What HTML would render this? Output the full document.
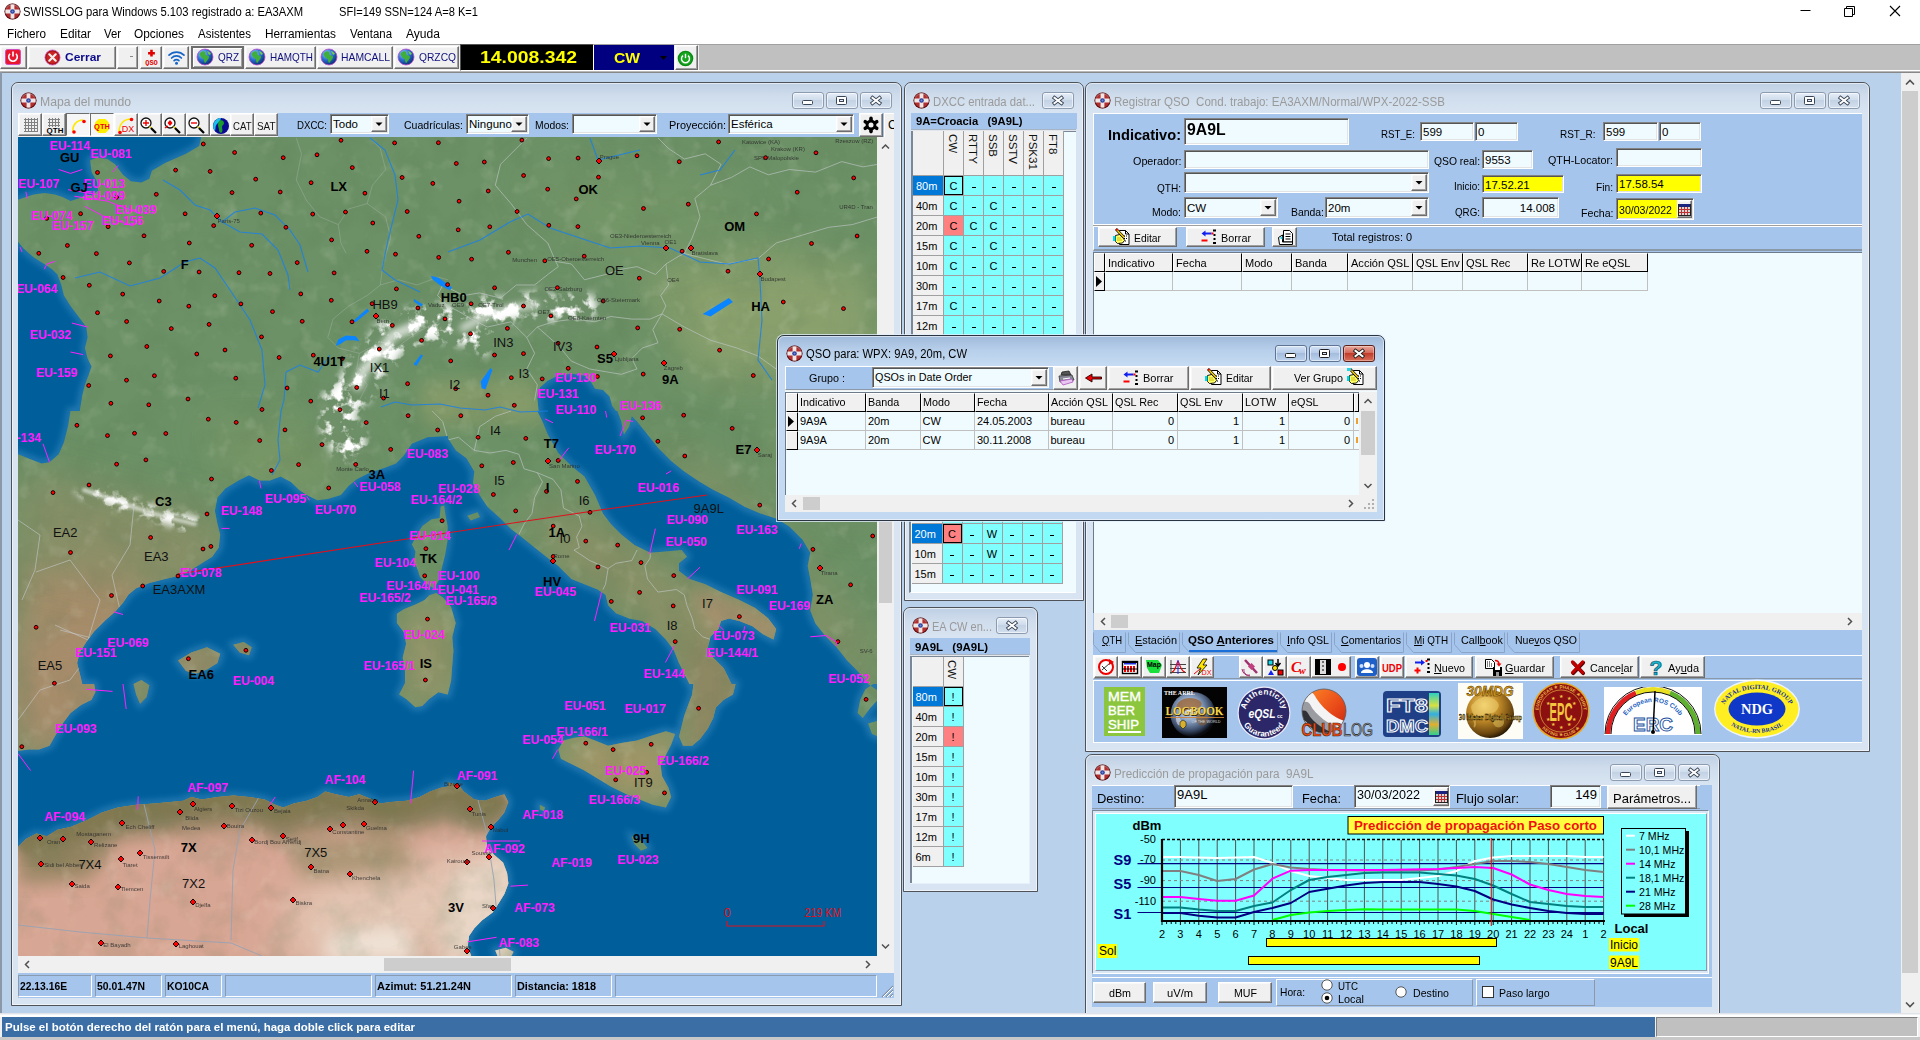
<!DOCTYPE html>
<html lang="es"><head><meta charset="utf-8"><title>SWISSLOG</title>
<style>
html,body{margin:0;padding:0;background:#b9d1ea;overflow:hidden}
#r{position:relative;width:1920px;height:1040px;overflow:hidden;font-family:"Liberation Sans",sans-serif;font-size:11px;background:#b9d1ea}
#r div,#r span.t,#r svg{position:absolute;box-sizing:border-box}
#r span.t{white-space:pre;display:block}
.sunk{border:1px solid;border-color:#828282 #fff #fff #828282;box-shadow:inset 1px 1px 0 #555,inset -1px -1px 0 #e3e3e3;background:#f0fbff}
.rais{border:1px solid;border-color:#fff #6d6d6d #6d6d6d #fff;box-shadow:inset -1px -1px 0 #a0a0a0,inset 1px 1px 0 #f8f8f8;background:#f0f0f0}
.pan{background:#a5c5ec}
.fr{border:1px solid #4f5258;border-radius:7px 7px 0 0;background:linear-gradient(#bfd0e5 0px,#d0ddec 14px,#d8e4f2 30px)}
.fra{border:1px solid #2b3440;border-radius:7px 7px 0 0;background:linear-gradient(#9fb9da 0px,#b7cfea 14px,#c6dbf3 30px,#c3d9f2 100%);box-shadow:0 0 0 1px rgba(225,240,255,.75)}
.cb{border:1px solid #8c9bb0;border-radius:3px;background:linear-gradient(#e6eef8,#cfdceb 45%,#c3d2e4 50%,#d3dfee);box-shadow:inset 0 0 0 1px rgba(255,255,255,.6)}
.cba{border:1px solid #5f7492;border-radius:3px;background:linear-gradient(#d4e3f6,#b7cce8 45%,#a4bddf 50%,#bdd2ec);box-shadow:inset 0 0 0 1px rgba(255,255,255,.5)}
.cbx{border:1px solid #5d2018;border-radius:3px;background:linear-gradient(#e9a99b,#d5695a 45%,#c13d2b 50%,#d9705a);box-shadow:inset 0 0 0 1px rgba(255,255,255,.35)}
</style></head>
<body><div id="r">
<div style="left:0px;top:0px;width:1920px;height:23px;background:#fff"></div>
<svg style="left:3.5px;top:3.0px" width="17.0" height="17.0" viewBox="-8.5 -8.5 17 17"><circle r="8" fill="#6e1215"/><circle r="7.1" fill="#b02f30"/><path d="M-1.9 -7.3h3.8v5.4h5.4v3.8h-5.4v5.4h-3.8v-5.4h-5.4v-3.8h5.4z" fill="#efe6e6"/><circle r="2.3" fill="#2a3f9c"/><circle r="1" fill="#6f86d8"/><path d="M-6.3 -3.2a7 7 0 0 1 12.6 0" fill="none" stroke="rgba(255,255,255,.3)" stroke-width="1.4"/><circle r="7.6" fill="none" stroke="rgba(60,0,0,.35)" stroke-width="1"/></svg>
<span class="t" style="left:23px;top:5px;font-size:12px;line-height:15px;height:15px;color:#000;transform:scaleX(0.9371);transform-origin:0 0;">SWISSLOG para Windows 5.103 registrado a: EA3AXM</span>
<span class="t" style="left:339px;top:5px;font-size:12px;line-height:15px;height:15px;color:#000;transform:scaleX(0.9260);transform-origin:0 0;">SFI=149 SSN=124 A=8 K=1</span>
<svg style="left:1780px;top:0" width="140" height="23" viewBox="0 0 140 23"><path d="M20.5 10.5h10" stroke="#000" stroke-width="1" fill="none"/><path d="M64.5 8.5h8v8h-8zM66.5 8.5v-2h8v8h-2" stroke="#000" stroke-width="1" fill="none"/><path d="M110 6l10 10M120 6l-10 10" stroke="#000" stroke-width="1.1" fill="none"/></svg>
<div style="left:0px;top:23px;width:1920px;height:21px;background:#fff"></div>
<span class="t" style="left:7px;top:27px;font-size:12px;line-height:15px;height:15px;color:#000;transform:scaleX(0.9747);transform-origin:0 0;">Fichero</span>
<span class="t" style="left:60px;top:27px;font-size:12px;line-height:15px;height:15px;color:#000;transform:scaleX(0.9890);transform-origin:0 0;">Editar</span>
<span class="t" style="left:104px;top:27px;font-size:12px;line-height:15px;height:15px;color:#000;transform:scaleX(0.9439);transform-origin:0 0;">Ver</span>
<span class="t" style="left:134px;top:27px;font-size:12px;line-height:15px;height:15px;color:#000;transform:scaleX(0.9863);transform-origin:0 0;">Opciones</span>
<span class="t" style="left:198px;top:27px;font-size:12px;line-height:15px;height:15px;color:#000;transform:scaleX(0.9574);transform-origin:0 0;">Asistentes</span>
<span class="t" style="left:265px;top:27px;font-size:12px;line-height:15px;height:15px;color:#000;transform:scaleX(0.9859);transform-origin:0 0;">Herramientas</span>
<span class="t" style="left:350px;top:27px;font-size:12px;line-height:15px;height:15px;color:#000;transform:scaleX(0.9536);transform-origin:0 0;">Ventana</span>
<span class="t" style="left:406px;top:27px;font-size:12px;line-height:15px;height:15px;color:#000;transform:scaleX(1.0057);transform-origin:0 0;">Ayuda</span>
<div style="left:0px;top:44px;width:1920px;height:28px;background:#c0c0c0;border-top:1px solid #a0a0a0;border-bottom:1px solid #fff"></div>
<div style="left:0px;top:70px;width:1920px;height:1px;background:#fff"></div>
<div style="left:0px;top:71px;width:1920px;height:2px;background:linear-gradient(#d0d0d0,#6f6f6f)"></div>
<div style="left:0px;top:45px;width:699px;height:25px;background:#f0f0f0"></div>
<div class="rais" style="left:0px;top:46px;width:27px;height:23px;"></div>
<div class="rais" style="left:28px;top:46px;width:88px;height:23px;"></div>
<div class="rais" style="left:117px;top:46px;width:21px;height:23px;"></div>
<div class="rais" style="left:140px;top:46px;width:22px;height:23px;"></div>
<div class="rais" style="left:163px;top:46px;width:26px;height:23px;"></div>
<div style="left:191px;top:46px;width:53px;height:23px;border:2px solid #6d6d6d;border-color:#6d6d6d #6d6d6d #6d6d6d #6d6d6d;box-shadow:inset 1px 1px 0 #fff,inset -1px -1px 0 #a0a0a0;background:#f0f0f0"></div>
<div class="rais" style="left:245px;top:46px;width:71px;height:23px;"></div>
<div class="rais" style="left:317px;top:46px;width:76px;height:23px;"></div>
<div class="rais" style="left:394px;top:46px;width:65px;height:23px;"></div>
<svg style="left:5px;top:49px" width="16" height="16" viewBox="0 0 16 16"><rect x=".5" y=".5" width="15" height="15" rx="2" fill="#e8172f" stroke="#d050c0"/><path d="M5 4.8a4.3 4.3 0 1 0 6 0" fill="none" stroke="#fff" stroke-width="1.6"/><path d="M8 2.5v5" stroke="#fff" stroke-width="1.6"/></svg>
<svg style="left:44px;top:49px" width="17" height="17" viewBox="0 0 17 17"><circle cx="8.5" cy="8.5" r="7.6" fill="#a3161a" stroke="#d060d0" stroke-width=".7"/><circle cx="8.5" cy="8.5" r="6" fill="#c22"/><path d="M5.3 5.3l6.4 6.4M11.7 5.3l-6.4 6.4" stroke="#eee" stroke-width="2.2" stroke-linecap="round"/></svg>
<span class="t" style="left:65px;top:51px;font-size:11.5px;line-height:13px;height:13px;color:#0a0a8c;font-weight:bold;transform:scaleX(1.0428);transform-origin:0 0;">Cerrar</span>
<div style="left:130px;top:56px;width:3px;height:1px;background:#888"></div>
<svg style="left:144px;top:49px" width="16" height="17" viewBox="0 0 16 17"><path d="M6 1h3v2.5h2.5v3H9V9H6V6.5H3.5v-3H6z" fill="#e00000" transform="translate(0,-.5) scale(.85) translate(1.3,.5)"/><text x="7.5" y="15.5" font-size="7" font-weight="bold" text-anchor="middle" fill="#e00000" font-family="Liberation Mono,monospace">QSO</text></svg>
<svg style="left:167px;top:48px" width="19" height="18" viewBox="0 0 19 18"><g fill="none" stroke="#1565c8" stroke-width="1.7" stroke-linecap="round"><path d="M2 7.2a10.5 10.5 0 0 1 15 0"/><path d="M4.6 10a6.8 6.8 0 0 1 9.8 0"/><path d="M7.1 12.7a3.3 3.3 0 0 1 4.8 0"/></g><circle cx="9.5" cy="15.3" r="1.5" fill="#1565c8"/></svg>
<svg style="left:196px;top:48px" width="18" height="18" viewBox="0 0 18 18"><defs><radialGradient id="gl205" cx="35%" cy="30%" r="75%"><stop offset="0" stop-color="#9fd4ff"/><stop offset=".5" stop-color="#2a6fd0"/><stop offset="1" stop-color="#0a2a70"/></radialGradient></defs><circle cx="9" cy="9" r="8" fill="url(#gl205)" stroke="#c04fd0" stroke-width=".8"/><path d="M4 5c2-2 4-2 5-1s0 2 1 3 3 0 3 2-2 3-3 5-2 0-2-2-2-1-3-3 -2-2-1-4z" fill="#3fae3a"/><path d="M11 3c1 0 3 1 4 3l-2 1z" fill="#6fcf4f"/></svg>
<span class="t" style="left:218px;top:51px;font-size:11px;line-height:13px;height:13px;color:#10107c;transform:scaleX(0.9044);transform-origin:0 0;">QRZ</span>
<svg style="left:248px;top:48px" width="18" height="18" viewBox="0 0 18 18"><defs><radialGradient id="gl257" cx="35%" cy="30%" r="75%"><stop offset="0" stop-color="#9fd4ff"/><stop offset=".5" stop-color="#2a6fd0"/><stop offset="1" stop-color="#0a2a70"/></radialGradient></defs><circle cx="9" cy="9" r="8" fill="url(#gl257)" stroke="#c04fd0" stroke-width=".8"/><path d="M4 5c2-2 4-2 5-1s0 2 1 3 3 0 3 2-2 3-3 5-2 0-2-2-2-1-3-3 -2-2-1-4z" fill="#3fae3a"/><path d="M11 3c1 0 3 1 4 3l-2 1z" fill="#6fcf4f"/></svg>
<span class="t" style="left:270px;top:51px;font-size:11px;line-height:13px;height:13px;color:#10107c;transform:scaleX(0.9022);transform-origin:0 0;">HAMQTH</span>
<svg style="left:320px;top:48px" width="18" height="18" viewBox="0 0 18 18"><defs><radialGradient id="gl329" cx="35%" cy="30%" r="75%"><stop offset="0" stop-color="#9fd4ff"/><stop offset=".5" stop-color="#2a6fd0"/><stop offset="1" stop-color="#0a2a70"/></radialGradient></defs><circle cx="9" cy="9" r="8" fill="url(#gl329)" stroke="#c04fd0" stroke-width=".8"/><path d="M4 5c2-2 4-2 5-1s0 2 1 3 3 0 3 2-2 3-3 5-2 0-2-2-2-1-3-3 -2-2-1-4z" fill="#3fae3a"/><path d="M11 3c1 0 3 1 4 3l-2 1z" fill="#6fcf4f"/></svg>
<span class="t" style="left:341px;top:51px;font-size:11px;line-height:13px;height:13px;color:#10107c;transform:scaleX(0.9430);transform-origin:0 0;">HAMCALL</span>
<svg style="left:397px;top:48px" width="18" height="18" viewBox="0 0 18 18"><defs><radialGradient id="gl406" cx="35%" cy="30%" r="75%"><stop offset="0" stop-color="#9fd4ff"/><stop offset=".5" stop-color="#2a6fd0"/><stop offset="1" stop-color="#0a2a70"/></radialGradient></defs><circle cx="9" cy="9" r="8" fill="url(#gl406)" stroke="#c04fd0" stroke-width=".8"/><path d="M4 5c2-2 4-2 5-1s0 2 1 3 3 0 3 2-2 3-3 5-2 0-2-2-2-1-3-3 -2-2-1-4z" fill="#3fae3a"/><path d="M11 3c1 0 3 1 4 3l-2 1z" fill="#6fcf4f"/></svg>
<span class="t" style="left:419px;top:51px;font-size:11px;line-height:13px;height:13px;color:#10107c;transform:scaleX(0.9316);transform-origin:0 0;">QRZCQ</span>
<div style="left:460px;top:44px;width:134px;height:27px;background:#000;border:1px solid #555;border-color:#555 #fff #fff #555"></div>
<div style="left:461px;top:45px;width:131px;height:25px;background:#000"></div>
<span class="t" style="left:480px;top:49px;font-size:16px;line-height:18px;height:18px;color:#ffff00;font-weight:bold;transform:scaleX(1.2114);transform-origin:0 0;">14.008.342</span>
<div style="left:594px;top:45px;width:80px;height:25px;background:#000080"></div>
<span class="t" style="left:613.5px;top:51px;font-size:14px;line-height:15px;height:15px;color:#ffff00;font-weight:bold;transform:scaleX(1.1147);transform-origin:0 0;">CW</span>
<svg style="left:660px;top:56px" width="8" height="5" viewBox="0 0 8 5"><path d="M0 0h7L3.5 4z" fill="#000"/></svg>
<div class="rais" style="left:675px;top:45px;width:23px;height:25px;"></div>
<svg style="left:677px;top:50px" width="17" height="17" viewBox="0 0 17 17"><circle cx="8.5" cy="8.5" r="7.8" fill="#0a8a12"/><circle cx="8.5" cy="8.5" r="6.4" fill="#16a51e"/><path d="M6 5.6a4 4 0 1 0 5 0" fill="none" stroke="#fff" stroke-width="1.4"/><path d="M8.5 3.8v4.4" stroke="#fff" stroke-width="1.4"/></svg>
<div style="left:0px;top:72px;width:2px;height:944px;background:#8a98a8"></div>
<div style="left:1901px;top:73px;width:19px;height:941px;background:#f0f0f0"></div>
<div style="left:1902px;top:91px;width:16px;height:882px;background:#cdcdcd"></div>
<svg style="left:1901px;top:72px" width="18" height="943" viewBox="0 0 18 943"><path d="M5 12.5l4-4 4 4" fill="none" stroke="#505050" stroke-width="1.6"/><path d="M5 930.500l4 4 4-4" fill="none" stroke="#505050" stroke-width="1.6"/></svg>
<div class="fr" style="left:11px;top:82px;width:891px;height:924px;"></div>
<div style="left:12px;top:83px;width:889px;height:922px;border:1px solid rgba(255,255,255,.55);border-radius:6px 6px 0 0"></div>
<svg style="left:19.5px;top:91.5px" width="17.0" height="17.0" viewBox="-8.5 -8.5 17 17"><circle r="8" fill="#6e1215"/><circle r="7.1" fill="#b02f30"/><path d="M-1.9 -7.3h3.8v5.4h5.4v3.8h-5.4v5.4h-3.8v-5.4h-5.4v-3.8h5.4z" fill="#efe6e6"/><circle r="2.3" fill="#2a3f9c"/><circle r="1" fill="#6f86d8"/><path d="M-6.3 -3.2a7 7 0 0 1 12.6 0" fill="none" stroke="rgba(255,255,255,.3)" stroke-width="1.4"/><circle r="7.6" fill="none" stroke="rgba(60,0,0,.35)" stroke-width="1"/></svg>
<span class="t" style="left:40px;top:94.5px;font-size:12.3px;line-height:15px;height:15px;color:#9a9a9a;transform:scaleX(0.9933);transform-origin:0 0;">Mapa del mundo</span>
<div class="cb" style="left:860px;top:92px;width:32px;height:17px;"></div><svg style="left:860px;top:92px" width="32" height="17" viewBox="0 0 32 17"><path d="M12.5 5.8l7 5.4M19.5 5.8l-7 5.4" stroke="#3a4656" stroke-width="3.8" stroke-linecap="square"/><path d="M12.5 5.8l7 5.4M19.5 5.8l-7 5.4" stroke="#fff" stroke-width="2" stroke-linecap="square"/></svg>
<div class="cb" style="left:826px;top:92px;width:32px;height:17px;"></div><svg style="left:826px;top:92px" width="32" height="17" viewBox="0 0 32 17"><rect x="10.5" y="4.5" width="10" height="8" rx="1" fill="#fff" stroke="#3a4656" stroke-width="1"/><rect x="13.5" y="7.5" width="4" height="2" fill="#dfe8f3" stroke="#3a4656" stroke-width="1"/></svg>
<div class="cb" style="left:792px;top:92px;width:32px;height:17px;"></div><svg style="left:792px;top:92px" width="32" height="17" viewBox="0 0 32 17"><rect x="10.5" y="8.5" width="10" height="4" rx="1" fill="#fff" stroke="#3a4656" stroke-width="1"/></svg>
<div style="left:18px;top:113px;width:876px;height:885px;background:#a5c5ec"></div>
<div style="left:18px;top:113px;width:260px;height:24px;background:#f0f0f0"></div>
<div class="rais" style="left:18px;top:113px;width:24px;height:23px;"></div>
<div class="rais" style="left:42px;top:113px;width:24px;height:23px;"></div>
<div style="left:66px;top:113px;width:24px;height:23px;border:1px solid;border-color:#6d6d6d #fff #fff #6d6d6d;background:#f6f6f6"></div>
<div style="left:90px;top:113px;width:24px;height:23px;border:1px solid;border-color:#6d6d6d #fff #fff #6d6d6d;background:#f6f6f6"></div>
<div class="rais" style="left:114px;top:113px;width:24px;height:23px;"></div>
<div class="rais" style="left:138px;top:113px;width:24px;height:23px;"></div>
<div class="rais" style="left:162px;top:113px;width:24px;height:23px;"></div>
<div class="rais" style="left:186px;top:113px;width:24px;height:23px;"></div>
<div class="rais" style="left:210px;top:113px;width:24px;height:23px;"></div>
<div class="rais" style="left:230px;top:113px;width:24px;height:23px;"></div>
<div class="rais" style="left:254px;top:113px;width:24px;height:23px;"></div>
<span class="t" style="left:232.6px;top:118.5px;font-size:10.5px;line-height:14px;height:14px;color:#111;transform:scaleX(0.9149);transform-origin:0 0;">CAT</span>
<span class="t" style="left:256.6px;top:118.5px;font-size:10.5px;line-height:14px;height:14px;color:#111;transform:scaleX(0.9419);transform-origin:0 0;">SAT</span>
<svg style="left:24px;top:118px" width="14" height="14" viewBox="0 0 14 14"><path d="M1.500 0v14M4.500 0v14M7.500 0v14M10.500 0v14M13.500 0v14M0 1.500h14M0 4.500h14M0 7.500h14M0 10.500h14M0 13.500h14" stroke="#808080" stroke-width="1"/></svg>
<svg style="left:46px;top:117px" width="18" height="18" viewBox="0 0 18 18"><path d="M3.500 1v9M6.500 1v9M9.500 1v9M12.500 1v9M2 2.500h12M2 5.500h12M2 8.500h12" stroke="#808080" stroke-width="1"/><text x="9" y="16" font-size="8" font-weight="bold" text-anchor="middle" fill="#000" font-family="Liberation Sans,sans-serif">QTH</text></svg>
<svg style="left:69px;top:117px" width="18" height="18" viewBox="0 0 18 18"><path d="M4 15C3 8 8 3 14 3" fill="none" stroke="#ffe800" stroke-width="1.6"/><circle cx="5" cy="15" r="1.8" fill="#f00"/><circle cx="15" cy="4.500" r="1.800" fill="#f00"/></svg>
<svg style="left:93px;top:117px" width="18" height="18" viewBox="0 0 18 18"><path d="M5.500 2h7l3.500 3.500v7l-3.500 3.500h-7l-3.500-3.500v-7z" fill="#ffee00"/><text x="9" y="12" font-size="7.500" font-weight="bold" text-anchor="middle" fill="#e00" font-family="Liberation Sans,sans-serif">QTH</text></svg>
<svg style="left:116px;top:117px" width="20" height="18" viewBox="0 0 20 18"><path d="M3 15C3 7 8 2 15 2" fill="none" stroke="#ffe800" stroke-width="1.6"/><circle cx="4" cy="15.500" r="1.800" fill="#f00"/><circle cx="15.500" cy="2.500" r="1.800" fill="#f00"/><text x="12" y="15" font-size="9" text-anchor="middle" fill="#e00" font-family="Liberation Sans,sans-serif">DX</text></svg>
<svg style="left:139px;top:116px" width="20" height="20" viewBox="0 0 20 20"><circle cx="7" cy="7" r="5" fill="#fff" stroke="#111" stroke-width="1.3"/><path d="M4 7h6M7 4v6" stroke="#e00" stroke-width="1.4"/><path d="M10.500 10.500l2 2" stroke="#e8d800" stroke-width="1.600"/><path d="M12 12l5 5" stroke="#000" stroke-width="2.200"/></svg>
<svg style="left:163px;top:116px" width="20" height="20" viewBox="0 0 20 20"><circle cx="7" cy="7" r="5" fill="#fff" stroke="#111" stroke-width="1.3"/><path d="M7 4l2.500 3-2.500 3-2.500-3z" fill="#e00"/><path d="M2 12l3-2" stroke="#e00" stroke-width="1.400"/><path d="M10.500 10.500l2 2" stroke="#e8d800" stroke-width="1.600"/><path d="M12 12l5 5" stroke="#000" stroke-width="2.200"/></svg>
<svg style="left:187px;top:116px" width="20" height="20" viewBox="0 0 20 20"><circle cx="7" cy="7" r="5" fill="#fff" stroke="#111" stroke-width="1.3"/><path d="M4 7h6" stroke="#e00" stroke-width="1.400"/><path d="M10.500 10.500l2 2" stroke="#e8d800" stroke-width="1.600"/><path d="M12 12l5 5" stroke="#000" stroke-width="2.200"/></svg>
<svg style="left:212px;top:117px" width="18" height="18" viewBox="0 0 18 18"><circle cx="9" cy="9" r="8" fill="#0a0a90"/><path d="M9 1a8 8 0 0 0-6 13c1-3 0-5 2-7s3-2 4-6z" fill="#19c0e8"/><path d="M8 3c2 0 4 1 4 3s-2 2-2 4 1 3 0 5-3 0-3-2 -1-3-1-5 1-4 2-5z" fill="#1a9a2a"/></svg>
<span class="t" style="left:297px;top:119px;font-size:11px;line-height:13px;height:13px;color:#000;transform:scaleX(0.8765);transform-origin:0 0;">DXCC:</span>
<div class="sunk" style="left:330px;top:114px;width:59px;height:20px;background:#f0fbff"></div><div class="rais" style="left:371px;top:116px;width:16px;height:16px;"></div><svg style="left:371px;top:116px" width="16" height="16" viewBox="0 0 16 16"><path d="M4.500 6.5h7l-3.500 3.500z" fill="#000"/></svg><span class="t" style="left:333px;top:117.0px;font-size:11.5px;line-height:14px;height:14px;color:#000;">Todo</span>
<span class="t" style="left:404px;top:119px;font-size:11px;line-height:13px;height:13px;color:#000;transform:scaleX(0.9555);transform-origin:0 0;">Cuadrículas:</span>
<div class="sunk" style="left:466px;top:114px;width:63px;height:20px;background:#f0fbff"></div><div class="rais" style="left:511px;top:116px;width:16px;height:16px;"></div><svg style="left:511px;top:116px" width="16" height="16" viewBox="0 0 16 16"><path d="M4.500 6.5h7l-3.500 3.500z" fill="#000"/></svg><span class="t" style="left:469px;top:117.0px;font-size:11.5px;line-height:14px;height:14px;color:#000;">Ninguno</span>
<span class="t" style="left:535px;top:119px;font-size:11px;line-height:13px;height:13px;color:#000;transform:scaleX(0.9426);transform-origin:0 0;">Modos:</span>
<div class="sunk" style="left:572px;top:114px;width:85px;height:20px;background:#f0fbff"></div><div class="rais" style="left:639px;top:116px;width:16px;height:16px;"></div><svg style="left:639px;top:116px" width="16" height="16" viewBox="0 0 16 16"><path d="M4.500 6.5h7l-3.500 3.500z" fill="#000"/></svg>
<span class="t" style="left:669px;top:119px;font-size:11px;line-height:13px;height:13px;color:#000;transform:scaleX(0.9919);transform-origin:0 0;">Proyección:</span>
<div class="sunk" style="left:728px;top:114px;width:126px;height:20px;background:#f0fbff"></div><div class="rais" style="left:836px;top:116px;width:16px;height:16px;"></div><svg style="left:836px;top:116px" width="16" height="16" viewBox="0 0 16 16"><path d="M4.500 6.5h7l-3.500 3.500z" fill="#000"/></svg><span class="t" style="left:731px;top:117.0px;font-size:11.5px;line-height:14px;height:14px;color:#000;">Esférica</span>
<div class="rais" style="left:859px;top:113px;width:24px;height:24px;"></div>
<svg style="left:861px;top:115px" width="20" height="20" viewBox="-10 -10 20 20"><g stroke="#000" stroke-width="3.600" stroke-linecap="round"><path d="M0 0V-6.600" transform="rotate(0)"/><path d="M0 0V-6.600" transform="rotate(60)"/><path d="M0 0V-6.600" transform="rotate(120)"/><path d="M0 0V-6.600" transform="rotate(180)"/><path d="M0 0V-6.600" transform="rotate(240)"/><path d="M0 0V-6.600" transform="rotate(300)"/></g><circle r="5.400" fill="#000"/><circle r="2.500" fill="#f0f0f0"/></svg>
<div style="left:884px;top:113px;width:10px;height:24px;border-left:1px solid #fff;border-top:1px solid #fff;background:#f0f0f0"></div>
<span class="t" style="left:888px;top:118px;font-size:12px;line-height:14px;height:14px;color:#000;width:6px;overflow:hidden;">C</span>
<svg style="left:18px;top:137px" width="859" height="819" viewBox="18 137 859 819">
<defs>
<filter id="b3" x="-40%" y="-40%" width="180%" height="180%"><feGaussianBlur stdDeviation="3"/></filter>
<filter id="b8" x="-30%" y="-30%" width="160%" height="160%"><feGaussianBlur stdDeviation="9"/></filter>
<filter id="b20" x="-50%" y="-50%" width="200%" height="200%"><feGaussianBlur stdDeviation="22"/></filter>
<filter id="b2" x="-20%" y="-20%" width="140%" height="140%"><feGaussianBlur stdDeviation="1.6"/></filter>
<filter id="rough" x="-25%" y="-25%" width="150%" height="150%"><feTurbulence type="fractalNoise" baseFrequency=".075" numOctaves="4" seed="11" result="n"/><feColorMatrix in="n" type="matrix" values="0 0 0 0 1  0 0 0 0 1  0 0 0 0 1  0 0 0 6 -2.95" result="m"/><feGaussianBlur in="SourceGraphic" stdDeviation="4" result="sb"/><feComposite in="sb" in2="m" operator="in"/></filter>
<filter id="tex" x="0" y="0" width="100%" height="100%"><feTurbulence type="fractalNoise" baseFrequency=".03" numOctaves="4" seed="3" result="n"/><feColorMatrix in="n" type="matrix" values="0 0 0 0 .1  0 0 0 0 .18  0 0 0 0 .08  0 0 0 3.2 -1.45"/></filter><filter id="tex2" x="0" y="0" width="100%" height="100%"><feTurbulence type="fractalNoise" baseFrequency=".05" numOctaves="3" seed="8" result="n"/><feColorMatrix in="n" type="matrix" values="0 0 0 0 .95  0 0 0 0 .95  0 0 0 0 .8  0 0 0 2.4 -1.35"/></filter>
<clipPath id="land"><path d="M201.8,135 199.1,145.9 186,153.8 165,162.9 151.9,170.8 149.3,178.7 141.4,182.6 130.9,181.3 123,174.8 115.1,164.3 107.3,159 96.8,157.7 90.2,160.3 91.5,172.1 96.8,181.3 98.1,190.5 91.5,195.8 86.3,194.4 78.4,198.4 70.5,201 62.6,197.1 54.8,194.4 44.3,193.1 33.8,194.4 25.9,197.1 18,199.7 18,241.7 23.3,248.3 33.8,257.5 44.3,264 52.1,269.3 57.4,274.5 61.3,285 63.9,295.5 70.5,306 78.4,316.5 86.3,327 87.6,337.5 84.9,348 87.6,358.5 91.5,366.4 88.9,374.3 84.9,384.8 82.3,395.3 79.7,411 70.5,411 67.9,426.8 63.9,442.5 58.7,454.3 49.5,462.2 41.6,463.5 31.1,459.6 18,454.3 18,750.9 28.5,749.6 39,749.6 49.5,745.7 54.8,736.5 62.6,723.4 70.5,712.9 81,705 91.5,699.8 95.4,691.9 94.1,684 82.3,684 79.7,673.5 77.1,663 79.7,652.5 86.3,642 94.1,631.5 104.6,621 115.1,611.8 123,602.7 128.3,594.8 136.1,588.2 149.3,583 165,579 178.1,575.9 191.3,569.8 201.8,563.3 212.3,556.7 218.8,547.5 220.2,534.4 217.5,523.9 214.9,510.8 217.5,497.6 225.4,488.4 238.5,480.6 249,475.3 259.5,480.6 270,480.6 280.5,476.6 291,481.9 298.9,489.8 306.8,495 317.3,500.3 327.8,498.9 340.9,495 348.8,485.8 356.7,479.3 369.8,472.7 385.6,467.4 396.1,463.5 403.9,455.6 411.8,443.8 427.6,437.3 448,435.9 448,438.6 455.9,450.4 466.4,458.3 474.3,471.4 472.9,483.2 479.5,495 487.4,506.8 500.5,518.6 511,529.1 521.5,537 534.6,547.5 547.8,558 558.3,565.9 571.4,579 584.5,584.3 597.6,589.5 605.5,594.8 608.1,605.3 616,613.2 629.1,618.4 642.3,621 655.4,628.9 665.9,639.4 673.8,649.9 679,663 684.3,673.5 689.5,684 693.5,684 692.2,694.5 688.2,705 684.3,715.5 681.7,726 679,736.5 683,745.7 692.2,745.7 700,739.1 707.9,728.6 713.2,718.1 715.8,707.6 723.7,699.8 732.9,694.5 735.5,684 731.5,684 723.7,668.3 713.2,657.8 707.9,647.3 710.5,636.8 718.4,628.9 721,621 728.9,618.4 739.4,621 752.5,626.3 763,634.2 773.5,639.4 776.2,628.9 768.3,618.4 755.2,607.9 739.4,600 721,592.1 705.3,584.3 689.5,579 679,571.1 679,563.3 686.9,556.7 681.7,550.1 665.9,551.5 650.2,552.8 634.4,544.9 621.3,534.4 610.8,523.9 602.9,513.4 595,495 584.5,476.6 571.4,466.1 558.3,453 547.8,434.6 542.5,421.5 537.3,411 538.6,411 537.3,397.9 539.9,387.4 547.8,380.8 558.3,375.6 571.4,373.8 584.5,375.6 591.1,382.2 595,388.7 602.9,390 609.5,396.6 612.1,405.8 616,411 617.3,411 621.3,421.5 623.9,434.6 629.1,426.8 631.8,416.3 637,421.5 647.5,434.6 658,447.8 671.2,460.9 684.3,471.4 700,481.9 713.2,489.8 728.9,497.6 744.7,506.8 760.4,513.4 776.2,518.6 789.3,526.5 802.4,539.6 810.3,552.8 807.7,565.9 810.3,579 812.9,594.8 810.3,610.5 815.6,623.7 826.1,636.8 836.6,647.3 847.1,660.4 857.6,670.9 868.1,684 877,690 877,135Z M18,846.8 25.9,838.9 36.4,833.6 46.9,836.3 57.4,829.7 70.5,827.1 86.3,820.5 102,812.6 117.8,807.4 136.1,804.8 154.5,803.5 170.3,802.1 183.4,800.8 191.3,796.9 201.8,799.5 217.5,796.9 233.3,795.6 249,796.9 264.8,799.5 275.3,804.8 283.2,807.4 293.7,803.5 306.8,800.8 317.3,796.9 325.2,791.6 335.7,794.3 348.8,796.9 359.3,794.3 372.4,799.5 380.3,803.5 390.8,802.1 406.6,800.8 419.7,796.9 430.2,791.6 440.7,787.7 448,786.4 448,782.5 458.5,785.1 463.8,791.6 474.3,799.5 484.8,800.8 495.3,796.9 504.4,794.3 508.4,802.1 504.4,812.6 497.9,820.5 491.3,827.1 486.1,836.3 487.4,846.8 493.9,854.6 503.1,862.5 507.1,873 508.4,883.5 504.4,894 497.9,904.5 492.6,912.4 482.1,920.3 474.3,928.2 469,936 467.7,946.5 471.6,957 18,957Z M178.1,660.4 191.3,652.5 207,647.3 220.2,653.8 217.5,663 207,669.6 196.5,673.5 186,670.9Z M233.3,644.7 243.8,642 251.7,647.3 249,655.2 239.8,652.5Z M133.5,684 141.4,680.1 149.3,685.3 146.6,697.1 140.1,703.7 136.1,694.5Z M558.3,749.6 563.5,740.4 574,737.8 584.5,736.5 595,740.4 608.1,745.7 621.3,743.1 637,740.4 652.8,735.2 665.9,731.3 675.1,733.9 671.2,744.4 665.9,754.9 660.7,765.4 662,775.9 668.5,787.7 671.2,796.9 665.9,807.4 652.8,804.8 639.7,799.5 626.5,794.3 610.8,786.4 597.6,778.5 584.5,770.6 571.4,764.1 560.9,758.8Z M631.8,836.3 642.3,841.5 647.5,848.1 641,850.7 634.4,844.1Z M539.9,804.8 545.1,807.4 543.8,811.3 539.9,809.5Z M495.3,950.5 505.8,947.8 513.6,951.8 511,957 497.9,957Z M865.4,689.3 873.3,684 878,684 878,699.8 870.7,707.6 862.8,718.1 857.6,712.9 860.2,699.8Z M868.1,723.4 878,720.8 878,736.5 872,733.9Z M440.7,506.5 444.2,505.4 445.4,514.6 447.7,526.1 447.7,540 445.4,553.8 441.9,567.7 439.6,579.2 433.8,588.4 426.9,583.8 420,576.9 417.7,570 414.2,560.7 415.4,551.5 411.9,544.6 416.5,535.4 422.3,526.1 431.5,519.2 439.6,518.1Z M429.2,595.3 436.1,593 443,597.6 451.1,606.9 455.7,623 452.3,636.9 453.4,650.7 452.3,664.5 451.1,680.7 447.7,694.5 438.4,692.2 429.2,699.1 422.3,706.1 415.4,707.2 406.1,699.1 399.2,694.5 405,683 405,671.5 402.7,657.6 406.1,643.8 403.8,632.2 396.9,623 396.9,613.8 403.8,609.2 415.4,604.6 424.6,600Z M467.3,515.8 477.6,512.3 480,516.9 470.7,520.4Z"/></clipPath>
</defs>
<rect x="18" y="137" width="859" height="819" fill="#005f9b"/>
<path d="M201.8,135 199.1,145.9 186,153.8 165,162.9 151.9,170.8 149.3,178.7 141.4,182.6 130.9,181.3 123,174.8 115.1,164.3 107.3,159 96.8,157.7 90.2,160.3 91.5,172.1 96.8,181.3 98.1,190.5 91.5,195.8 86.3,194.4 78.4,198.4 70.5,201 62.6,197.1 54.8,194.4 44.3,193.1 33.8,194.4 25.9,197.1 18,199.7 18,241.7 23.3,248.3 33.8,257.5 44.3,264 52.1,269.3 57.4,274.5 61.3,285 63.9,295.5 70.5,306 78.4,316.5 86.3,327 87.6,337.5 84.9,348 87.6,358.5 91.5,366.4 88.9,374.3 84.9,384.8 82.3,395.3 79.7,411 70.5,411 67.9,426.8 63.9,442.5 58.7,454.3 49.5,462.2 41.6,463.5 31.1,459.6 18,454.3 18,750.9 28.5,749.6 39,749.6 49.5,745.7 54.8,736.5 62.6,723.4 70.5,712.9 81,705 91.5,699.8 95.4,691.9 94.1,684 82.3,684 79.7,673.5 77.1,663 79.7,652.5 86.3,642 94.1,631.5 104.6,621 115.1,611.8 123,602.7 128.3,594.8 136.1,588.2 149.3,583 165,579 178.1,575.9 191.3,569.8 201.8,563.3 212.3,556.7 218.8,547.5 220.2,534.4 217.5,523.9 214.9,510.8 217.5,497.6 225.4,488.4 238.5,480.6 249,475.3 259.5,480.6 270,480.6 280.5,476.6 291,481.9 298.9,489.8 306.8,495 317.3,500.3 327.8,498.9 340.9,495 348.8,485.8 356.7,479.3 369.8,472.7 385.6,467.4 396.1,463.5 403.9,455.6 411.8,443.8 427.6,437.3 448,435.9 448,438.6 455.9,450.4 466.4,458.3 474.3,471.4 472.9,483.2 479.5,495 487.4,506.8 500.5,518.6 511,529.1 521.5,537 534.6,547.5 547.8,558 558.3,565.9 571.4,579 584.5,584.3 597.6,589.5 605.5,594.8 608.1,605.3 616,613.2 629.1,618.4 642.3,621 655.4,628.9 665.9,639.4 673.8,649.9 679,663 684.3,673.5 689.5,684 693.5,684 692.2,694.5 688.2,705 684.3,715.5 681.7,726 679,736.5 683,745.7 692.2,745.7 700,739.1 707.9,728.6 713.2,718.1 715.8,707.6 723.7,699.8 732.9,694.5 735.5,684 731.5,684 723.7,668.3 713.2,657.8 707.9,647.3 710.5,636.8 718.4,628.9 721,621 728.9,618.4 739.4,621 752.5,626.3 763,634.2 773.5,639.4 776.2,628.9 768.3,618.4 755.2,607.9 739.4,600 721,592.1 705.3,584.3 689.5,579 679,571.1 679,563.3 686.9,556.7 681.7,550.1 665.9,551.5 650.2,552.8 634.4,544.9 621.3,534.4 610.8,523.9 602.9,513.4 595,495 584.5,476.6 571.4,466.1 558.3,453 547.8,434.6 542.5,421.5 537.3,411 538.6,411 537.3,397.9 539.9,387.4 547.8,380.8 558.3,375.6 571.4,373.8 584.5,375.6 591.1,382.2 595,388.7 602.9,390 609.5,396.6 612.1,405.8 616,411 617.3,411 621.3,421.5 623.9,434.6 629.1,426.8 631.8,416.3 637,421.5 647.5,434.6 658,447.8 671.2,460.9 684.3,471.4 700,481.9 713.2,489.8 728.9,497.6 744.7,506.8 760.4,513.4 776.2,518.6 789.3,526.5 802.4,539.6 810.3,552.8 807.7,565.9 810.3,579 812.9,594.8 810.3,610.5 815.6,623.7 826.1,636.8 836.6,647.3 847.1,660.4 857.6,670.9 868.1,684 877,690 877,135Z M18,846.8 25.9,838.9 36.4,833.6 46.9,836.3 57.4,829.7 70.5,827.1 86.3,820.5 102,812.6 117.8,807.4 136.1,804.8 154.5,803.5 170.3,802.1 183.4,800.8 191.3,796.9 201.8,799.5 217.5,796.9 233.3,795.6 249,796.9 264.8,799.5 275.3,804.8 283.2,807.4 293.7,803.5 306.8,800.8 317.3,796.9 325.2,791.6 335.7,794.3 348.8,796.9 359.3,794.3 372.4,799.5 380.3,803.5 390.8,802.1 406.6,800.8 419.7,796.9 430.2,791.6 440.7,787.7 448,786.4 448,782.5 458.5,785.1 463.8,791.6 474.3,799.5 484.8,800.8 495.3,796.9 504.4,794.3 508.4,802.1 504.4,812.6 497.9,820.5 491.3,827.1 486.1,836.3 487.4,846.8 493.9,854.6 503.1,862.5 507.1,873 508.4,883.5 504.4,894 497.9,904.5 492.6,912.4 482.1,920.3 474.3,928.2 469,936 467.7,946.5 471.6,957 18,957Z M178.1,660.4 191.3,652.5 207,647.3 220.2,653.8 217.5,663 207,669.6 196.5,673.5 186,670.9Z M233.3,644.7 243.8,642 251.7,647.3 249,655.2 239.8,652.5Z M133.5,684 141.4,680.1 149.3,685.3 146.6,697.1 140.1,703.7 136.1,694.5Z M558.3,749.6 563.5,740.4 574,737.8 584.5,736.5 595,740.4 608.1,745.7 621.3,743.1 637,740.4 652.8,735.2 665.9,731.3 675.1,733.9 671.2,744.4 665.9,754.9 660.7,765.4 662,775.9 668.5,787.7 671.2,796.9 665.9,807.4 652.8,804.8 639.7,799.5 626.5,794.3 610.8,786.4 597.6,778.5 584.5,770.6 571.4,764.1 560.9,758.8Z M631.8,836.3 642.3,841.5 647.5,848.1 641,850.7 634.4,844.1Z M539.9,804.8 545.1,807.4 543.8,811.3 539.9,809.5Z M495.3,950.5 505.8,947.8 513.6,951.8 511,957 497.9,957Z M865.4,689.3 873.3,684 878,684 878,699.8 870.7,707.6 862.8,718.1 857.6,712.9 860.2,699.8Z M868.1,723.4 878,720.8 878,736.5 872,733.9Z M440.7,506.5 444.2,505.4 445.4,514.6 447.7,526.1 447.7,540 445.4,553.8 441.9,567.7 439.6,579.2 433.8,588.4 426.9,583.8 420,576.9 417.7,570 414.2,560.7 415.4,551.5 411.9,544.6 416.5,535.4 422.3,526.1 431.5,519.2 439.6,518.1Z M429.2,595.3 436.1,593 443,597.6 451.1,606.9 455.7,623 452.3,636.9 453.4,650.7 452.3,664.5 451.1,680.7 447.7,694.5 438.4,692.2 429.2,699.1 422.3,706.1 415.4,707.2 406.1,699.1 399.2,694.5 405,683 405,671.5 402.7,657.6 406.1,643.8 403.8,632.2 396.9,623 396.9,613.8 403.8,609.2 415.4,604.6 424.6,600Z M467.3,515.8 477.6,512.3 480,516.9 470.7,520.4Z" fill="none" stroke="#3585bd" stroke-width="7" filter="url(#b3)" opacity=".7"/>
<path d="M201.8,135 199.1,145.9 186,153.8 165,162.9 151.9,170.8 149.3,178.7 141.4,182.6 130.9,181.3 123,174.8 115.1,164.3 107.3,159 96.8,157.7 90.2,160.3 91.5,172.1 96.8,181.3 98.1,190.5 91.5,195.8 86.3,194.4 78.4,198.4 70.5,201 62.6,197.1 54.8,194.4 44.3,193.1 33.8,194.4 25.9,197.1 18,199.7 18,241.7 23.3,248.3 33.8,257.5 44.3,264 52.1,269.3 57.4,274.5 61.3,285 63.9,295.5 70.5,306 78.4,316.5 86.3,327 87.6,337.5 84.9,348 87.6,358.5 91.5,366.4 88.9,374.3 84.9,384.8 82.3,395.3 79.7,411 70.5,411 67.9,426.8 63.9,442.5 58.7,454.3 49.5,462.2 41.6,463.5 31.1,459.6 18,454.3 18,750.9 28.5,749.6 39,749.6 49.5,745.7 54.8,736.5 62.6,723.4 70.5,712.9 81,705 91.5,699.8 95.4,691.9 94.1,684 82.3,684 79.7,673.5 77.1,663 79.7,652.5 86.3,642 94.1,631.5 104.6,621 115.1,611.8 123,602.7 128.3,594.8 136.1,588.2 149.3,583 165,579 178.1,575.9 191.3,569.8 201.8,563.3 212.3,556.7 218.8,547.5 220.2,534.4 217.5,523.9 214.9,510.8 217.5,497.6 225.4,488.4 238.5,480.6 249,475.3 259.5,480.6 270,480.6 280.5,476.6 291,481.9 298.9,489.8 306.8,495 317.3,500.3 327.8,498.9 340.9,495 348.8,485.8 356.7,479.3 369.8,472.7 385.6,467.4 396.1,463.5 403.9,455.6 411.8,443.8 427.6,437.3 448,435.9 448,438.6 455.9,450.4 466.4,458.3 474.3,471.4 472.9,483.2 479.5,495 487.4,506.8 500.5,518.6 511,529.1 521.5,537 534.6,547.5 547.8,558 558.3,565.9 571.4,579 584.5,584.3 597.6,589.5 605.5,594.8 608.1,605.3 616,613.2 629.1,618.4 642.3,621 655.4,628.9 665.9,639.4 673.8,649.9 679,663 684.3,673.5 689.5,684 693.5,684 692.2,694.5 688.2,705 684.3,715.5 681.7,726 679,736.5 683,745.7 692.2,745.7 700,739.1 707.9,728.6 713.2,718.1 715.8,707.6 723.7,699.8 732.9,694.5 735.5,684 731.5,684 723.7,668.3 713.2,657.8 707.9,647.3 710.5,636.8 718.4,628.9 721,621 728.9,618.4 739.4,621 752.5,626.3 763,634.2 773.5,639.4 776.2,628.9 768.3,618.4 755.2,607.9 739.4,600 721,592.1 705.3,584.3 689.5,579 679,571.1 679,563.3 686.9,556.7 681.7,550.1 665.9,551.5 650.2,552.8 634.4,544.9 621.3,534.4 610.8,523.9 602.9,513.4 595,495 584.5,476.6 571.4,466.1 558.3,453 547.8,434.6 542.5,421.5 537.3,411 538.6,411 537.3,397.9 539.9,387.4 547.8,380.8 558.3,375.6 571.4,373.8 584.5,375.6 591.1,382.2 595,388.7 602.9,390 609.5,396.6 612.1,405.8 616,411 617.3,411 621.3,421.5 623.9,434.6 629.1,426.8 631.8,416.3 637,421.5 647.5,434.6 658,447.8 671.2,460.9 684.3,471.4 700,481.9 713.2,489.8 728.9,497.6 744.7,506.8 760.4,513.4 776.2,518.6 789.3,526.5 802.4,539.6 810.3,552.8 807.7,565.9 810.3,579 812.9,594.8 810.3,610.5 815.6,623.7 826.1,636.8 836.6,647.3 847.1,660.4 857.6,670.9 868.1,684 877,690 877,135Z M18,846.8 25.9,838.9 36.4,833.6 46.9,836.3 57.4,829.7 70.5,827.1 86.3,820.5 102,812.6 117.8,807.4 136.1,804.8 154.5,803.5 170.3,802.1 183.4,800.8 191.3,796.9 201.8,799.5 217.5,796.9 233.3,795.6 249,796.9 264.8,799.5 275.3,804.8 283.2,807.4 293.7,803.5 306.8,800.8 317.3,796.9 325.2,791.6 335.7,794.3 348.8,796.9 359.3,794.3 372.4,799.5 380.3,803.5 390.8,802.1 406.6,800.8 419.7,796.9 430.2,791.6 440.7,787.7 448,786.4 448,782.5 458.5,785.1 463.8,791.6 474.3,799.5 484.8,800.8 495.3,796.9 504.4,794.3 508.4,802.1 504.4,812.6 497.9,820.5 491.3,827.1 486.1,836.3 487.4,846.8 493.9,854.6 503.1,862.5 507.1,873 508.4,883.5 504.4,894 497.9,904.5 492.6,912.4 482.1,920.3 474.3,928.2 469,936 467.7,946.5 471.6,957 18,957Z M178.1,660.4 191.3,652.5 207,647.3 220.2,653.8 217.5,663 207,669.6 196.5,673.5 186,670.9Z M233.3,644.7 243.8,642 251.7,647.3 249,655.2 239.8,652.5Z M133.5,684 141.4,680.1 149.3,685.3 146.6,697.1 140.1,703.7 136.1,694.5Z M558.3,749.6 563.5,740.4 574,737.8 584.5,736.5 595,740.4 608.1,745.7 621.3,743.1 637,740.4 652.8,735.2 665.9,731.3 675.1,733.9 671.2,744.4 665.9,754.9 660.7,765.4 662,775.9 668.5,787.7 671.2,796.9 665.9,807.4 652.8,804.8 639.7,799.5 626.5,794.3 610.8,786.4 597.6,778.5 584.5,770.6 571.4,764.1 560.9,758.8Z M631.8,836.3 642.3,841.5 647.5,848.1 641,850.7 634.4,844.1Z M539.9,804.8 545.1,807.4 543.8,811.3 539.9,809.5Z M495.3,950.5 505.8,947.8 513.6,951.8 511,957 497.9,957Z M865.4,689.3 873.3,684 878,684 878,699.8 870.7,707.6 862.8,718.1 857.6,712.9 860.2,699.8Z M868.1,723.4 878,720.8 878,736.5 872,733.9Z M440.7,506.5 444.2,505.4 445.4,514.6 447.7,526.1 447.7,540 445.4,553.8 441.9,567.7 439.6,579.2 433.8,588.4 426.9,583.8 420,576.9 417.7,570 414.2,560.7 415.4,551.5 411.9,544.6 416.5,535.4 422.3,526.1 431.5,519.2 439.6,518.1Z M429.2,595.3 436.1,593 443,597.6 451.1,606.9 455.7,623 452.3,636.9 453.4,650.7 452.3,664.5 451.1,680.7 447.7,694.5 438.4,692.2 429.2,699.1 422.3,706.1 415.4,707.2 406.1,699.1 399.2,694.5 405,683 405,671.5 402.7,657.6 406.1,643.8 403.8,632.2 396.9,623 396.9,613.8 403.8,609.2 415.4,604.6 424.6,600Z M467.3,515.8 477.6,512.3 480,516.9 470.7,520.4Z" fill="#6c9166"/>
<g clip-path="url(#land)">
<path d="M18,560 120,545 175,600 120,700 18,760Z" fill="#a68d6a" filter="url(#b20)" opacity="1"/>
<path d="M18,640 110,630 90,750 18,760Z" fill="#a88c6c" filter="url(#b20)" opacity="0.8"/>
<path d="M170,640 260,640 260,725 130,725Z" fill="#918b67" filter="url(#b8)" opacity="1"/>
<path d="M18,470 150,500 230,520 215,600 100,580 18,560Z" fill="#8c8f68" filter="url(#b20)" opacity="0.85"/>
<path d="M200,420 330,430 360,480 250,500Z" fill="#7e9a68" filter="url(#b20)" opacity="0.7"/>
<path d="M640,270 760,250 877,270 877,380 700,380Z" fill="#8da26e" filter="url(#b20)" opacity="0.9"/>
<path d="M520,180 700,170 760,230 600,260Z" fill="#7d9c6a" filter="url(#b20)" opacity="0.5"/>
<path d="M420,382 535,380 545,422 425,425Z" fill="#8a9c6a" filter="url(#b8)" opacity="0.85"/>
<path d="M520,500 600,520 700,590 790,640 740,700 690,760 640,620 560,570Z" fill="#8b9066" filter="url(#b20)" opacity="1"/>
<path d="M690,640 740,660 740,760 690,760Z" fill="#8d8762" filter="url(#b8)" opacity="0.9"/>
<path d="M690,585 780,615 790,645 710,630Z" fill="#aa9270" filter="url(#b8)" opacity="0.95"/>
<path d="M560,730 680,730 680,810 560,790Z" fill="#a59668" filter="url(#b20)" opacity="1"/>
<path d="M395,600 460,600 460,710 400,710Z" fill="#9d966a" filter="url(#b20)" opacity="0.9"/>
<path d="M650,440 720,470 800,560 877,640 877,700 800,640 700,520Z" fill="#8a9268" filter="url(#b20)" opacity="0.7"/>
<path d="M760,420 877,420 877,520 800,500Z" fill="#7f9967" filter="url(#b20)" opacity="0.6"/>
<path d="M18,846.8 25.9,838.9 36.4,833.6 46.9,836.3 57.4,829.7 70.5,827.1 86.3,820.5 102,812.6 117.8,807.4 136.1,804.8 154.5,803.5 170.3,802.1 183.4,800.8 191.3,796.9 201.8,799.5 217.5,796.9 233.3,795.6 249,796.9 264.8,799.5 275.3,804.8 283.2,807.4 293.7,803.5 306.8,800.8 317.3,796.9 325.2,791.6 335.7,794.3 348.8,796.9 359.3,794.3 372.4,799.5 380.3,803.5 390.8,802.1 406.6,800.8 419.7,796.9 430.2,791.6 440.7,787.7 448,786.4 448,782.5 458.5,785.1 463.8,791.6 474.3,799.5 484.8,800.8 495.3,796.9 504.4,794.3 508.4,802.1 504.4,812.6 497.9,820.5 491.3,827.1 486.1,836.3 487.4,846.8 493.9,854.6 503.1,862.5 507.1,873 508.4,883.5 504.4,894 497.9,904.5 492.6,912.4 482.1,920.3 474.3,928.2 469,936 467.7,946.5 471.6,957 18,957Z" fill="#d8a694"/>
<path d="M300,880 420,860 530,850 530,960 280,960Z" fill="#e3c6b4" filter="url(#b20)"/>
<path d="M330,935 400,925 420,960 320,960Z" fill="#f0e6da" filter="url(#b8)" opacity=".9"/>
<path d="M455,870 515,850 510,960 440,960Z" fill="#ead8c8" filter="url(#b8)" opacity=".9"/>
<path d="M18,846.8 25.9,838.9 36.4,833.6 46.9,836.3 57.4,829.7 70.5,827.1 86.3,820.5 102,812.6 117.8,807.4 136.1,804.8 154.5,803.5 170.3,802.1 183.4,800.8 191.3,796.9 201.8,799.5 217.5,796.9 233.3,795.6 249,796.9 264.8,799.5 275.3,804.8 283.2,807.4 293.7,803.5 306.8,800.8 317.3,796.9 325.2,791.6 335.7,794.3 348.8,796.9 359.3,794.3 372.4,799.5 380.3,803.5 390.8,802.1 406.6,800.8 419.7,796.9 430.2,791.6 440.7,787.7 448,786.4 448,782.5 458.5,785.1 463.8,791.6 474.3,799.5 484.8,800.8 495.3,796.9 504.4,794.3" fill="none" stroke="#857b58" stroke-width="62" stroke-linejoin="round" filter="url(#b8)" opacity=".95"/>
<path d="M18,846.8 25.9,838.9 36.4,833.6 46.9,836.3 57.4,829.7 70.5,827.1 86.3,820.5 102,812.6 117.8,807.4 136.1,804.8 154.5,803.5 170.3,802.1 183.4,800.8 191.3,796.9 201.8,799.5 217.5,796.9 233.3,795.6 249,796.9 264.8,799.5 275.3,804.8 283.2,807.4 293.7,803.5 306.8,800.8 317.3,796.9 325.2,791.6 335.7,794.3 348.8,796.9 359.3,794.3 372.4,799.5 380.3,803.5 390.8,802.1 406.6,800.8 419.7,796.9 430.2,791.6 440.7,787.7 448,786.4 448,782.5 458.5,785.1 463.8,791.6 474.3,799.5 484.8,800.8 495.3,796.9 504.4,794.3" fill="none" stroke="#81784f" stroke-width="26" stroke-linejoin="round" filter="url(#b3)" opacity=".8"/>
<path d="M18,850 60,842 110,850 90,880 18,885Z" fill="#8a805a" filter="url(#b8)" opacity=".8"/>
<path d="M290,840 400,835 420,870 300,880Z" fill="#9a8c68" filter="url(#b8)" opacity=".7"/>
<rect x="18" y="137" width="859" height="819" filter="url(#tex)" opacity=".13"/>
<rect x="18" y="137" width="859" height="819" filter="url(#tex2)" opacity=".16"/>
<path d="M348,443 338.5,424 338.5,404.6 357.7,385.4 363.5,370 380.8,352.7 392.3,335.4 415.4,325.8 438.5,322 463.5,327.7 488.5,314.2 511.5,308.5 534.6,304.6 555.8,308.5 585,306" fill="none" stroke="#6f8f6c" stroke-width="50" stroke-linecap="round" stroke-linejoin="round" filter="url(#b8)" opacity=".55"/>
<g filter="url(#rough)"><path d="M348,443 338.5,424 338.5,404.6 357.7,385.4 363.5,370 380.8,352.7 392.3,335.4 415.4,325.8 438.5,322 463.5,327.7 488.5,314.2" fill="none" stroke="#fff" stroke-width="36" stroke-linecap="round" stroke-linejoin="round"/><path d="M463.5,327.7 488.5,314.2 511.5,308.5 534.6,304.6 555.8,308.5 585,306" fill="none" stroke="#fff" stroke-width="24" stroke-linecap="round" stroke-linejoin="round"/><path d="M463.5,327.7 473,333.5 482.7,347" fill="none" stroke="#fff" stroke-width="16" stroke-linecap="round"/></g>
<path d="M357.7,385.4 363.5,370 380.8,352.7 392.3,335.4 415.4,325.8" fill="none" stroke="#fff" stroke-width="10" stroke-linecap="round" stroke-linejoin="round" filter="url(#b3)" opacity=".7"/>
<path d="M463.5,327.7 488.5,314.2 511.5,308.5 534.6,304.6" fill="none" stroke="#fff" stroke-width="8" stroke-linecap="round" stroke-linejoin="round" filter="url(#b3)" opacity=".65"/>
<g filter="url(#rough)"><path d="M84,490 105,497 130,506 155,514 178,520 195,524" fill="none" stroke="#fff" stroke-width="14" stroke-linecap="round"/></g>
<path d="M84,490 105,497 130,506 155,514 178,520 195,524" fill="none" stroke="#fff" stroke-width="4" stroke-linecap="round" filter="url(#b2)" opacity=".6"/>
<path d="M478,800 486,830 494,880 500,956" fill="none" stroke="#98a2b2" stroke-width="1" opacity=".9"/>
<path d="M143,800 155,850 150,900 147,938" fill="none" stroke="#98a2b2" stroke-width="1" opacity=".9"/>
<path d="M262,792 240,830 233,870 231,940" fill="none" stroke="#98a2b2" stroke-width="1" opacity=".9"/>
<path d="M18,925 80,932 147,938 231,943 262,956" fill="none" stroke="#98a2b2" stroke-width="1" opacity=".9"/>
<path d="M380.3,285 367.2,295.5 348.8,306 333,319.1 327.8,337.5 338.3,348 359.3,353.3 375,345.4 396.1,348 417.1,332.3 438.1,321.8 448,306" fill="none" stroke="#c4cacc" stroke-width="1" opacity=".28"/>
<path d="M359.3,353.3 356.7,369 367.2,384.8 359.3,400.5 348.8,411" fill="none" stroke="#c4cacc" stroke-width="1" opacity=".28"/>
<path d="M380.3,285 398.7,279.8 417.1,285 438.1,277.1 448,279.8" fill="none" stroke="#c4cacc" stroke-width="1" opacity=".28"/>
<path d="M380.3,285 382.9,264 390.8,237.8 385.6,216.8 367.2,203.6 348.8,208.9 338.3,224.6 340.9,243 346.2,253.5" fill="none" stroke="#c4cacc" stroke-width="1" opacity=".28"/>
<path d="M338.3,224.6 319.9,216.8 306.8,201 296.3,180 301.5,153.8 296.3,138" fill="none" stroke="#c4cacc" stroke-width="1" opacity=".28"/>
<path d="M367.2,203.6 372.4,185.3 385.6,169.5 380.3,148.5 369.8,138" fill="none" stroke="#c4cacc" stroke-width="1" opacity=".28"/>
<path d="M18,520 40,535 35,570 22,600" fill="none" stroke="#c4cacc" stroke-width="1" opacity=".6"/>
<path d="M36,572 70,560 100,600 88,640 55,625" fill="none" stroke="#c4cacc" stroke-width="1" opacity=".6"/>
<path d="M134,505 130,545 112,575 120,610 100,640 60,630" fill="none" stroke="#c4cacc" stroke-width="1" opacity=".6"/>
<path d="M100,640 70,680 40,690 18,720" fill="none" stroke="#c4cacc" stroke-width="1" opacity=".6"/>
<path d="M448,439.9 458.5,437.3 474.3,450.4 490,453 505.8,450.4 518.9,454.3 524.1,468.8 537.3,472.7" fill="none" stroke="#c4cacc" stroke-width="1" opacity=".6"/>
<path d="M537.3,472.7 542.5,481.9 534.6,497.6 532,513.4 524.1,523.9 518.9,534.4" fill="none" stroke="#c4cacc" stroke-width="1" opacity=".6"/>
<path d="M537.3,472.7 553,479.3 560.9,489.8 563.5,508.1 579.3,516 581.9,526.5 576.6,537 579.3,547.5 574,550.1" fill="none" stroke="#c4cacc" stroke-width="1" opacity=".6"/>
<path d="M574,550.1 589.8,560.6 608.1,568.5 605.5,584.3 602.9,589.5" fill="none" stroke="#c4cacc" stroke-width="1" opacity=".6"/>
<path d="M608.1,568.5 616,563.3 631.8,560.6 637,550.1" fill="none" stroke="#c4cacc" stroke-width="1" opacity=".6"/>
<path d="M644.9,565.9 647.5,579 658,592.1 676.4,589.5 684.3,594.8 686.9,605.3 692.2,618.4 694.8,628.9 702.7,636.8 710.5,639.4" fill="none" stroke="#c4cacc" stroke-width="1" opacity=".6"/>
<path d="M644.9,565.9 650.2,558 650.2,547.5" fill="none" stroke="#c4cacc" stroke-width="1" opacity=".6"/>
<path d="M432.2,411 442.7,421.5 448,439.9" fill="none" stroke="#c4cacc" stroke-width="1" opacity=".6"/>
<path d="M474.3,450.4 479.5,426.8 495.3,416.3 511,411" fill="none" stroke="#c4cacc" stroke-width="1" opacity=".6"/>
<path d="M555.6,261.4 571.4,264 584.5,279.8 605.5,274.5 621.3,269.3 637,266.6 655.4,274.5 665.9,264 679,256.1 684.3,253.5" fill="none" stroke="#c4cacc" stroke-width="1" opacity=".6"/>
<path d="M665.9,264 668.5,285 660.7,295.5 665.9,306 662,313.9" fill="none" stroke="#c4cacc" stroke-width="1" opacity=".6"/>
<path d="M662,313.9 650.2,319.1 631.8,319.1 610.8,316.5 595,321.8 574,319.1 553,321.8 537.3,327 526.8,337.5" fill="none" stroke="#c4cacc" stroke-width="1" opacity=".6"/>
<path d="M526.8,337.5 511,321.8 487.4,327 471.6,319.1 458.5,311.3 448,306 437.5,295.5 442.7,285" fill="none" stroke="#c4cacc" stroke-width="1" opacity=".6"/>
<path d="M442.7,285 463.8,295.5 479.5,292.9 500.5,298.1 516.3,285 534.6,285 547.8,274.5 558.3,266.6 555.6,261.4" fill="none" stroke="#c4cacc" stroke-width="1" opacity=".6"/>
<path d="M662,313.9 652.8,329.7 658,342.8 642.3,348 631.8,358.5 637,369 621.3,374.3 605.5,371.7" fill="none" stroke="#c4cacc" stroke-width="1" opacity=".6"/>
<path d="M662,313.9 684.3,327 710.5,340.2 736.8,348 757.8,355.9 776.2,369" fill="none" stroke="#c4cacc" stroke-width="1" opacity=".6"/>
<path d="M684.3,253.5 705.3,258.8 726.3,264 742,261.4 757.8,258.8 776.2,243 802.4,235.1 828.7,227.3 852.3,224.6 878,216.8" fill="none" stroke="#c4cacc" stroke-width="1" opacity=".6"/>
<path d="M684.3,253.5 692.2,237.8 700,216.8 694.8,198.4 710.5,185.3 721,164.3" fill="none" stroke="#c4cacc" stroke-width="1" opacity=".6"/>
<path d="M710.5,185.3 731.5,177.4 749.9,166.9 768.3,174.8 789.3,169.5 815.6,172.1 841.8,161.6 862.8,166.9 878,164.3" fill="none" stroke="#c4cacc" stroke-width="1" opacity=".6"/>
<path d="M555.6,261.4 547.8,243 526.8,224.6 511,203.6 495.3,185.3 500.5,164.3 516.3,148.5 526.8,138" fill="none" stroke="#c4cacc" stroke-width="1" opacity=".6"/>
<path d="M721,164.3 705.3,153.8 684.3,159 668.5,148.5 658,138" fill="none" stroke="#c4cacc" stroke-width="1" opacity=".6"/>
<path d="M526.8,337.5 534.6,353.3 526.8,369 537.3,384.8 534.6,400.5" fill="none" stroke="#c4cacc" stroke-width="1" opacity=".6"/>
<path d="M537.3,327 558.3,345.4 571.4,361.2 589.8,369 605.5,371.7" fill="none" stroke="#c4cacc" stroke-width="1" opacity=".6"/>
</g>
<path d="M335.6,346 338.5,339.2 346.2,335.4 355.8,336.3 359.6,341.2 353.8,340.2 346.2,340.2 340.4,344Z" fill="#0a84ff"/>
<path d="M352,322 367.3,308.5 369.2,311.3 355.8,322Z" fill="#0a84ff"/>
<path d="M430.8,275.8 438.5,277.7 452,287.3 450,290.2 440.4,285.4 432.7,279.6Z" fill="#0a84ff"/>
<path d="M413.5,298.8 423,304.6 421,306.5 414.4,301.7Z" fill="#0a84ff"/>
<path d="M480.8,381.5 490.4,368 492.3,370 485.6,389.2 481.7,388.3Z" fill="#0a84ff"/>
<path d="M413.5,364.2 421,354.6 423,355.6 416.3,366Z" fill="#0a84ff"/>
<path d="M702.7,313.9 728.9,298.1 732.9,302.1 710.5,316.5Z" fill="#0a84ff"/>
<path d="M163,180 180,190 195,205 210,210 222,222 235,212 255,208 275,215 290,230 300,245 305,262 308,272" fill="none" stroke="#1a80e8" stroke-width="1.1" opacity=".85"/>
<path d="M222,222 240,232 262,234 278,250 288,275 290,290" fill="none" stroke="#1a80e8" stroke-width="1.1" opacity=".85"/>
<path d="M75,278 100,272 130,286 160,278 185,262 200,258 215,268 230,290 250,320 262,350 265,385 258,408" fill="none" stroke="#1a80e8" stroke-width="1.1" opacity=".85"/>
<path d="M281,411 278,440 280,460 272,475" fill="none" stroke="#1a80e8" stroke-width="1.1" opacity=".85"/>
<path d="M286,372 300,365 318,372 330,355" fill="none" stroke="#1a80e8" stroke-width="1.1" opacity=".85"/>
<path d="M286,372 284,400 281,411" fill="none" stroke="#1a80e8" stroke-width="1.1" opacity=".85"/>
<path d="M370,138 385,150 395,175 398,200 388,240 382,270 395,280" fill="none" stroke="#1a80e8" stroke-width="1.1" opacity=".85"/>
<path d="M395,280 420,292" fill="none" stroke="#1a80e8" stroke-width="1.1" opacity=".85"/>
<path d="M448,252 480,240 510,222 528,214 550,228 580,238 610,248 640,246 670,248 700,262 730,264 758,258 760,280 762,320 758,360 772,380" fill="none" stroke="#1a80e8" stroke-width="1.1" opacity=".85"/>
<path d="M590,138 598,160 640,150" fill="none" stroke="#1a80e8" stroke-width="1.1" opacity=".85"/>
<path d="M735,150 720,170 700,175" fill="none" stroke="#1a80e8" stroke-width="1.1" opacity=".85"/>
<path d="M381,407 395,402 412,405 440,404 460,408 485,410 500,407 520,412 548,411" fill="none" stroke="#1a80e8" stroke-width="1.1" opacity=".85"/>
<path d="M178,574 L420,537 L600,510 L707,495" fill="none" stroke="#e0101c" stroke-width="1.1"/>
<g fill="#f00" stroke="#100" stroke-width="1">
<circle cx="297.2" cy="262.6" r="1.9"/>
<circle cx="576.2" cy="198.9" r="1.9"/>
<circle cx="478.1" cy="437.3" r="1.9"/>
<circle cx="70.5" cy="552.5" r="1.9"/>
<circle cx="53" cy="492.6" r="1.9"/>
<circle cx="80.6" cy="213.7" r="1.9"/>
<circle cx="126.6" cy="321.5" r="1.9"/>
<circle cx="513.3" cy="462.5" r="1.9"/>
<circle cx="853.7" cy="177.9" r="1.9"/>
<circle cx="753.3" cy="375.5" r="1.9"/>
<circle cx="144" cy="235.8" r="1.9"/>
<circle cx="488.2" cy="191" r="1.9"/>
<circle cx="407.6" cy="383.7" r="1.9"/>
<circle cx="698.6" cy="708.3" r="1.9"/>
<circle cx="643.2" cy="374.1" r="1.9"/>
<circle cx="857.1" cy="236" r="1.9"/>
<circle cx="150.6" cy="537.5" r="1.9"/>
<circle cx="54.4" cy="683.3" r="1.9"/>
<circle cx="673.2" cy="605.9" r="1.9"/>
<circle cx="515.7" cy="510.9" r="1.9"/>
<circle cx="425.4" cy="680" r="1.9"/>
<circle cx="171.3" cy="328.6" r="1.9"/>
<circle cx="523.5" cy="353.6" r="1.9"/>
<circle cx="355.7" cy="464.4" r="1.9"/>
<circle cx="199.1" cy="272" r="1.9"/>
<circle cx="311.1" cy="182.7" r="1.9"/>
<circle cx="107.5" cy="435.6" r="1.9"/>
<circle cx="544.8" cy="260.8" r="1.9"/>
<circle cx="236.2" cy="422.4" r="1.9"/>
<circle cx="331.6" cy="239.9" r="1.9"/>
<circle cx="313.3" cy="355.2" r="1.9"/>
<circle cx="728" cy="271.2" r="1.9"/>
<circle cx="471.6" cy="259.2" r="1.9"/>
<circle cx="484.3" cy="162" r="1.9"/>
<circle cx="302.2" cy="321.3" r="1.9"/>
<circle cx="836.9" cy="503.6" r="1.9"/>
<circle cx="835.6" cy="436.4" r="1.9"/>
<circle cx="209.1" cy="324.4" r="1.9"/>
<circle cx="188.8" cy="306.2" r="1.9"/>
<circle cx="639.3" cy="278.2" r="1.9"/>
<circle cx="129.4" cy="262.9" r="1.9"/>
<circle cx="235.8" cy="378.2" r="1.9"/>
<circle cx="396.4" cy="288.9" r="1.9"/>
<circle cx="639.6" cy="592.4" r="1.9"/>
<circle cx="111.5" cy="595.5" r="1.9"/>
<circle cx="824.7" cy="351" r="1.9"/>
<circle cx="584.2" cy="256.2" r="1.9"/>
<circle cx="460.8" cy="415.7" r="1.9"/>
<circle cx="188" cy="399" r="1.9"/>
<circle cx="637" cy="155.8" r="1.9"/>
<circle cx="553.2" cy="556.5" r="1.9"/>
<circle cx="110.4" cy="355.9" r="1.9"/>
<circle cx="251.7" cy="245.3" r="1.9"/>
<circle cx="719.6" cy="350.2" r="1.9"/>
<circle cx="408.1" cy="415.7" r="1.9"/>
<circle cx="470.5" cy="333.8" r="1.9"/>
<circle cx="287.1" cy="388" r="1.9"/>
<circle cx="447.6" cy="284.6" r="1.9"/>
<circle cx="317" cy="154.8" r="1.9"/>
<circle cx="234.6" cy="152.5" r="1.9"/>
<circle cx="366.2" cy="422.6" r="1.9"/>
<circle cx="67.4" cy="245.5" r="1.9"/>
<circle cx="239" cy="272.7" r="1.9"/>
<circle cx="261.5" cy="336.9" r="1.9"/>
<circle cx="850.6" cy="584.8" r="1.9"/>
<circle cx="285" cy="429.9" r="1.9"/>
<circle cx="425.9" cy="548.7" r="1.9"/>
<circle cx="134.5" cy="433.3" r="1.9"/>
<circle cx="438.4" cy="142.7" r="1.9"/>
<circle cx="675.2" cy="641.6" r="1.9"/>
<circle cx="146.8" cy="346.5" r="1.9"/>
<circle cx="597.4" cy="376.5" r="1.9"/>
<circle cx="418.8" cy="236.3" r="1.9"/>
<circle cx="783.3" cy="302" r="1.9"/>
<circle cx="328.7" cy="488" r="1.9"/>
<circle cx="255.7" cy="179.2" r="1.9"/>
<circle cx="811.5" cy="243.5" r="1.9"/>
<circle cx="163.7" cy="271.4" r="1.9"/>
<circle cx="445" cy="318.9" r="1.9"/>
<circle cx="185.1" cy="213.8" r="1.9"/>
<circle cx="312.7" cy="214.1" r="1.9"/>
<circle cx="225" cy="350" r="1.9"/>
<circle cx="765.6" cy="157.7" r="1.9"/>
<circle cx="521.9" cy="140.1" r="1.9"/>
<circle cx="116.6" cy="197.2" r="1.9"/>
<circle cx="352" cy="321.8" r="1.9"/>
<circle cx="283.2" cy="157.7" r="1.9"/>
<circle cx="379.3" cy="349.1" r="1.9"/>
<circle cx="603.2" cy="301" r="1.9"/>
<circle cx="211.5" cy="479" r="1.9"/>
<circle cx="145.9" cy="459.9" r="1.9"/>
<circle cx="339.9" cy="409.7" r="1.9"/>
<circle cx="843.5" cy="308.6" r="1.9"/>
<circle cx="837.9" cy="641.6" r="1.9"/>
<circle cx="688.3" cy="204.2" r="1.9"/>
<circle cx="232" cy="192.6" r="1.9"/>
<circle cx="514.3" cy="405.3" r="1.9"/>
<circle cx="122.7" cy="294.1" r="1.9"/>
<circle cx="759.8" cy="505.1" r="1.9"/>
<circle cx="331.3" cy="300.3" r="1.9"/>
<circle cx="189.3" cy="243" r="1.9"/>
<circle cx="432.8" cy="183.4" r="1.9"/>
<circle cx="646.7" cy="772.2" r="1.9"/>
<circle cx="76.9" cy="425.3" r="1.9"/>
<circle cx="558.2" cy="460.5" r="1.9"/>
<circle cx="546.5" cy="491.4" r="1.9"/>
<circle cx="578.1" cy="158.1" r="1.9"/>
<circle cx="523.5" cy="306" r="1.9"/>
<circle cx="553.2" cy="526.1" r="1.9"/>
<circle cx="213.7" cy="225.6" r="1.9"/>
<circle cx="493.4" cy="494.5" r="1.9"/>
<circle cx="756.5" cy="213.9" r="1.9"/>
<circle cx="617.7" cy="545.1" r="1.9"/>
<circle cx="615.7" cy="779.8" r="1.9"/>
<circle cx="196.8" cy="354" r="1.9"/>
<circle cx="585.8" cy="743.2" r="1.9"/>
<circle cx="300.8" cy="293.9" r="1.9"/>
<circle cx="188.4" cy="658.7" r="1.9"/>
<circle cx="352.3" cy="167.6" r="1.9"/>
<circle cx="558.1" cy="343.3" r="1.9"/>
<circle cx="684.8" cy="456" r="1.9"/>
<circle cx="732.2" cy="428.4" r="1.9"/>
<circle cx="494.5" cy="355" r="1.9"/>
<circle cx="450.7" cy="360.9" r="1.9"/>
<circle cx="590" cy="512.3" r="1.9"/>
<circle cx="175.6" cy="170.1" r="1.9"/>
<circle cx="372.8" cy="223" r="1.9"/>
<circle cx="643.5" cy="208.5" r="1.9"/>
<circle cx="417.9" cy="308" r="1.9"/>
<circle cx="679.7" cy="329.3" r="1.9"/>
<circle cx="427.5" cy="619.1" r="1.9"/>
<circle cx="797.2" cy="192.2" r="1.9"/>
<circle cx="210.1" cy="171.4" r="1.9"/>
<circle cx="110.9" cy="403.3" r="1.9"/>
<circle cx="240.9" cy="303.9" r="1.9"/>
<circle cx="508.4" cy="252.3" r="1.9"/>
<circle cx="334.1" cy="272.9" r="1.9"/>
<circle cx="46.7" cy="218.4" r="1.9"/>
<circle cx="36.1" cy="627.3" r="1.9"/>
<circle cx="367" cy="251.3" r="1.9"/>
<circle cx="683.7" cy="415.2" r="1.9"/>
<circle cx="38.8" cy="253.3" r="1.9"/>
<circle cx="271.4" cy="470.5" r="1.9"/>
<circle cx="156.3" cy="194.3" r="1.9"/>
<circle cx="651.2" cy="744.3" r="1.9"/>
<circle cx="517.1" cy="211.5" r="1.9"/>
<circle cx="598" cy="567" r="1.9"/>
<circle cx="458.2" cy="229.8" r="1.9"/>
<circle cx="154.4" cy="375.7" r="1.9"/>
<circle cx="739.4" cy="616.6" r="1.9"/>
<circle cx="364.9" cy="193.2" r="1.9"/>
<circle cx="557.4" cy="287.7" r="1.9"/>
<circle cx="159.2" cy="301" r="1.9"/>
<circle cx="260.8" cy="213.1" r="1.9"/>
<circle cx="372.1" cy="303.7" r="1.9"/>
<circle cx="97.5" cy="172.5" r="1.9"/>
<circle cx="682.1" cy="251.2" r="1.9"/>
<circle cx="597" cy="347" r="1.9"/>
<circle cx="523.6" cy="175.5" r="1.9"/>
<circle cx="165.8" cy="433.5" r="1.9"/>
<circle cx="89.3" cy="285.3" r="1.9"/>
<circle cx="494.6" cy="287.8" r="1.9"/>
<circle cx="262" cy="409.5" r="1.9"/>
<circle cx="21.8" cy="746.7" r="1.9"/>
<circle cx="407.2" cy="211.5" r="1.9"/>
<circle cx="272.5" cy="311.6" r="1.9"/>
<circle cx="798.9" cy="403.7" r="1.9"/>
<circle cx="96.4" cy="253.6" r="1.9"/>
<circle cx="322" cy="444.6" r="1.9"/>
<circle cx="568.2" cy="368.3" r="1.9"/>
<circle cx="866.7" cy="388.6" r="1.9"/>
<circle cx="108.1" cy="226.7" r="1.9"/>
<circle cx="97.5" cy="312.7" r="1.9"/>
<circle cx="280.2" cy="192" r="1.9"/>
<circle cx="395.5" cy="254.2" r="1.9"/>
<circle cx="550.9" cy="315.9" r="1.9"/>
<circle cx="642.6" cy="417.8" r="1.9"/>
<circle cx="548.8" cy="225.3" r="1.9"/>
<circle cx="390.7" cy="449.4" r="1.9"/>
<circle cx="342.2" cy="358.7" r="1.9"/>
<circle cx="866.1" cy="699.4" r="1.9"/>
<circle cx="488" cy="395.2" r="1.9"/>
<circle cx="394.6" cy="142.9" r="1.9"/>
<circle cx="542.2" cy="378.9" r="1.9"/>
<circle cx="577.9" cy="226.6" r="1.9"/>
<circle cx="392.3" cy="325.4" r="1.9"/>
<circle cx="279.1" cy="357.5" r="1.9"/>
<circle cx="341" cy="140.3" r="1.9"/>
<circle cx="525.8" cy="438.4" r="1.9"/>
<circle cx="673.8" cy="575.6" r="1.9"/>
<circle cx="310.8" cy="401.1" r="1.9"/>
<circle cx="585.8" cy="541.1" r="1.9"/>
<circle cx="203.3" cy="144" r="1.9"/>
<circle cx="548.6" cy="158.6" r="1.9"/>
<circle cx="816" cy="152.8" r="1.9"/>
<circle cx="780.5" cy="453.8" r="1.9"/>
<circle cx="507.4" cy="328.4" r="1.9"/>
<circle cx="421.6" cy="340.4" r="1.9"/>
<circle cx="438.7" cy="257.4" r="1.9"/>
<circle cx="611.3" cy="601.4" r="1.9"/>
<circle cx="657.9" cy="441.3" r="1.9"/>
<circle cx="718.6" cy="141.9" r="1.9"/>
<circle cx="547.7" cy="189.2" r="1.9"/>
<circle cx="459.1" cy="201.2" r="1.9"/>
<circle cx="664.5" cy="792.9" r="1.9"/>
<circle cx="285.9" cy="227.3" r="1.9"/>
<circle cx="88.7" cy="385.5" r="1.9"/>
<circle cx="210.9" cy="546.4" r="1.9"/>
<circle cx="641" cy="562.6" r="1.9"/>
<circle cx="577.5" cy="481.4" r="1.9"/>
<circle cx="148.8" cy="404.8" r="1.9"/>
<circle cx="613.1" cy="749.6" r="1.9"/>
<circle cx="298.6" cy="464.6" r="1.9"/>
<circle cx="356.7" cy="387.5" r="1.9"/>
<circle cx="442.1" cy="520.8" r="1.9"/>
<circle cx="63.1" cy="277.5" r="1.9"/>
<circle cx="437.7" cy="430" r="1.9"/>
<circle cx="402.1" cy="177.5" r="1.9"/>
<circle cx="481.8" cy="465.8" r="1.9"/>
<circle cx="471.1" cy="303.8" r="1.9"/>
<circle cx="489.8" cy="226.8" r="1.9"/>
<circle cx="345.5" cy="212" r="1.9"/>
<circle cx="455.7" cy="388.7" r="1.9"/>
<circle cx="383.6" cy="398.1" r="1.9"/>
<circle cx="270" cy="273.5" r="1.9"/>
<circle cx="424.7" cy="575.8" r="1.9"/>
<circle cx="214.8" cy="295.7" r="1.9"/>
<circle cx="208.3" cy="419.2" r="1.9"/>
<circle cx="126.5" cy="380.2" r="1.9"/>
<circle cx="679.3" cy="161.7" r="1.9"/>
<circle cx="872.7" cy="536" r="1.9"/>
<circle cx="116.6" cy="464.2" r="1.9"/>
<circle cx="873.9" cy="343.1" r="1.9"/>
<circle cx="768.6" cy="259" r="1.9"/>
<circle cx="511.3" cy="377.7" r="1.9"/>
<circle cx="245.9" cy="650.3" r="1.9"/>
<circle cx="637.7" cy="327.9" r="1.9"/>
<circle cx="259.7" cy="440.5" r="1.9"/>
<circle cx="812.9" cy="549.4" r="1.9"/>
<circle cx="598.5" cy="177.2" r="1.9"/>
<circle cx="456.3" cy="163.5" r="1.9"/>
<circle cx="178" cy="576" r="1.9"/>
<circle cx="142.7" cy="586" r="1.9"/>
<circle cx="203" cy="549" r="1.9"/>
<circle cx="207" cy="514" r="1.9"/>
<circle cx="89" cy="485" r="1.9"/>
</g>
<g fill="#f00" stroke="#000" stroke-width=".9">
<path d="M217,213l3,3l-3,3l-3,-3z"/>
<path d="M376,313l3,3l-3,3l-3,-3z"/>
<path d="M599,158l3,3l-3,3l-3,-3z"/>
<path d="M666,245l3,3l-3,3l-3,-3z"/>
<path d="M691,245l3,3l-3,3l-3,-3z"/>
<path d="M760,271l3,3l-3,3l-3,-3z"/>
<path d="M614,351l3,3l-3,3l-3,-3z"/>
<path d="M664,360l3,3l-3,3l-3,-3z"/>
<path d="M548,458l3,3l-3,3l-3,-3z"/>
<path d="M553,558l3,3l-3,3l-3,-3z"/>
<path d="M757,447l3,3l-3,3l-3,-3z"/>
<path d="M820,565l3,3l-3,3l-3,-3z"/>
<path d="M193,801l3,3l-3,3l-3,-3z"/>
<path d="M470,806l3,3l-3,3l-3,-3z"/>
<path d="M180,809l3,3l-3,3l-3,-3z"/>
<path d="M122,820l3,3l-3,3l-3,-3z"/>
<path d="M63,836l3,3l-3,3l-3,-3z"/>
<path d="M40,835l3,3l-3,3l-3,-3z"/>
<path d="M91,839l3,3l-3,3l-3,-3z"/>
<path d="M41,861l3,3l-3,3l-3,-3z"/>
<path d="M121,856l3,3l-3,3l-3,-3z"/>
<path d="M140,850l3,3l-3,3l-3,-3z"/>
<path d="M72,881l3,3l-3,3l-3,-3z"/>
<path d="M118,884l3,3l-3,3l-3,-3z"/>
<path d="M193,899l3,3l-3,3l-3,-3z"/>
<path d="M224,823l3,3l-3,3l-3,-3z"/>
<path d="M271,805l3,3l-3,3l-3,-3z"/>
<path d="M232,803l3,3l-3,3l-3,-3z"/>
<path d="M343,822l3,3l-3,3l-3,-3z"/>
<path d="M375,799l3,3l-3,3l-3,-3z"/>
<path d="M330,826l3,3l-3,3l-3,-3z"/>
<path d="M283,833l3,3l-3,3l-3,-3z"/>
<path d="M252,837l3,3l-3,3l-3,-3z"/>
<path d="M364,821l3,3l-3,3l-3,-3z"/>
<path d="M311,864l3,3l-3,3l-3,-3z"/>
<path d="M350,871l3,3l-3,3l-3,-3z"/>
<path d="M293,897l3,3l-3,3l-3,-3z"/>
<path d="M101,940l3,3l-3,3l-3,-3z"/>
<path d="M176,941l3,3l-3,3l-3,-3z"/>
<path d="M457,783l3,3l-3,3l-3,-3z"/>
<path d="M491,824l3,3l-3,3l-3,-3z"/>
<path d="M489,854l3,3l-3,3l-3,-3z"/>
<path d="M467,859l3,3l-3,3l-3,-3z"/>
<path d="M493,905l3,3l-3,3l-3,-3z"/>
<path d="M467,948l3,3l-3,3l-3,-3z"/>
</g>
<path d="M58.7,169.5 70.5,173.4 82.3,169.5" fill="none" stroke="#ff20ff" stroke-width="1"/>
<path d="M112.5,172 118,165.5" fill="none" stroke="#ff20ff" stroke-width="1"/>
<path d="M68,189.7 97,194.5" fill="none" stroke="#ff20ff" stroke-width="1"/>
<path d="M74.5,196.3 107,201 141,214" fill="none" stroke="#ff20ff" stroke-width="1"/>
<path d="M85,206.3 104.6,216.8 133.5,226" fill="none" stroke="#ff20ff" stroke-width="1"/>
<path d="M25.9,191.8 27.2,198.4" fill="none" stroke="#ff20ff" stroke-width="1"/>
<path d="M44.3,269.3 46.9,264 54.8,261.4" fill="none" stroke="#ff20ff" stroke-width="1"/>
<path d="M71.8,323 87.6,327" fill="none" stroke="#ff20ff" stroke-width="1"/>
<path d="M70.5,352 83,354.6" fill="none" stroke="#ff20ff" stroke-width="1"/>
<path d="M20,247 22,252" fill="none" stroke="#ff20ff" stroke-width="1"/>
<path d="M43,443.8 49.5,462.2" fill="none" stroke="#ff20ff" stroke-width="1"/>
<path d="M221.5,528.4 229.5,528.4" fill="none" stroke="#ff20ff" stroke-width="1"/>
<path d="M259.5,480.6 260.9,488.4" fill="none" stroke="#ff20ff" stroke-width="1"/>
<path d="M113.8,611.8 123,614.5" fill="none" stroke="#ff20ff" stroke-width="1"/>
<path d="M354,481.9 358,487.1" fill="none" stroke="#ff20ff" stroke-width="1"/>
<path d="M306.8,496.3 309.4,500.3" fill="none" stroke="#ff20ff" stroke-width="1"/>
<path d="M545.1,418.9 553,422.8" fill="none" stroke="#ff20ff" stroke-width="1"/>
<path d="M605.5,411 606.8,417.6" fill="none" stroke="#ff20ff" stroke-width="1"/>
<path d="M626.5,420.2 620,436" fill="none" stroke="#ff20ff" stroke-width="1"/>
<path d="M626.5,420.2 633,421.5" fill="none" stroke="#ff20ff" stroke-width="1"/>
<path d="M568.8,447.8 559.6,459.6" fill="none" stroke="#ff20ff" stroke-width="1"/>
<path d="M665.9,474 671.2,470.9" fill="none" stroke="#ff20ff" stroke-width="1"/>
<path d="M655.4,528.6 649.6,554.1" fill="none" stroke="#ff20ff" stroke-width="1"/>
<path d="M700,567.2 687.4,579" fill="none" stroke="#ff20ff" stroke-width="1"/>
<path d="M516.8,534.4 508.9,550.1" fill="none" stroke="#ff20ff" stroke-width="1"/>
<path d="M601.6,592.2 594.5,621" fill="none" stroke="#ff20ff" stroke-width="1"/>
<path d="M674.3,646 665.4,662.5" fill="none" stroke="#ff20ff" stroke-width="1"/>
<path d="M718.4,625 723.7,630.2" fill="none" stroke="#ff20ff" stroke-width="1"/>
<path d="M744.7,626.3 743.4,632.8" fill="none" stroke="#ff20ff" stroke-width="1"/>
<path d="M801.1,543.6 799.3,548.8" fill="none" stroke="#ff20ff" stroke-width="1"/>
<path d="M810.3,636.8 826,635.5 836.6,642 836,646" fill="none" stroke="#ff20ff" stroke-width="1"/>
<path d="M86.3,689.3 112.5,691.4" fill="none" stroke="#ff20ff" stroke-width="1"/>
<path d="M123,684 126.2,709" fill="none" stroke="#ff20ff" stroke-width="1"/>
<path d="M18,753.6 30.6,770.6" fill="none" stroke="#ff20ff" stroke-width="1"/>
<path d="M138.2,796.4 137.7,809.5" fill="none" stroke="#ff20ff" stroke-width="1"/>
<path d="M275.3,796.9 269.5,805.3" fill="none" stroke="#ff20ff" stroke-width="1"/>
<path d="M413.6,770.6 410.5,803.5" fill="none" stroke="#ff20ff" stroke-width="1"/>
<path d="M557.7,749.6 552.5,758.8" fill="none" stroke="#ff20ff" stroke-width="1"/>
<path d="M482.1,841 520.2,841" fill="none" stroke="#ff20ff" stroke-width="1"/>
<path d="M510.5,886.2 528.1,885.1" fill="none" stroke="#ff20ff" stroke-width="1"/>
<path d="M467.7,941.8 496.6,937.3" fill="none" stroke="#ff20ff" stroke-width="1"/>
<path d="M727,921v5h97v-5" fill="none" stroke="#e01020" stroke-width="1.2"/>
<text x="49.5" y="149.8" font-size="12.2" font-weight="bold" fill="#ff1cff">EU-114</text>
<text x="90.2" y="157.7" font-size="12.2" font-weight="bold" fill="#ff1cff">EU-081</text>
<text x="18" y="187.9" font-size="12.2" font-weight="bold" fill="#ff1cff">EU-107</text>
<text x="83.6" y="187.9" font-size="12.2" font-weight="bold" fill="#ff1cff">EU-013</text>
<text x="83.6" y="199.7" font-size="12.2" font-weight="bold" fill="#ff1cff">EU-099</text>
<text x="115.1" y="213.6" font-size="12.2" font-weight="bold" fill="#ff1cff">EU-039</text>
<text x="102" y="224.6" font-size="12.2" font-weight="bold" fill="#ff1cff">EU-156</text>
<text x="31.1" y="219.9" font-size="12.2" font-weight="bold" fill="#ff1cff">EU-074</text>
<text x="52.1" y="229.9" font-size="12.2" font-weight="bold" fill="#ff1cff">EU-157</text>
<text x="15.9" y="292.9" font-size="12.2" font-weight="bold" fill="#ff1cff">EU-064</text>
<text x="29.8" y="338.8" font-size="12.2" font-weight="bold" fill="#ff1cff">EU-032</text>
<text x="35.9" y="377.4" font-size="12.2" font-weight="bold" fill="#ff1cff">EU-159</text>
<text x="60" y="161.6" font-size="13" font-weight="bold" fill="#000">GU</text>
<text x="70.5" y="191.8" font-size="13" font-weight="bold" fill="#000">GJ</text>
<text x="330.4" y="190.5" font-size="13" font-weight="bold" fill="#000">LX</text>
<text x="180.8" y="269.3" font-size="13" font-weight="bold" fill="#000">F</text>
<text x="313.4" y="365.9" font-size="13" font-weight="bold" fill="#000">4U1T</text>
<text x="440.7" y="302.1" font-size="13" font-weight="bold" fill="#000">HB0</text>
<text x="372.4" y="309.2" font-size="13" fill="#111">HB9</text>
<text x="369.8" y="371.7" font-size="13" fill="#111">IX1</text>
<text x="379" y="397.9" font-size="13" fill="#111">I1</text>
<text x="217.5" y="222.5" font-size="6" fill="#2a2a2a" opacity=".85">Paris-75</text>
<text x="376.4" y="323.1" font-size="6" fill="#2a2a2a" opacity=".85">Bern</text>
<text x="578.5" y="194.4" font-size="13" font-weight="bold" fill="#000">OK</text>
<text x="724.2" y="231.2" font-size="13" font-weight="bold" fill="#000">OM</text>
<text x="751.2" y="311.3" font-size="13" font-weight="bold" fill="#000">HA</text>
<text x="597.1" y="363.3" font-size="13" font-weight="bold" fill="#000">S5</text>
<text x="662" y="383.5" font-size="13" font-weight="bold" fill="#000">9A</text>
<text x="605" y="275" font-size="13" fill="#111">OE</text>
<text x="493.2" y="347.2" font-size="13" fill="#111">IN3</text>
<text x="553" y="351.2" font-size="13" fill="#111">IV3</text>
<text x="518.4" y="378.2" font-size="13" fill="#111">I3</text>
<text x="449.3" y="388.7" font-size="13" fill="#111">I2</text>
<text x="599.7" y="158.5" font-size="6" fill="#2a2a2a" opacity=".85">Prague</text>
<text x="610" y="237.8" font-size="6" fill="#2a2a2a" opacity=".85">OE3-Niederoesterreich</text>
<text x="641" y="245.1" font-size="6" fill="#2a2a2a" opacity=".85">Vienna</text>
<text x="664.6" y="244.3" font-size="6" fill="#2a2a2a" opacity=".85">OE1</text>
<text x="691.6" y="255.1" font-size="6" fill="#2a2a2a" opacity=".85">Bratislava</text>
<text x="547.2" y="260.6" font-size="6" fill="#2a2a2a" opacity=".85">OE5-Oberoesterreich</text>
<text x="512.3" y="262.2" font-size="6" fill="#2a2a2a" opacity=".85">Munchen</text>
<text x="667.2" y="281.6" font-size="6" fill="#2a2a2a" opacity=".85">OE4</text>
<text x="760.4" y="281.1" font-size="6" fill="#2a2a2a" opacity=".85">Budapest</text>
<text x="544.4" y="290.8" font-size="6" fill="#2a2a2a" opacity=".85">OE2-Salzburg</text>
<text x="597.1" y="301.6" font-size="6" fill="#2a2a2a" opacity=".85">OE6-Steiermark</text>
<text x="478.2" y="306.5" font-size="6" fill="#2a2a2a" opacity=".85">OE7-Tirol</text>
<text x="537.8" y="314.4" font-size="6" fill="#2a2a2a" opacity=".85">OE7</text>
<text x="568" y="319.7" font-size="6" fill="#2a2a2a" opacity=".85">OE8-Kaernten</text>
<text x="614.7" y="361.2" font-size="6" fill="#2a2a2a" opacity=".85">Ljubljana</text>
<text x="663.8" y="370.3" font-size="6" fill="#2a2a2a" opacity=".85">Zagreb</text>
<text x="770.9" y="151.1" font-size="6" fill="#2a2a2a" opacity=".85">Krakow (KR)</text>
<text x="753.9" y="160.3" font-size="6" fill="#2a2a2a" opacity=".85">SP9-Malopolskie</text>
<text x="839.2" y="209.4" font-size="6" fill="#2a2a2a" opacity=".85">UR4D - Tran</text>
<text x="742" y="143.8" font-size="6" fill="#2a2a2a" opacity=".85">Katowice (KA)</text>
<text x="835.2" y="142.7" font-size="6" fill="#2a2a2a" opacity=".85">Rzeszow (RZ)</text>
<text x="555.1" y="381.6" font-size="12.2" font-weight="bold" fill="#ff1cff">EU-130</text>
<text x="537.3" y="398.4" font-size="12.2" font-weight="bold" fill="#ff1cff">EU-131</text>
<text x="555.6" y="414.2" font-size="12.2" font-weight="bold" fill="#ff1cff">EU-110</text>
<text x="620" y="409.7" font-size="12.2" font-weight="bold" fill="#ff1cff">EU-136</text>
<text x="-0.4" y="442" font-size="12.2" font-weight="bold" fill="#ff1cff">EU-134</text>
<text x="220.7" y="514.7" font-size="12.2" font-weight="bold" fill="#ff1cff">EU-148</text>
<text x="264.8" y="503.4" font-size="12.2" font-weight="bold" fill="#ff1cff">EU-095</text>
<text x="314.7" y="513.9" font-size="12.2" font-weight="bold" fill="#ff1cff">EU-070</text>
<text x="359.3" y="490.5" font-size="12.2" font-weight="bold" fill="#ff1cff">EU-058</text>
<text x="406.6" y="458.3" font-size="12.2" font-weight="bold" fill="#ff1cff">EU-083</text>
<text x="410.5" y="504.2" font-size="12.2" font-weight="bold" fill="#ff1cff">EU-164/2</text>
<text x="438.1" y="492.9" font-size="12.2" font-weight="bold" fill="#ff1cff">EU-028</text>
<text x="409.2" y="539.6" font-size="12.2" font-weight="bold" fill="#ff1cff">EU-014</text>
<text x="374.5" y="567.2" font-size="12.2" font-weight="bold" fill="#ff1cff">EU-104</text>
<text x="386.3" y="590" font-size="12.2" font-weight="bold" fill="#ff1cff">EU-164/1</text>
<text x="359.3" y="601.9" font-size="12.2" font-weight="bold" fill="#ff1cff">EU-165/2</text>
<text x="403.4" y="639.4" font-size="12.2" font-weight="bold" fill="#ff1cff">EU-024</text>
<text x="363.5" y="670.1" font-size="12.2" font-weight="bold" fill="#ff1cff">EU-165/1</text>
<text x="180.2" y="577.2" font-size="12.2" font-weight="bold" fill="#ff1cff">EU-078</text>
<text x="107.3" y="647.3" font-size="12.2" font-weight="bold" fill="#ff1cff">EU-069</text>
<text x="75.2" y="657.3" font-size="12.2" font-weight="bold" fill="#ff1cff">EU-151</text>
<text x="232.8" y="684.6" font-size="12.2" font-weight="bold" fill="#ff1cff">EU-004</text>
<text x="438.1" y="580.3" font-size="12.2" font-weight="bold" fill="#ff1cff">EU-100</text>
<text x="437.5" y="594" font-size="12.2" font-weight="bold" fill="#ff1cff">EU-041</text>
<text x="445.4" y="605.3" font-size="12.2" font-weight="bold" fill="#ff1cff">EU-165/3</text>
<text x="155" y="505.5" font-size="13" font-weight="bold" fill="#000">C3</text>
<text x="188.6" y="679.3" font-size="13" font-weight="bold" fill="#000">EA6</text>
<text x="368.5" y="479.3" font-size="13" font-weight="bold" fill="#000">3A</text>
<text x="419.7" y="562.7" font-size="13" font-weight="bold" fill="#000">TK</text>
<text x="419.7" y="668.3" font-size="13" font-weight="bold" fill="#000">IS</text>
<text x="52.9" y="536.5" font-size="13" fill="#111">EA2</text>
<text x="144" y="561.4" font-size="13" fill="#111">EA3</text>
<text x="152.7" y="593.5" font-size="13" fill="#111">EA3AXM</text>
<text x="37.7" y="669.6" font-size="13" fill="#111">EA5</text>
<text x="336.2" y="470.6" font-size="6" fill="#2a2a2a" opacity=".85">Monte Carlo</text>
<text x="594.5" y="453.5" font-size="12.2" font-weight="bold" fill="#ff1cff">EU-170</text>
<text x="637.6" y="492.4" font-size="12.2" font-weight="bold" fill="#ff1cff">EU-016</text>
<text x="666.4" y="524.4" font-size="12.2" font-weight="bold" fill="#ff1cff">EU-090</text>
<text x="665.4" y="546.2" font-size="12.2" font-weight="bold" fill="#ff1cff">EU-050</text>
<text x="736.3" y="534.4" font-size="12.2" font-weight="bold" fill="#ff1cff">EU-163</text>
<text x="736.3" y="594" font-size="12.2" font-weight="bold" fill="#ff1cff">EU-091</text>
<text x="768.8" y="609.7" font-size="12.2" font-weight="bold" fill="#ff1cff">EU-169</text>
<text x="713.2" y="640.2" font-size="12.2" font-weight="bold" fill="#ff1cff">EU-073</text>
<text x="706.6" y="656.5" font-size="12.2" font-weight="bold" fill="#ff1cff">EU-144/1</text>
<text x="643.6" y="677.5" font-size="12.2" font-weight="bold" fill="#ff1cff">EU-144</text>
<text x="609.5" y="632.3" font-size="12.2" font-weight="bold" fill="#ff1cff">EU-031</text>
<text x="534.6" y="595.6" font-size="12.2" font-weight="bold" fill="#ff1cff">EU-045</text>
<text x="828.2" y="682.7" font-size="12.2" font-weight="bold" fill="#ff1cff">EU-052</text>
<text x="543.8" y="447.8" font-size="13" font-weight="bold" fill="#000">T7</text>
<text x="545.7" y="492.4" font-size="13" font-weight="bold" fill="#000">I</text>
<text x="548.6" y="536.5" font-size="13" font-weight="bold" fill="#000">1A</text>
<text x="543" y="585.6" font-size="13" font-weight="bold" fill="#000">HV</text>
<text x="735.5" y="453.8" font-size="13" font-weight="bold" fill="#000">E7</text>
<text x="816.1" y="604" font-size="13" font-weight="bold" fill="#000">ZA</text>
<text x="490" y="435.2" font-size="13" fill="#111">I4</text>
<text x="493.9" y="484.5" font-size="13" fill="#111">I5</text>
<text x="578.7" y="505" font-size="13" fill="#111">I6</text>
<text x="559.6" y="543.1" font-size="13" fill="#111">I0</text>
<text x="702.1" y="607.9" font-size="13" fill="#111">I7</text>
<text x="666.7" y="630.2" font-size="13" fill="#111">I8</text>
<text x="693.5" y="512.6" font-size="13" fill="#111">9A9L</text>
<text x="549.1" y="468.2" font-size="6" fill="#2a2a2a" opacity=".85">San Marino</text>
<text x="553.5" y="558" font-size="6" fill="#2a2a2a" opacity=".85">Rome</text>
<text x="757.8" y="456.9" font-size="6" fill="#2a2a2a" opacity=".85">Saraj</text>
<text x="820.8" y="575.1" font-size="6" fill="#2a2a2a" opacity=".85">Tirana</text>
<text x="859.7" y="653.1" font-size="6" fill="#2a2a2a" opacity=".85">SV-6</text>
<text x="55.3" y="733.4" font-size="12.2" font-weight="bold" fill="#ff1cff">EU-093</text>
<text x="44.3" y="820.5" font-size="12.2" font-weight="bold" fill="#ff1cff">AF-094</text>
<text x="187.3" y="792.2" font-size="12.2" font-weight="bold" fill="#ff1cff">AF-097</text>
<text x="324.6" y="784.3" font-size="12.2" font-weight="bold" fill="#ff1cff">AF-104</text>
<text x="180.8" y="852" font-size="13" font-weight="bold" fill="#000">7X</text>
<text x="78.4" y="869.1" font-size="13" fill="#111">7X4</text>
<text x="182.1" y="887.5" font-size="13" fill="#111">7X2</text>
<text x="304.2" y="857.3" font-size="13" fill="#111">7X5</text>
<text x="193.9" y="811.3" font-size="6" fill="#2a2a2a" opacity=".85">Algiers</text>
<text x="234.6" y="811.9" font-size="6" fill="#2a2a2a" opacity=".85">Tizi Ouzou</text>
<text x="274" y="812.6" font-size="6" fill="#2a2a2a" opacity=".85">Bejaia</text>
<text x="346.2" y="809.5" font-size="6" fill="#2a2a2a" opacity=".85">Skikda</text>
<text x="357.2" y="802.1" font-size="6" fill="#2a2a2a" opacity=".85">Annaba</text>
<text x="365.9" y="829.7" font-size="6" fill="#2a2a2a" opacity=".85">Guelma</text>
<text x="332.3" y="834.4" font-size="6" fill="#2a2a2a" opacity=".85">Constantine</text>
<text x="285.8" y="840.7" font-size="6" fill="#2a2a2a" opacity=".85">Setif</text>
<text x="254.3" y="844.1" font-size="6" fill="#2a2a2a" opacity=".85">Bordj Bou Arreridj</text>
<text x="226.7" y="827.6" font-size="6" fill="#2a2a2a" opacity=".85">Bouira</text>
<text x="182.1" y="829.7" font-size="6" fill="#2a2a2a" opacity=".85">Medea</text>
<text x="185.2" y="819.5" font-size="6" fill="#2a2a2a" opacity=".85">Blida</text>
<text x="125.6" y="829.2" font-size="6" fill="#2a2a2a" opacity=".85">Ech Cheliff</text>
<text x="76.3" y="835.5" font-size="6" fill="#2a2a2a" opacity=".85">Mostaganem</text>
<text x="46.9" y="843.6" font-size="6" fill="#2a2a2a" opacity=".85">Oran</text>
<text x="94.1" y="846.8" font-size="6" fill="#2a2a2a" opacity=".85">Relizane</text>
<text x="142.7" y="858.6" font-size="6" fill="#2a2a2a" opacity=".85">Tissemsilt</text>
<text x="44.3" y="867.3" font-size="6" fill="#2a2a2a" opacity=".85">Sidi bel Abbes</text>
<text x="122.5" y="867.3" font-size="6" fill="#2a2a2a" opacity=".85">Tiaret</text>
<text x="74.4" y="888.3" font-size="6" fill="#2a2a2a" opacity=".85">Saida</text>
<text x="120.4" y="891.4" font-size="6" fill="#2a2a2a" opacity=".85">Tlemcen</text>
<text x="195.2" y="907.2" font-size="6" fill="#2a2a2a" opacity=".85">Djelfa</text>
<text x="313.4" y="872.5" font-size="6" fill="#2a2a2a" opacity=".85">Batna</text>
<text x="351.9" y="879.6" font-size="6" fill="#2a2a2a" opacity=".85">Khenchela</text>
<text x="295.5" y="905.3" font-size="6" fill="#2a2a2a" opacity=".85">Biskra</text>
<text x="103.3" y="947.3" font-size="6" fill="#2a2a2a" opacity=".85">El Bayadh</text>
<text x="178.7" y="947.8" font-size="6" fill="#2a2a2a" opacity=".85">Laghouat</text>
<text x="564.3" y="710.3" font-size="12.2" font-weight="bold" fill="#ff1cff">EU-051</text>
<text x="624.4" y="713.4" font-size="12.2" font-weight="bold" fill="#ff1cff">EU-017</text>
<text x="556.2" y="735.7" font-size="12.2" font-weight="bold" fill="#ff1cff">EU-166/1</text>
<text x="522.3" y="744.4" font-size="12.2" font-weight="bold" fill="#ff1cff">EU-054</text>
<text x="657.2" y="764.6" font-size="12.2" font-weight="bold" fill="#ff1cff">EU-166/2</text>
<text x="605" y="775.1" font-size="12.2" font-weight="bold" fill="#ff1cff">EU-025</text>
<text x="588.5" y="803.5" font-size="12.2" font-weight="bold" fill="#ff1cff">EU-166/3</text>
<text x="456.7" y="779.8" font-size="12.2" font-weight="bold" fill="#ff1cff">AF-091</text>
<text x="522.3" y="819.2" font-size="12.2" font-weight="bold" fill="#ff1cff">AF-018</text>
<text x="484.2" y="852.5" font-size="12.2" font-weight="bold" fill="#ff1cff">AF-092</text>
<text x="551.2" y="866.5" font-size="12.2" font-weight="bold" fill="#ff1cff">AF-019</text>
<text x="617.3" y="864.4" font-size="12.2" font-weight="bold" fill="#ff1cff">EU-023</text>
<text x="514.2" y="912.4" font-size="12.2" font-weight="bold" fill="#ff1cff">AF-073</text>
<text x="498.4" y="946.5" font-size="12.2" font-weight="bold" fill="#ff1cff">AF-083</text>
<text x="633.1" y="843.4" font-size="13" font-weight="bold" fill="#000">9H</text>
<text x="448" y="912.4" font-size="13" font-weight="bold" fill="#000">3V</text>
<text x="633.9" y="787.2" font-size="13" fill="#111">IT9</text>
<text x="471.6" y="816.1" font-size="6" fill="#2a2a2a" opacity=".85">Tunis</text>
<text x="492.6" y="831.5" font-size="6" fill="#2a2a2a" opacity=".85">Nabul</text>
<text x="471.6" y="855.2" font-size="6" fill="#2a2a2a" opacity=".85">Sousse</text>
<text x="446.7" y="862.5" font-size="6" fill="#2a2a2a" opacity=".85">Kairouan</text>
<text x="482.1" y="907.7" font-size="6" fill="#2a2a2a" opacity=".85">Sfax</text>
<text x="453.8" y="949.2" font-size="6" fill="#2a2a2a" opacity=".85">Gabes</text>
<text x="444.1" y="785.9" font-size="6" fill="#2a2a2a" opacity=".85">Bizerte</text>
<text x="428" y="306.5" font-size="6" fill="#2a2a2a" opacity=".85">Vaduz</text>
<text x="452" y="306.5" font-size="6" fill="#2a2a2a" opacity=".85">OE9</text>
<text x="724" y="917" font-size="12" fill="#e01020">0</text><text x="804.5" y="917" font-size="12" fill="#e01020" textLength="36.5" lengthAdjust="spacingAndGlyphs">219 KM</text>
</svg>
<div style="left:877px;top:137px;width:17px;height:819px;background:#f0f0f0"></div>
<div style="left:879px;top:510px;width:13px;height:93px;background:#cdcdcd"></div>
<svg style="left:877px;top:138px" width="17" height="818" viewBox="0 0 17 818"><path d="M5 10.500l3.500-3.500 3.500 3.500M5 806.500l3.500 3.500 3.500-3.500" fill="none" stroke="#505050" stroke-width="1.5"/></svg>
<div style="left:18px;top:956px;width:859px;height:17px;background:#f0f0f0"></div>
<div style="left:384px;top:958px;width:127px;height:13px;background:#cdcdcd"></div>
<svg style="left:18px;top:956px" width="859" height="17" viewBox="0 0 859 17"><path d="M11 5l-3.500 3.500 3.500 3.500M848 5l3.500 3.500-3.500 3.500" fill="none" stroke="#505050" stroke-width="1.5"/></svg>
<div style="left:877px;top:956px;width:17px;height:17px;background:#f0f0f0"></div>
<div style="left:18px;top:973px;width:876px;height:25px;background:#a5c5ec"></div>
<div style="left:18px;top:975px;width:74px;height:22px;border:1px solid;border-color:#8a9bb0 #fff #fff #8a9bb0;background:#a5c5ec"></div>
<span class="t" style="left:20px;top:980px;font-size:11px;line-height:13px;height:13px;color:#000;font-weight:bold;transform:scaleX(0.9372);transform-origin:0 0;">22.13.16E</span>
<div style="left:95px;top:975px;width:67px;height:22px;border:1px solid;border-color:#8a9bb0 #fff #fff #8a9bb0;background:#a5c5ec"></div>
<span class="t" style="left:97px;top:980px;font-size:11px;line-height:13px;height:13px;color:#000;font-weight:bold;transform:scaleX(0.9457);transform-origin:0 0;">50.01.47N</span>
<div style="left:165px;top:975px;width:57px;height:22px;border:1px solid;border-color:#8a9bb0 #fff #fff #8a9bb0;background:#a5c5ec"></div>
<span class="t" style="left:167px;top:980px;font-size:11px;line-height:13px;height:13px;color:#000;font-weight:bold;transform:scaleX(0.9412);transform-origin:0 0;">KO10CA</span>
<div style="left:225px;top:975px;width:147px;height:22px;border:1px solid;border-color:#8a9bb0 #fff #fff #8a9bb0;background:#a5c5ec"></div>
<div style="left:375px;top:975px;width:137px;height:22px;border:1px solid;border-color:#8a9bb0 #fff #fff #8a9bb0;background:#a5c5ec"></div>
<span class="t" style="left:377px;top:980px;font-size:11px;line-height:13px;height:13px;color:#000;font-weight:bold;transform:scaleX(0.9985);transform-origin:0 0;">Azimut: 51.21.24N</span>
<div style="left:515px;top:975px;width:97px;height:22px;border:1px solid;border-color:#8a9bb0 #fff #fff #8a9bb0;background:#a5c5ec"></div>
<span class="t" style="left:517px;top:980px;font-size:11px;line-height:13px;height:13px;color:#000;font-weight:bold;transform:scaleX(0.9864);transform-origin:0 0;">Distancia: 1818</span>
<div style="left:615px;top:975px;width:262px;height:22px;border:1px solid;border-color:#8a9bb0 #fff #fff #8a9bb0;background:#a5c5ec"></div>
<svg style="left:880px;top:984px" width="14" height="14" viewBox="0 0 14 14"><path d="M13 2L2 13M13 6L6 13M13 10l-3 3" stroke="#7f8fa3" stroke-width="1.2"/><path d="M13 3L3 13M13 7L7 13M13 11l-2 2" stroke="#fff" stroke-width="1"/></svg>
<div class="fr" style="left:904px;top:82px;width:180px;height:519px;"></div>
<div style="left:905px;top:83px;width:178px;height:517px;border:1px solid rgba(255,255,255,.55);border-radius:6px 6px 0 0"></div>
<svg style="left:912.5px;top:91.5px" width="17.0" height="17.0" viewBox="-8.5 -8.5 17 17"><circle r="8" fill="#6e1215"/><circle r="7.1" fill="#b02f30"/><path d="M-1.9 -7.3h3.8v5.4h5.4v3.8h-5.4v5.4h-3.8v-5.4h-5.4v-3.8h5.4z" fill="#efe6e6"/><circle r="2.3" fill="#2a3f9c"/><circle r="1" fill="#6f86d8"/><path d="M-6.3 -3.2a7 7 0 0 1 12.6 0" fill="none" stroke="rgba(255,255,255,.3)" stroke-width="1.4"/><circle r="7.6" fill="none" stroke="rgba(60,0,0,.35)" stroke-width="1"/></svg>
<span class="t" style="left:933px;top:94.5px;font-size:12.3px;line-height:15px;height:15px;color:#9a9a9a;transform:scaleX(0.9210);transform-origin:0 0;">DXCC entrada dat...</span>
<div class="cb" style="left:1042px;top:92px;width:32px;height:17px;"></div><svg style="left:1042px;top:92px" width="32" height="17" viewBox="0 0 32 17"><path d="M12.5 5.8l7 5.4M19.5 5.8l-7 5.4" stroke="#3a4656" stroke-width="3.8" stroke-linecap="square"/><path d="M12.5 5.8l7 5.4M19.5 5.8l-7 5.4" stroke="#fff" stroke-width="2" stroke-linecap="square"/></svg>
<div style="left:911px;top:113px;width:165px;height:480px;background:#e6f0fa"></div>
<div style="left:911px;top:113px;width:166px;height:16px;background:#a5c5ec"></div>
<span class="t" style="left:915.5px;top:114px;font-size:11.5px;line-height:14px;height:14px;color:#000;font-weight:bold;transform:scaleX(0.9774);transform-origin:0 0;">9A=Croacia   (9A9L)</span>
<div style="left:911px;top:129px;width:165px;height:2px;background:linear-gradient(#8a9bb0,#fff)"></div>
<div style="left:911px;top:131px;width:165px;height:462px;background:#f0fbff;border-left:2px solid #7a8797;border-top:1px solid #7a8797"></div>
<div style="left:913px;top:131px;width:31px;height:45px;background:#f0f0f0;border-right:1px solid #a0a0a0;border-bottom:1px solid #a0a0a0"></div>
<div style="left:944px;top:131px;width:20px;height:45px;background:#f0f0f0;border-right:1px solid #a0a0a0;border-bottom:1px solid #a0a0a0"></div>
<span class="t" style="left:958.5px;top:134px;font-size:11.5px;line-height:12px;transform:rotate(90deg);transform-origin:0 0;color:#111">CW</span>
<div style="left:964px;top:131px;width:20px;height:45px;background:#f0f0f0;border-right:1px solid #a0a0a0;border-bottom:1px solid #a0a0a0"></div>
<span class="t" style="left:978.5px;top:134px;font-size:11.5px;line-height:12px;transform:rotate(90deg);transform-origin:0 0;color:#111">RTTY</span>
<div style="left:984px;top:131px;width:20px;height:45px;background:#f0f0f0;border-right:1px solid #a0a0a0;border-bottom:1px solid #a0a0a0"></div>
<span class="t" style="left:998.5px;top:134px;font-size:11.5px;line-height:12px;transform:rotate(90deg);transform-origin:0 0;color:#111">SSB</span>
<div style="left:1004px;top:131px;width:20px;height:45px;background:#f0f0f0;border-right:1px solid #a0a0a0;border-bottom:1px solid #a0a0a0"></div>
<span class="t" style="left:1018.5px;top:134px;font-size:11.5px;line-height:12px;transform:rotate(90deg);transform-origin:0 0;color:#111">SSTV</span>
<div style="left:1024px;top:131px;width:20px;height:45px;background:#f0f0f0;border-right:1px solid #a0a0a0;border-bottom:1px solid #a0a0a0"></div>
<span class="t" style="left:1038.5px;top:134px;font-size:11.5px;line-height:12px;transform:rotate(90deg);transform-origin:0 0;color:#111">PSK31</span>
<div style="left:1044px;top:131px;width:20px;height:45px;background:#f0f0f0;border-right:1px solid #a0a0a0;border-bottom:1px solid #a0a0a0"></div>
<span class="t" style="left:1058.5px;top:134px;font-size:11.5px;line-height:12px;transform:rotate(90deg);transform-origin:0 0;color:#111">FT8</span>
<div style="left:913px;top:176px;width:31px;height:20px;background:#0078d7;border-right:1px solid #a0a0a0;border-bottom:1px solid #a0a0a0"></div>
<span class="t" style="left:916px;top:180px;font-size:11px;line-height:13px;height:13px;color:#fff;">80m</span>
<div style="left:944px;top:176px;width:20px;height:20px;background:#80ffff;border-right:1px solid #a0a0a0;border-bottom:1px solid #a0a0a0;"></div>
<div style="left:944px;top:176px;width:19px;height:19px;border:1px solid #000;box-shadow:inset 0 0 0 0 #000"></div>
<span class="t" style="left:944px;top:180px;font-size:11px;line-height:13px;height:13px;color:#000;width:19px;text-align:center;">C</span>
<div style="left:964px;top:176px;width:20px;height:20px;background:#80ffff;border-right:1px solid #a0a0a0;border-bottom:1px solid #a0a0a0;"></div>
<div style="left:971.5px;top:186.5px;width:4px;height:1px;background:#000"></div>
<div style="left:984px;top:176px;width:20px;height:20px;background:#80ffff;border-right:1px solid #a0a0a0;border-bottom:1px solid #a0a0a0;"></div>
<div style="left:991.5px;top:186.5px;width:4px;height:1px;background:#000"></div>
<div style="left:1004px;top:176px;width:20px;height:20px;background:#80ffff;border-right:1px solid #a0a0a0;border-bottom:1px solid #a0a0a0;"></div>
<div style="left:1011.5px;top:186.5px;width:4px;height:1px;background:#000"></div>
<div style="left:1024px;top:176px;width:20px;height:20px;background:#80ffff;border-right:1px solid #a0a0a0;border-bottom:1px solid #a0a0a0;"></div>
<div style="left:1031.5px;top:186.5px;width:4px;height:1px;background:#000"></div>
<div style="left:1044px;top:176px;width:20px;height:20px;background:#80ffff;border-right:1px solid #a0a0a0;border-bottom:1px solid #a0a0a0;"></div>
<div style="left:1051.5px;top:186.5px;width:4px;height:1px;background:#000"></div>
<div style="left:913px;top:196px;width:31px;height:20px;background:#f0f0f0;border-right:1px solid #a0a0a0;border-bottom:1px solid #a0a0a0"></div>
<span class="t" style="left:916px;top:200px;font-size:11px;line-height:13px;height:13px;color:#000;">40m</span>
<div style="left:944px;top:196px;width:20px;height:20px;background:#80ffff;border-right:1px solid #a0a0a0;border-bottom:1px solid #a0a0a0;"></div>
<span class="t" style="left:944px;top:200px;font-size:11px;line-height:13px;height:13px;color:#000;width:19px;text-align:center;">C</span>
<div style="left:964px;top:196px;width:20px;height:20px;background:#80ffff;border-right:1px solid #a0a0a0;border-bottom:1px solid #a0a0a0;"></div>
<div style="left:971.5px;top:206.5px;width:4px;height:1px;background:#000"></div>
<div style="left:984px;top:196px;width:20px;height:20px;background:#80ffff;border-right:1px solid #a0a0a0;border-bottom:1px solid #a0a0a0;"></div>
<span class="t" style="left:984px;top:200px;font-size:11px;line-height:13px;height:13px;color:#000;width:19px;text-align:center;">C</span>
<div style="left:1004px;top:196px;width:20px;height:20px;background:#80ffff;border-right:1px solid #a0a0a0;border-bottom:1px solid #a0a0a0;"></div>
<div style="left:1011.5px;top:206.5px;width:4px;height:1px;background:#000"></div>
<div style="left:1024px;top:196px;width:20px;height:20px;background:#80ffff;border-right:1px solid #a0a0a0;border-bottom:1px solid #a0a0a0;"></div>
<div style="left:1031.5px;top:206.5px;width:4px;height:1px;background:#000"></div>
<div style="left:1044px;top:196px;width:20px;height:20px;background:#80ffff;border-right:1px solid #a0a0a0;border-bottom:1px solid #a0a0a0;"></div>
<div style="left:1051.5px;top:206.5px;width:4px;height:1px;background:#000"></div>
<div style="left:913px;top:216px;width:31px;height:20px;background:#f0f0f0;border-right:1px solid #a0a0a0;border-bottom:1px solid #a0a0a0"></div>
<span class="t" style="left:916px;top:220px;font-size:11px;line-height:13px;height:13px;color:#000;">20m</span>
<div style="left:944px;top:216px;width:20px;height:20px;background:#ff8080;border-right:1px solid #a0a0a0;border-bottom:1px solid #a0a0a0;"></div>
<span class="t" style="left:944px;top:220px;font-size:11px;line-height:13px;height:13px;color:#000;width:19px;text-align:center;">C</span>
<div style="left:964px;top:216px;width:20px;height:20px;background:#80ffff;border-right:1px solid #a0a0a0;border-bottom:1px solid #a0a0a0;"></div>
<span class="t" style="left:964px;top:220px;font-size:11px;line-height:13px;height:13px;color:#000;width:19px;text-align:center;">C</span>
<div style="left:984px;top:216px;width:20px;height:20px;background:#80ffff;border-right:1px solid #a0a0a0;border-bottom:1px solid #a0a0a0;"></div>
<span class="t" style="left:984px;top:220px;font-size:11px;line-height:13px;height:13px;color:#000;width:19px;text-align:center;">C</span>
<div style="left:1004px;top:216px;width:20px;height:20px;background:#80ffff;border-right:1px solid #a0a0a0;border-bottom:1px solid #a0a0a0;"></div>
<div style="left:1011.5px;top:226.5px;width:4px;height:1px;background:#000"></div>
<div style="left:1024px;top:216px;width:20px;height:20px;background:#80ffff;border-right:1px solid #a0a0a0;border-bottom:1px solid #a0a0a0;"></div>
<div style="left:1031.5px;top:226.5px;width:4px;height:1px;background:#000"></div>
<div style="left:1044px;top:216px;width:20px;height:20px;background:#80ffff;border-right:1px solid #a0a0a0;border-bottom:1px solid #a0a0a0;"></div>
<div style="left:1051.5px;top:226.5px;width:4px;height:1px;background:#000"></div>
<div style="left:913px;top:236px;width:31px;height:20px;background:#f0f0f0;border-right:1px solid #a0a0a0;border-bottom:1px solid #a0a0a0"></div>
<span class="t" style="left:916px;top:240px;font-size:11px;line-height:13px;height:13px;color:#000;">15m</span>
<div style="left:944px;top:236px;width:20px;height:20px;background:#80ffff;border-right:1px solid #a0a0a0;border-bottom:1px solid #a0a0a0;"></div>
<span class="t" style="left:944px;top:240px;font-size:11px;line-height:13px;height:13px;color:#000;width:19px;text-align:center;">C</span>
<div style="left:964px;top:236px;width:20px;height:20px;background:#80ffff;border-right:1px solid #a0a0a0;border-bottom:1px solid #a0a0a0;"></div>
<div style="left:971.5px;top:246.5px;width:4px;height:1px;background:#000"></div>
<div style="left:984px;top:236px;width:20px;height:20px;background:#80ffff;border-right:1px solid #a0a0a0;border-bottom:1px solid #a0a0a0;"></div>
<span class="t" style="left:984px;top:240px;font-size:11px;line-height:13px;height:13px;color:#000;width:19px;text-align:center;">C</span>
<div style="left:1004px;top:236px;width:20px;height:20px;background:#80ffff;border-right:1px solid #a0a0a0;border-bottom:1px solid #a0a0a0;"></div>
<div style="left:1011.5px;top:246.5px;width:4px;height:1px;background:#000"></div>
<div style="left:1024px;top:236px;width:20px;height:20px;background:#80ffff;border-right:1px solid #a0a0a0;border-bottom:1px solid #a0a0a0;"></div>
<div style="left:1031.5px;top:246.5px;width:4px;height:1px;background:#000"></div>
<div style="left:1044px;top:236px;width:20px;height:20px;background:#80ffff;border-right:1px solid #a0a0a0;border-bottom:1px solid #a0a0a0;"></div>
<div style="left:1051.5px;top:246.5px;width:4px;height:1px;background:#000"></div>
<div style="left:913px;top:256px;width:31px;height:20px;background:#f0f0f0;border-right:1px solid #a0a0a0;border-bottom:1px solid #a0a0a0"></div>
<span class="t" style="left:916px;top:260px;font-size:11px;line-height:13px;height:13px;color:#000;">10m</span>
<div style="left:944px;top:256px;width:20px;height:20px;background:#80ffff;border-right:1px solid #a0a0a0;border-bottom:1px solid #a0a0a0;"></div>
<span class="t" style="left:944px;top:260px;font-size:11px;line-height:13px;height:13px;color:#000;width:19px;text-align:center;">C</span>
<div style="left:964px;top:256px;width:20px;height:20px;background:#80ffff;border-right:1px solid #a0a0a0;border-bottom:1px solid #a0a0a0;"></div>
<div style="left:971.5px;top:266.5px;width:4px;height:1px;background:#000"></div>
<div style="left:984px;top:256px;width:20px;height:20px;background:#80ffff;border-right:1px solid #a0a0a0;border-bottom:1px solid #a0a0a0;"></div>
<span class="t" style="left:984px;top:260px;font-size:11px;line-height:13px;height:13px;color:#000;width:19px;text-align:center;">C</span>
<div style="left:1004px;top:256px;width:20px;height:20px;background:#80ffff;border-right:1px solid #a0a0a0;border-bottom:1px solid #a0a0a0;"></div>
<div style="left:1011.5px;top:266.5px;width:4px;height:1px;background:#000"></div>
<div style="left:1024px;top:256px;width:20px;height:20px;background:#80ffff;border-right:1px solid #a0a0a0;border-bottom:1px solid #a0a0a0;"></div>
<div style="left:1031.5px;top:266.5px;width:4px;height:1px;background:#000"></div>
<div style="left:1044px;top:256px;width:20px;height:20px;background:#80ffff;border-right:1px solid #a0a0a0;border-bottom:1px solid #a0a0a0;"></div>
<div style="left:1051.5px;top:266.5px;width:4px;height:1px;background:#000"></div>
<div style="left:913px;top:276px;width:31px;height:20px;background:#f0f0f0;border-right:1px solid #a0a0a0;border-bottom:1px solid #a0a0a0"></div>
<span class="t" style="left:916px;top:280px;font-size:11px;line-height:13px;height:13px;color:#000;">30m</span>
<div style="left:944px;top:276px;width:20px;height:20px;background:#80ffff;border-right:1px solid #a0a0a0;border-bottom:1px solid #a0a0a0;"></div>
<div style="left:951.5px;top:286.5px;width:4px;height:1px;background:#000"></div>
<div style="left:964px;top:276px;width:20px;height:20px;background:#80ffff;border-right:1px solid #a0a0a0;border-bottom:1px solid #a0a0a0;"></div>
<div style="left:971.5px;top:286.5px;width:4px;height:1px;background:#000"></div>
<div style="left:984px;top:276px;width:20px;height:20px;background:#80ffff;border-right:1px solid #a0a0a0;border-bottom:1px solid #a0a0a0;"></div>
<div style="left:991.5px;top:286.5px;width:4px;height:1px;background:#000"></div>
<div style="left:1004px;top:276px;width:20px;height:20px;background:#80ffff;border-right:1px solid #a0a0a0;border-bottom:1px solid #a0a0a0;"></div>
<div style="left:1011.5px;top:286.5px;width:4px;height:1px;background:#000"></div>
<div style="left:1024px;top:276px;width:20px;height:20px;background:#80ffff;border-right:1px solid #a0a0a0;border-bottom:1px solid #a0a0a0;"></div>
<div style="left:1031.5px;top:286.5px;width:4px;height:1px;background:#000"></div>
<div style="left:1044px;top:276px;width:20px;height:20px;background:#80ffff;border-right:1px solid #a0a0a0;border-bottom:1px solid #a0a0a0;"></div>
<div style="left:1051.5px;top:286.5px;width:4px;height:1px;background:#000"></div>
<div style="left:913px;top:296px;width:31px;height:20px;background:#f0f0f0;border-right:1px solid #a0a0a0;border-bottom:1px solid #a0a0a0"></div>
<span class="t" style="left:916px;top:300px;font-size:11px;line-height:13px;height:13px;color:#000;">17m</span>
<div style="left:944px;top:296px;width:20px;height:20px;background:#80ffff;border-right:1px solid #a0a0a0;border-bottom:1px solid #a0a0a0;"></div>
<span class="t" style="left:944px;top:300px;font-size:11px;line-height:13px;height:13px;color:#000;width:19px;text-align:center;">C</span>
<div style="left:964px;top:296px;width:20px;height:20px;background:#80ffff;border-right:1px solid #a0a0a0;border-bottom:1px solid #a0a0a0;"></div>
<div style="left:971.5px;top:306.5px;width:4px;height:1px;background:#000"></div>
<div style="left:984px;top:296px;width:20px;height:20px;background:#80ffff;border-right:1px solid #a0a0a0;border-bottom:1px solid #a0a0a0;"></div>
<div style="left:991.5px;top:306.5px;width:4px;height:1px;background:#000"></div>
<div style="left:1004px;top:296px;width:20px;height:20px;background:#80ffff;border-right:1px solid #a0a0a0;border-bottom:1px solid #a0a0a0;"></div>
<div style="left:1011.5px;top:306.5px;width:4px;height:1px;background:#000"></div>
<div style="left:1024px;top:296px;width:20px;height:20px;background:#80ffff;border-right:1px solid #a0a0a0;border-bottom:1px solid #a0a0a0;"></div>
<div style="left:1031.5px;top:306.5px;width:4px;height:1px;background:#000"></div>
<div style="left:1044px;top:296px;width:20px;height:20px;background:#80ffff;border-right:1px solid #a0a0a0;border-bottom:1px solid #a0a0a0;"></div>
<div style="left:1051.5px;top:306.5px;width:4px;height:1px;background:#000"></div>
<div style="left:913px;top:316px;width:31px;height:20px;background:#f0f0f0;border-right:1px solid #a0a0a0;border-bottom:1px solid #a0a0a0"></div>
<span class="t" style="left:916px;top:320px;font-size:11px;line-height:13px;height:13px;color:#000;">12m</span>
<div style="left:944px;top:316px;width:20px;height:20px;background:#80ffff;border-right:1px solid #a0a0a0;border-bottom:1px solid #a0a0a0;"></div>
<div style="left:951.5px;top:326.5px;width:4px;height:1px;background:#000"></div>
<div style="left:964px;top:316px;width:20px;height:20px;background:#80ffff;border-right:1px solid #a0a0a0;border-bottom:1px solid #a0a0a0;"></div>
<div style="left:971.5px;top:326.5px;width:4px;height:1px;background:#000"></div>
<div style="left:984px;top:316px;width:20px;height:20px;background:#80ffff;border-right:1px solid #a0a0a0;border-bottom:1px solid #a0a0a0;"></div>
<div style="left:991.5px;top:326.5px;width:4px;height:1px;background:#000"></div>
<div style="left:1004px;top:316px;width:20px;height:20px;background:#80ffff;border-right:1px solid #a0a0a0;border-bottom:1px solid #a0a0a0;"></div>
<div style="left:1011.5px;top:326.5px;width:4px;height:1px;background:#000"></div>
<div style="left:1024px;top:316px;width:20px;height:20px;background:#80ffff;border-right:1px solid #a0a0a0;border-bottom:1px solid #a0a0a0;"></div>
<div style="left:1031.5px;top:326.5px;width:4px;height:1px;background:#000"></div>
<div style="left:1044px;top:316px;width:20px;height:20px;background:#80ffff;border-right:1px solid #a0a0a0;border-bottom:1px solid #a0a0a0;"></div>
<div style="left:1051.5px;top:326.5px;width:4px;height:1px;background:#000"></div>
<div style="left:913px;top:336px;width:31px;height:20px;background:#f0f0f0;border-right:1px solid #a0a0a0;border-bottom:1px solid #a0a0a0"></div>
<span class="t" style="left:916px;top:340px;font-size:11px;line-height:13px;height:13px;color:#000;">6m</span>
<div style="left:944px;top:336px;width:20px;height:20px;background:#80ffff;border-right:1px solid #a0a0a0;border-bottom:1px solid #a0a0a0;"></div>
<div style="left:951.5px;top:346.5px;width:4px;height:1px;background:#000"></div>
<div style="left:964px;top:336px;width:20px;height:20px;background:#80ffff;border-right:1px solid #a0a0a0;border-bottom:1px solid #a0a0a0;"></div>
<div style="left:971.5px;top:346.5px;width:4px;height:1px;background:#000"></div>
<div style="left:984px;top:336px;width:20px;height:20px;background:#80ffff;border-right:1px solid #a0a0a0;border-bottom:1px solid #a0a0a0;"></div>
<div style="left:991.5px;top:346.5px;width:4px;height:1px;background:#000"></div>
<div style="left:1004px;top:336px;width:20px;height:20px;background:#80ffff;border-right:1px solid #a0a0a0;border-bottom:1px solid #a0a0a0;"></div>
<div style="left:1011.5px;top:346.5px;width:4px;height:1px;background:#000"></div>
<div style="left:1024px;top:336px;width:20px;height:20px;background:#80ffff;border-right:1px solid #a0a0a0;border-bottom:1px solid #a0a0a0;"></div>
<div style="left:1031.5px;top:346.5px;width:4px;height:1px;background:#000"></div>
<div style="left:1044px;top:336px;width:20px;height:20px;background:#80ffff;border-right:1px solid #a0a0a0;border-bottom:1px solid #a0a0a0;"></div>
<div style="left:1051.5px;top:346.5px;width:4px;height:1px;background:#000"></div>
<div style="left:909px;top:380px;width:166px;height:213px;background:#f0fbff;border-left:2px solid #7a8797;border-top:1px solid #7a8797;border-bottom:1px solid #fff"></div>
<div style="left:911.5px;top:484px;width:31px;height:20px;background:#f0f0f0;border-right:1px solid #a0a0a0;border-bottom:1px solid #a0a0a0"></div>
<span class="t" style="left:914.5px;top:488px;font-size:11px;line-height:13px;height:13px;color:#000;">80m</span>
<div style="left:942.5px;top:484px;width:20px;height:20px;background:#80ffff;border-right:1px solid #a0a0a0;border-bottom:1px solid #a0a0a0;"></div>
<div style="left:950.0px;top:494.5px;width:4px;height:1px;background:#000"></div>
<div style="left:962.5px;top:484px;width:20px;height:20px;background:#80ffff;border-right:1px solid #a0a0a0;border-bottom:1px solid #a0a0a0;"></div>
<div style="left:970.0px;top:494.5px;width:4px;height:1px;background:#000"></div>
<div style="left:982.5px;top:484px;width:20px;height:20px;background:#80ffff;border-right:1px solid #a0a0a0;border-bottom:1px solid #a0a0a0;"></div>
<div style="left:990.0px;top:494.5px;width:4px;height:1px;background:#000"></div>
<div style="left:1002.5px;top:484px;width:20px;height:20px;background:#80ffff;border-right:1px solid #a0a0a0;border-bottom:1px solid #a0a0a0;"></div>
<div style="left:1010.0px;top:494.5px;width:4px;height:1px;background:#000"></div>
<div style="left:1022.5px;top:484px;width:20px;height:20px;background:#80ffff;border-right:1px solid #a0a0a0;border-bottom:1px solid #a0a0a0;"></div>
<div style="left:1030.0px;top:494.5px;width:4px;height:1px;background:#000"></div>
<div style="left:1042.5px;top:484px;width:20px;height:20px;background:#80ffff;border-right:1px solid #a0a0a0;border-bottom:1px solid #a0a0a0;"></div>
<div style="left:1050.0px;top:494.5px;width:4px;height:1px;background:#000"></div>
<div style="left:911.5px;top:504px;width:31px;height:20px;background:#f0f0f0;border-right:1px solid #a0a0a0;border-bottom:1px solid #a0a0a0"></div>
<span class="t" style="left:914.5px;top:508px;font-size:11px;line-height:13px;height:13px;color:#000;">40m</span>
<div style="left:942.5px;top:504px;width:20px;height:20px;background:#80ffff;border-right:1px solid #a0a0a0;border-bottom:1px solid #a0a0a0;"></div>
<div style="left:950.0px;top:514.5px;width:4px;height:1px;background:#000"></div>
<div style="left:962.5px;top:504px;width:20px;height:20px;background:#80ffff;border-right:1px solid #a0a0a0;border-bottom:1px solid #a0a0a0;"></div>
<div style="left:970.0px;top:514.5px;width:4px;height:1px;background:#000"></div>
<div style="left:982.5px;top:504px;width:20px;height:20px;background:#80ffff;border-right:1px solid #a0a0a0;border-bottom:1px solid #a0a0a0;"></div>
<div style="left:990.0px;top:514.5px;width:4px;height:1px;background:#000"></div>
<div style="left:1002.5px;top:504px;width:20px;height:20px;background:#80ffff;border-right:1px solid #a0a0a0;border-bottom:1px solid #a0a0a0;"></div>
<div style="left:1010.0px;top:514.5px;width:4px;height:1px;background:#000"></div>
<div style="left:1022.5px;top:504px;width:20px;height:20px;background:#80ffff;border-right:1px solid #a0a0a0;border-bottom:1px solid #a0a0a0;"></div>
<div style="left:1030.0px;top:514.5px;width:4px;height:1px;background:#000"></div>
<div style="left:1042.5px;top:504px;width:20px;height:20px;background:#80ffff;border-right:1px solid #a0a0a0;border-bottom:1px solid #a0a0a0;"></div>
<div style="left:1050.0px;top:514.5px;width:4px;height:1px;background:#000"></div>
<div style="left:911.5px;top:524px;width:31px;height:20px;background:#0078d7;border-right:1px solid #a0a0a0;border-bottom:1px solid #a0a0a0"></div>
<span class="t" style="left:914.5px;top:528px;font-size:11px;line-height:13px;height:13px;color:#fff;">20m</span>
<div style="left:942.5px;top:524px;width:20px;height:20px;background:#ff8080;border-right:1px solid #a0a0a0;border-bottom:1px solid #a0a0a0;"></div>
<div style="left:942.5px;top:524px;width:19px;height:19px;border:1px solid #000;box-shadow:inset 0 0 0 0 #000"></div>
<span class="t" style="left:942.5px;top:528px;font-size:11px;line-height:13px;height:13px;color:#000;width:19px;text-align:center;">C</span>
<div style="left:962.5px;top:524px;width:20px;height:20px;background:#80ffff;border-right:1px solid #a0a0a0;border-bottom:1px solid #a0a0a0;"></div>
<div style="left:970.0px;top:534.5px;width:4px;height:1px;background:#000"></div>
<div style="left:982.5px;top:524px;width:20px;height:20px;background:#80ffff;border-right:1px solid #a0a0a0;border-bottom:1px solid #a0a0a0;"></div>
<span class="t" style="left:982.5px;top:528px;font-size:11px;line-height:13px;height:13px;color:#000;width:19px;text-align:center;">W</span>
<div style="left:1002.5px;top:524px;width:20px;height:20px;background:#80ffff;border-right:1px solid #a0a0a0;border-bottom:1px solid #a0a0a0;"></div>
<div style="left:1010.0px;top:534.5px;width:4px;height:1px;background:#000"></div>
<div style="left:1022.5px;top:524px;width:20px;height:20px;background:#80ffff;border-right:1px solid #a0a0a0;border-bottom:1px solid #a0a0a0;"></div>
<div style="left:1030.0px;top:534.5px;width:4px;height:1px;background:#000"></div>
<div style="left:1042.5px;top:524px;width:20px;height:20px;background:#80ffff;border-right:1px solid #a0a0a0;border-bottom:1px solid #a0a0a0;"></div>
<div style="left:1050.0px;top:534.5px;width:4px;height:1px;background:#000"></div>
<div style="left:911.5px;top:544px;width:31px;height:20px;background:#f0f0f0;border-right:1px solid #a0a0a0;border-bottom:1px solid #a0a0a0"></div>
<span class="t" style="left:914.5px;top:548px;font-size:11px;line-height:13px;height:13px;color:#000;">10m</span>
<div style="left:942.5px;top:544px;width:20px;height:20px;background:#80ffff;border-right:1px solid #a0a0a0;border-bottom:1px solid #a0a0a0;"></div>
<div style="left:950.0px;top:554.5px;width:4px;height:1px;background:#000"></div>
<div style="left:962.5px;top:544px;width:20px;height:20px;background:#80ffff;border-right:1px solid #a0a0a0;border-bottom:1px solid #a0a0a0;"></div>
<div style="left:970.0px;top:554.5px;width:4px;height:1px;background:#000"></div>
<div style="left:982.5px;top:544px;width:20px;height:20px;background:#80ffff;border-right:1px solid #a0a0a0;border-bottom:1px solid #a0a0a0;"></div>
<span class="t" style="left:982.5px;top:548px;font-size:11px;line-height:13px;height:13px;color:#000;width:19px;text-align:center;">W</span>
<div style="left:1002.5px;top:544px;width:20px;height:20px;background:#80ffff;border-right:1px solid #a0a0a0;border-bottom:1px solid #a0a0a0;"></div>
<div style="left:1010.0px;top:554.5px;width:4px;height:1px;background:#000"></div>
<div style="left:1022.5px;top:544px;width:20px;height:20px;background:#80ffff;border-right:1px solid #a0a0a0;border-bottom:1px solid #a0a0a0;"></div>
<div style="left:1030.0px;top:554.5px;width:4px;height:1px;background:#000"></div>
<div style="left:1042.5px;top:544px;width:20px;height:20px;background:#80ffff;border-right:1px solid #a0a0a0;border-bottom:1px solid #a0a0a0;"></div>
<div style="left:1050.0px;top:554.5px;width:4px;height:1px;background:#000"></div>
<div style="left:911.5px;top:564px;width:31px;height:20px;background:#f0f0f0;border-right:1px solid #a0a0a0;border-bottom:1px solid #a0a0a0"></div>
<span class="t" style="left:914.5px;top:568px;font-size:11px;line-height:13px;height:13px;color:#000;">15m</span>
<div style="left:942.5px;top:564px;width:20px;height:20px;background:#80ffff;border-right:1px solid #a0a0a0;border-bottom:1px solid #a0a0a0;"></div>
<div style="left:950.0px;top:574.5px;width:4px;height:1px;background:#000"></div>
<div style="left:962.5px;top:564px;width:20px;height:20px;background:#80ffff;border-right:1px solid #a0a0a0;border-bottom:1px solid #a0a0a0;"></div>
<div style="left:970.0px;top:574.5px;width:4px;height:1px;background:#000"></div>
<div style="left:982.5px;top:564px;width:20px;height:20px;background:#80ffff;border-right:1px solid #a0a0a0;border-bottom:1px solid #a0a0a0;"></div>
<div style="left:990.0px;top:574.5px;width:4px;height:1px;background:#000"></div>
<div style="left:1002.5px;top:564px;width:20px;height:20px;background:#80ffff;border-right:1px solid #a0a0a0;border-bottom:1px solid #a0a0a0;"></div>
<div style="left:1010.0px;top:574.5px;width:4px;height:1px;background:#000"></div>
<div style="left:1022.5px;top:564px;width:20px;height:20px;background:#80ffff;border-right:1px solid #a0a0a0;border-bottom:1px solid #a0a0a0;"></div>
<div style="left:1030.0px;top:574.5px;width:4px;height:1px;background:#000"></div>
<div style="left:1042.5px;top:564px;width:20px;height:20px;background:#80ffff;border-right:1px solid #a0a0a0;border-bottom:1px solid #a0a0a0;"></div>
<div style="left:1050.0px;top:574.5px;width:4px;height:1px;background:#000"></div>
<div class="fr" style="left:903px;top:607px;width:135px;height:285px;"></div>
<div style="left:904px;top:608px;width:133px;height:283px;border:1px solid rgba(255,255,255,.55);border-radius:6px 6px 0 0"></div>
<svg style="left:911.5px;top:616.5px" width="17.0" height="17.0" viewBox="-8.5 -8.5 17 17"><circle r="8" fill="#6e1215"/><circle r="7.1" fill="#b02f30"/><path d="M-1.9 -7.3h3.8v5.4h5.4v3.8h-5.4v5.4h-3.8v-5.4h-5.4v-3.8h5.4z" fill="#efe6e6"/><circle r="2.3" fill="#2a3f9c"/><circle r="1" fill="#6f86d8"/><path d="M-6.3 -3.2a7 7 0 0 1 12.6 0" fill="none" stroke="rgba(255,255,255,.3)" stroke-width="1.4"/><circle r="7.6" fill="none" stroke="rgba(60,0,0,.35)" stroke-width="1"/></svg>
<span class="t" style="left:932px;top:619.5px;font-size:12.3px;line-height:15px;height:15px;color:#9a9a9a;transform:scaleX(0.8957);transform-origin:0 0;">EA CW en...</span>
<div class="cb" style="left:996px;top:617px;width:32px;height:17px;"></div><svg style="left:996px;top:617px" width="32" height="17" viewBox="0 0 32 17"><path d="M12.5 5.8l7 5.4M19.5 5.8l-7 5.4" stroke="#3a4656" stroke-width="3.8" stroke-linecap="square"/><path d="M12.5 5.8l7 5.4M19.5 5.8l-7 5.4" stroke="#fff" stroke-width="2" stroke-linecap="square"/></svg>
<div style="left:910px;top:638px;width:120px;height:246px;background:#e6f0fa"></div>
<div style="left:910px;top:638px;width:120px;height:16px;background:#a5c5ec"></div>
<span class="t" style="left:914.5px;top:640px;font-size:11.5px;line-height:14px;height:14px;color:#000;font-weight:bold;transform:scaleX(0.9963);transform-origin:0 0;">9A9L   (9A9L)</span>
<div style="left:910px;top:654px;width:120px;height:2px;background:linear-gradient(#8a9bb0,#fff)"></div>
<div style="left:910px;top:656px;width:119px;height:227px;background:#f0fbff;border-left:2px solid #7a8797;border-top:1px solid #7a8797"></div>
<div style="left:912.5px;top:657px;width:31px;height:30px;background:#f0f0f0;border-right:1px solid #a0a0a0;border-bottom:1px solid #a0a0a0"></div>
<div style="left:943.5px;top:657px;width:20px;height:30px;background:#f0f0f0;border-right:1px solid #a0a0a0;border-bottom:1px solid #a0a0a0"></div>
<span class="t" style="left:958.0px;top:660px;font-size:11.5px;line-height:12px;transform:rotate(90deg);transform-origin:0 0;color:#111">CW</span>
<div style="left:912.5px;top:687px;width:31px;height:20px;background:#0078d7;border-right:1px solid #a0a0a0;border-bottom:1px solid #a0a0a0"></div>
<span class="t" style="left:915.5px;top:691px;font-size:11px;line-height:13px;height:13px;color:#fff;">80m</span>
<div style="left:943.5px;top:687px;width:20px;height:20px;background:#80ffff;border-right:1px solid #a0a0a0;border-bottom:1px solid #a0a0a0;"></div>
<div style="left:943.5px;top:687px;width:19px;height:19px;border:1px solid #000;box-shadow:inset 0 0 0 0 #000"></div>
<span class="t" style="left:943.5px;top:691px;font-size:11px;line-height:13px;height:13px;color:#000;width:19px;text-align:center;">!</span>
<div style="left:912.5px;top:707px;width:31px;height:20px;background:#f0f0f0;border-right:1px solid #a0a0a0;border-bottom:1px solid #a0a0a0"></div>
<span class="t" style="left:915.5px;top:711px;font-size:11px;line-height:13px;height:13px;color:#000;">40m</span>
<div style="left:943.5px;top:707px;width:20px;height:20px;background:#80ffff;border-right:1px solid #a0a0a0;border-bottom:1px solid #a0a0a0;"></div>
<span class="t" style="left:943.5px;top:711px;font-size:11px;line-height:13px;height:13px;color:#000;width:19px;text-align:center;">!</span>
<div style="left:912.5px;top:727px;width:31px;height:20px;background:#f0f0f0;border-right:1px solid #a0a0a0;border-bottom:1px solid #a0a0a0"></div>
<span class="t" style="left:915.5px;top:731px;font-size:11px;line-height:13px;height:13px;color:#000;">20m</span>
<div style="left:943.5px;top:727px;width:20px;height:20px;background:#ff8080;border-right:1px solid #a0a0a0;border-bottom:1px solid #a0a0a0;"></div>
<span class="t" style="left:943.5px;top:731px;font-size:11px;line-height:13px;height:13px;color:#000;width:19px;text-align:center;">!</span>
<div style="left:912.5px;top:747px;width:31px;height:20px;background:#f0f0f0;border-right:1px solid #a0a0a0;border-bottom:1px solid #a0a0a0"></div>
<span class="t" style="left:915.5px;top:751px;font-size:11px;line-height:13px;height:13px;color:#000;">15m</span>
<div style="left:943.5px;top:747px;width:20px;height:20px;background:#80ffff;border-right:1px solid #a0a0a0;border-bottom:1px solid #a0a0a0;"></div>
<span class="t" style="left:943.5px;top:751px;font-size:11px;line-height:13px;height:13px;color:#000;width:19px;text-align:center;">!</span>
<div style="left:912.5px;top:767px;width:31px;height:20px;background:#f0f0f0;border-right:1px solid #a0a0a0;border-bottom:1px solid #a0a0a0"></div>
<span class="t" style="left:915.5px;top:771px;font-size:11px;line-height:13px;height:13px;color:#000;">10m</span>
<div style="left:943.5px;top:767px;width:20px;height:20px;background:#80ffff;border-right:1px solid #a0a0a0;border-bottom:1px solid #a0a0a0;"></div>
<span class="t" style="left:943.5px;top:771px;font-size:11px;line-height:13px;height:13px;color:#000;width:19px;text-align:center;">!</span>
<div style="left:912.5px;top:787px;width:31px;height:20px;background:#f0f0f0;border-right:1px solid #a0a0a0;border-bottom:1px solid #a0a0a0"></div>
<span class="t" style="left:915.5px;top:791px;font-size:11px;line-height:13px;height:13px;color:#000;">30m</span>
<div style="left:943.5px;top:787px;width:20px;height:20px;background:#80ffff;border-right:1px solid #a0a0a0;border-bottom:1px solid #a0a0a0;"></div>
<span class="t" style="left:943.5px;top:791px;font-size:11px;line-height:13px;height:13px;color:#000;width:19px;text-align:center;">!</span>
<div style="left:912.5px;top:807px;width:31px;height:20px;background:#f0f0f0;border-right:1px solid #a0a0a0;border-bottom:1px solid #a0a0a0"></div>
<span class="t" style="left:915.5px;top:811px;font-size:11px;line-height:13px;height:13px;color:#000;">17m</span>
<div style="left:943.5px;top:807px;width:20px;height:20px;background:#80ffff;border-right:1px solid #a0a0a0;border-bottom:1px solid #a0a0a0;"></div>
<span class="t" style="left:943.5px;top:811px;font-size:11px;line-height:13px;height:13px;color:#000;width:19px;text-align:center;">!</span>
<div style="left:912.5px;top:827px;width:31px;height:20px;background:#f0f0f0;border-right:1px solid #a0a0a0;border-bottom:1px solid #a0a0a0"></div>
<span class="t" style="left:915.5px;top:831px;font-size:11px;line-height:13px;height:13px;color:#000;">12m</span>
<div style="left:943.5px;top:827px;width:20px;height:20px;background:#80ffff;border-right:1px solid #a0a0a0;border-bottom:1px solid #a0a0a0;"></div>
<span class="t" style="left:943.5px;top:831px;font-size:11px;line-height:13px;height:13px;color:#000;width:19px;text-align:center;">!</span>
<div style="left:912.5px;top:847px;width:31px;height:20px;background:#f0f0f0;border-right:1px solid #a0a0a0;border-bottom:1px solid #a0a0a0"></div>
<span class="t" style="left:915.5px;top:851px;font-size:11px;line-height:13px;height:13px;color:#000;">6m</span>
<div style="left:943.5px;top:847px;width:20px;height:20px;background:#80ffff;border-right:1px solid #a0a0a0;border-bottom:1px solid #a0a0a0;"></div>
<span class="t" style="left:943.5px;top:851px;font-size:11px;line-height:13px;height:13px;color:#000;width:19px;text-align:center;">!</span>
<div class="fr" style="left:1085px;top:82px;width:785px;height:670px;"></div>
<div style="left:1086px;top:83px;width:783px;height:668px;border:1px solid rgba(255,255,255,.55);border-radius:6px 6px 0 0"></div>
<svg style="left:1093.5px;top:91.5px" width="17.0" height="17.0" viewBox="-8.5 -8.5 17 17"><circle r="8" fill="#6e1215"/><circle r="7.1" fill="#b02f30"/><path d="M-1.9 -7.3h3.8v5.4h5.4v3.8h-5.4v5.4h-3.8v-5.4h-5.4v-3.8h5.4z" fill="#efe6e6"/><circle r="2.3" fill="#2a3f9c"/><circle r="1" fill="#6f86d8"/><path d="M-6.3 -3.2a7 7 0 0 1 12.6 0" fill="none" stroke="rgba(255,255,255,.3)" stroke-width="1.4"/><circle r="7.6" fill="none" stroke="rgba(60,0,0,.35)" stroke-width="1"/></svg>
<span class="t" style="left:1114px;top:94.5px;font-size:12.3px;line-height:15px;height:15px;color:#9a9a9a;transform:scaleX(0.9384);transform-origin:0 0;">Registrar QSO  Cond. trabajo: EA3AXM/Normal/WPX-2022-SSB</span>
<div class="cb" style="left:1828px;top:92px;width:32px;height:17px;"></div><svg style="left:1828px;top:92px" width="32" height="17" viewBox="0 0 32 17"><path d="M12.5 5.8l7 5.4M19.5 5.8l-7 5.4" stroke="#3a4656" stroke-width="3.8" stroke-linecap="square"/><path d="M12.5 5.8l7 5.4M19.5 5.8l-7 5.4" stroke="#fff" stroke-width="2" stroke-linecap="square"/></svg>
<div class="cb" style="left:1794px;top:92px;width:32px;height:17px;"></div><svg style="left:1794px;top:92px" width="32" height="17" viewBox="0 0 32 17"><rect x="10.5" y="4.5" width="10" height="8" rx="1" fill="#fff" stroke="#3a4656" stroke-width="1"/><rect x="13.5" y="7.5" width="4" height="2" fill="#dfe8f3" stroke="#3a4656" stroke-width="1"/></svg>
<div class="cb" style="left:1760px;top:92px;width:32px;height:17px;"></div><svg style="left:1760px;top:92px" width="32" height="17" viewBox="0 0 32 17"><rect x="10.5" y="8.5" width="10" height="4" rx="1" fill="#fff" stroke="#3a4656" stroke-width="1"/></svg>
<div style="left:1093px;top:113px;width:769px;height:630px;background:#a5c5ec"></div>
<div style="left:1093px;top:113px;width:769px;height:111px;background:#a5c5ec;border-top:1px solid #fff;border-left:1px solid #fff"></div>
<div style="left:1093px;top:224px;width:769px;height:3px;background:linear-gradient(#fff 0,#fff 33%,#a0a0a0 34%,#a0a0a0 66%,#fff 67%)"></div>
<span class="t" style="left:1108px;top:125px;font-size:15.5px;line-height:19px;height:19px;color:#000;font-weight:bold;transform:scaleX(0.9419);transform-origin:0 0;">Indicativo:</span>
<div class="sunk" style="left:1184px;top:118px;width:165px;height:27px;"></div>
<span class="t" style="left:1187px;top:121px;font-size:16px;line-height:18px;height:18px;color:#000;font-weight:bold;transform:scaleX(0.9841);transform-origin:0 0;">9A9L</span>
<span class="t" style="left:1381px;top:127px;font-size:11.5px;line-height:14px;height:14px;color:#000;transform:scaleX(0.8445);transform-origin:0 0;">RST_E:</span>
<div class="sunk" style="left:1420px;top:122px;width:54px;height:19px;background:#f0fbff"></div><span class="t" style="left:1423px;top:125.0px;font-size:11.5px;line-height:14px;height:14px;color:#000;">599</span>
<div class="sunk" style="left:1475px;top:122px;width:43px;height:19px;background:#f0fbff"></div><span class="t" style="left:1478px;top:125.0px;font-size:11.5px;line-height:14px;height:14px;color:#000;">0</span>
<span class="t" style="left:1559.5px;top:127px;font-size:11.5px;line-height:14px;height:14px;color:#000;transform:scaleX(0.8681);transform-origin:0 0;">RST_R:</span>
<div class="sunk" style="left:1603px;top:122px;width:55px;height:19px;background:#f0fbff"></div><span class="t" style="left:1606px;top:125.0px;font-size:11.5px;line-height:14px;height:14px;color:#000;">599</span>
<div class="sunk" style="left:1659px;top:122px;width:42px;height:19px;background:#f0fbff"></div><span class="t" style="left:1662px;top:125.0px;font-size:11.5px;line-height:14px;height:14px;color:#000;">0</span>
<span class="t" style="left:1132.5px;top:153.5px;font-size:11.5px;line-height:14px;height:14px;color:#000;transform:scaleX(0.9368);transform-origin:0 0;">Operador:</span>
<div class="sunk" style="left:1184px;top:150px;width:245px;height:19px;background:#f0fbff"></div>
<span class="t" style="left:1433.5px;top:153.5px;font-size:11.5px;line-height:14px;height:14px;color:#000;transform:scaleX(0.8998);transform-origin:0 0;">QSO real:</span>
<div class="sunk" style="left:1482px;top:150px;width:51px;height:19px;background:#f0fbff"></div><span class="t" style="left:1485px;top:153.0px;font-size:11.5px;line-height:14px;height:14px;color:#000;">9553</span>
<span class="t" style="left:1548px;top:153px;font-size:11.5px;line-height:14px;height:14px;color:#000;transform:scaleX(0.9332);transform-origin:0 0;">QTH-Locator:</span>
<div class="sunk" style="left:1616px;top:148px;width:86px;height:19px;background:#f0fbff"></div>
<span class="t" style="left:1157px;top:181px;font-size:11.5px;line-height:14px;height:14px;color:#000;transform:scaleX(0.8737);transform-origin:0 0;">QTH:</span>
<div class="sunk" style="left:1184px;top:172px;width:245px;height:21px;background:#f0fbff"></div><div class="rais" style="left:1411px;top:174px;width:16px;height:17px;"></div><svg style="left:1411px;top:174px" width="16" height="17" viewBox="0 0 16 17"><path d="M4.500 7.0h7l-3.500 3.500z" fill="#000"/></svg>
<span class="t" style="left:1453.5px;top:179px;font-size:11.5px;line-height:14px;height:14px;color:#000;transform:scaleX(0.8655);transform-origin:0 0;">Inicio:</span>
<div class="sunk" style="left:1482px;top:175px;width:82px;height:18px;background:#ffff00"></div><span class="t" style="left:1485px;top:177.5px;font-size:11.5px;line-height:14px;height:14px;color:#000;">17.52.21</span>
<span class="t" style="left:1596px;top:180px;font-size:11.5px;line-height:14px;height:14px;color:#000;transform:scaleX(0.8868);transform-origin:0 0;">Fin:</span>
<div class="sunk" style="left:1616px;top:174px;width:86px;height:19px;background:#ffff00"></div><span class="t" style="left:1619px;top:177.0px;font-size:11.5px;line-height:14px;height:14px;color:#000;">17.58.54</span>
<span class="t" style="left:1152px;top:205px;font-size:11.5px;line-height:14px;height:14px;color:#000;transform:scaleX(0.9074);transform-origin:0 0;">Modo:</span>
<div class="sunk" style="left:1184px;top:197px;width:94px;height:21px;background:#f0fbff"></div><div class="rais" style="left:1260px;top:199px;width:16px;height:17px;"></div><svg style="left:1260px;top:199px" width="16" height="17" viewBox="0 0 16 17"><path d="M4.500 7.0h7l-3.500 3.500z" fill="#000"/></svg><span class="t" style="left:1187px;top:201.0px;font-size:11.5px;line-height:14px;height:14px;color:#000;">CW</span>
<span class="t" style="left:1290.5px;top:205px;font-size:11.5px;line-height:14px;height:14px;color:#000;transform:scaleX(0.9054);transform-origin:0 0;">Banda:</span>
<div class="sunk" style="left:1325px;top:197px;width:104px;height:21px;background:#f0fbff"></div><div class="rais" style="left:1411px;top:199px;width:16px;height:17px;"></div><svg style="left:1411px;top:199px" width="16" height="17" viewBox="0 0 16 17"><path d="M4.500 7.0h7l-3.500 3.500z" fill="#000"/></svg><span class="t" style="left:1328px;top:201.0px;font-size:11.5px;line-height:14px;height:14px;color:#000;">20m</span>
<span class="t" style="left:1454.5px;top:205px;font-size:11.5px;line-height:14px;height:14px;color:#000;transform:scaleX(0.8506);transform-origin:0 0;">QRG:</span>
<div class="sunk" style="left:1482px;top:197px;width:77px;height:21px;background:#f0fbff"></div><span class="t" style="left:1519.829765625px;top:201.0px;font-size:11.5px;line-height:14px;height:14px;color:#000;">14.008</span>
<span class="t" style="left:1580.5px;top:206px;font-size:11.5px;line-height:14px;height:14px;color:#000;transform:scaleX(0.9245);transform-origin:0 0;">Fecha:</span>
<div class="sunk" style="left:1616px;top:198px;width:78px;height:22px;background:#ffff00"></div><span class="t" style="left:1619px;top:202.5px;font-size:11.5px;line-height:14px;height:14px;color:#000;transform:scaleX(0.9209);transform-origin:0 0;">30/03/2022</span>
<div class="rais" style="left:1677px;top:200px;width:15px;height:18px;"></div>
<svg style="left:1678px;top:203px" width="13" height="13" viewBox="0 0 13 13"><rect x=".5" y="1.500" width="12" height="11" fill="#d8d8d8" stroke="#222"/><rect x="1" y="1" width="11" height="3" fill="#1a237e"/><path d="M3.500 4v8M6.500 4v8M9.500 4v8M1 6.500h11M1 9.500h11" stroke="#c03030" stroke-width="1"/></svg>
<div style="left:1093px;top:227px;width:769px;height:24px;background:#a5c5ec;border-left:1px solid #fff;border-bottom:2px solid #8a98a8"></div>
<div class="rais" style="left:1098px;top:227px;width:79px;height:20px;"></div>
<span class="t" style="left:1134px;top:231px;font-size:11.5px;line-height:14px;height:14px;color:#000;transform:scaleX(0.8988);transform-origin:0 0;">Editar</span>
<svg style="left:1113px;top:228px" width="18" height="18" viewBox="0 0 18 18"><path d="M6.500 2.500h6l3.500 3.500v10.500h-9.500z" fill="#fff" stroke="#000" stroke-width="1"/><path d="M12.500 2.500v3.500h3.500" fill="none" stroke="#000" stroke-width="1"/><path d="M9 8h5M9 10.500h5M10 13h4" stroke="#000" stroke-width="1" stroke-dasharray="1 1"/><path d="M2.500 7.500l4-1 4 3.500 1 2.500-2 2.500-5 .5-2-2z" fill="#ffff66" stroke="#000" stroke-width=".9"/><path d="M0 8h2.500v5h-2.500z" fill="#00d8e8"/><path d="M4 10h4M4 12h5" stroke="#b8a800" stroke-width=".8"/><path d="M3 1l8 8.500" stroke="#000" stroke-width="2.600"/><path d="M3.500 1.500l7.500 8" stroke="#ffd800" stroke-width="1.300"/><path d="M3 1l1.500 1.600" stroke="#e00" stroke-width="1.500"/></svg>
<div class="rais" style="left:1186px;top:227px;width:79px;height:20px;"></div>
<span class="t" style="left:1220.5px;top:231px;font-size:11.5px;line-height:14px;height:14px;color:#000;transform:scaleX(0.9390);transform-origin:0 0;">Borrar</span>
<svg style="left:1200px;top:229px" width="18" height="16" viewBox="0 0 18 16"><path d="M3.500 4.500h8" stroke="#1020f0" stroke-width="2"/><path d="M5.500 1.500l-4 3 4 3z" fill="#1020f0"/><rect x="11.500" y="3.500" width="2" height="2" fill="#f00"/><path d="M1.500 11.500h6" stroke="#f00" stroke-width="2"/><rect x="13" y=".5" width="3" height="2" fill="#000"/><rect x="13.500" y="5" width="2" height="2" fill="#000"/><rect x="13.500" y="9" width="2" height="2" fill="#000"/><rect x="13" y="13" width="3" height="2" fill="#000"/></svg>
<div class="rais" style="left:1272px;top:227px;width:25px;height:20px;"></div>
<svg style="left:1277px;top:229px" width="17" height="17" viewBox="0 0 17 17"><path d="M6.500 1.500h6l3 3v8.500h-9z" fill="#fff" stroke="#000"/><path d="M8.500 5h5M8.500 7.500h5M8.500 10h5" stroke="#000" stroke-width="1"/><path d="M1.500 8.500l4-2.500v7h10v2.500h-13z" fill="#fff" stroke="#000" stroke-width="1"/><path d="M2.500 9l3-1.800v3.300z" fill="#20d0e0"/></svg>
<span class="t" style="left:1332px;top:230px;font-size:11.5px;line-height:14px;height:14px;color:#000;transform:scaleX(0.9483);transform-origin:0 0;">Total registros: 0</span>
<div style="left:1093px;top:252px;width:769px;height:361px;background:#f0fbff;border-top:1px solid #6d7a8a;border-left:1px solid #6d7a8a"></div>
<div style="left:1094px;top:253px;width:11px;height:19px;background:#f0f0f0;border-right:1px solid #000;border-bottom:1px solid #000;border-top:1px solid #fff;border-left:1px solid #fff"></div>
<div style="left:1094px;top:272px;width:11px;height:19px;background:#f0f0f0;border-right:1px solid #000;border-bottom:1px solid #000;border-top:1px solid #fff;border-left:1px solid #fff"></div>
<div style="left:1105px;top:253px;width:67.5px;height:19px;background:#f0f0f0;border-right:1px solid #000;border-bottom:1px solid #000;border-top:1px solid #fff;border-left:1px solid #fff"></div>
<span class="t" style="left:1108px;top:256px;font-size:11.5px;line-height:14px;height:14px;color:#000;transform:scaleX(0.9600);transform-origin:0 0;">Indicativo</span>
<div style="left:1105px;top:272px;width:67.5px;height:19px;border-right:1px solid #c0c0c0;border-bottom:1px solid #c0c0c0"></div>
<div style="left:1172.5px;top:253px;width:69.0px;height:19px;background:#f0f0f0;border-right:1px solid #000;border-bottom:1px solid #000;border-top:1px solid #fff;border-left:1px solid #fff"></div>
<span class="t" style="left:1175.5px;top:256px;font-size:11.5px;line-height:14px;height:14px;color:#000;transform:scaleX(0.9600);transform-origin:0 0;">Fecha</span>
<div style="left:1172.5px;top:272px;width:69.0px;height:19px;border-right:1px solid #c0c0c0;border-bottom:1px solid #c0c0c0"></div>
<div style="left:1241.5px;top:253px;width:50.0px;height:19px;background:#f0f0f0;border-right:1px solid #000;border-bottom:1px solid #000;border-top:1px solid #fff;border-left:1px solid #fff"></div>
<span class="t" style="left:1244.5px;top:256px;font-size:11.5px;line-height:14px;height:14px;color:#000;transform:scaleX(0.9600);transform-origin:0 0;">Modo</span>
<div style="left:1241.5px;top:272px;width:50.0px;height:19px;border-right:1px solid #c0c0c0;border-bottom:1px solid #c0c0c0"></div>
<div style="left:1291.5px;top:253px;width:56.0px;height:19px;background:#f0f0f0;border-right:1px solid #000;border-bottom:1px solid #000;border-top:1px solid #fff;border-left:1px solid #fff"></div>
<span class="t" style="left:1294.5px;top:256px;font-size:11.5px;line-height:14px;height:14px;color:#000;transform:scaleX(0.9600);transform-origin:0 0;">Banda</span>
<div style="left:1291.5px;top:272px;width:56.0px;height:19px;border-right:1px solid #c0c0c0;border-bottom:1px solid #c0c0c0"></div>
<div style="left:1347.5px;top:253px;width:65.0px;height:19px;background:#f0f0f0;border-right:1px solid #000;border-bottom:1px solid #000;border-top:1px solid #fff;border-left:1px solid #fff"></div>
<span class="t" style="left:1350.5px;top:256px;font-size:11.5px;line-height:14px;height:14px;color:#000;transform:scaleX(0.9600);transform-origin:0 0;">Acción QSL</span>
<div style="left:1347.5px;top:272px;width:65.0px;height:19px;border-right:1px solid #c0c0c0;border-bottom:1px solid #c0c0c0"></div>
<div style="left:1412.5px;top:253px;width:50.0px;height:19px;background:#f0f0f0;border-right:1px solid #000;border-bottom:1px solid #000;border-top:1px solid #fff;border-left:1px solid #fff"></div>
<span class="t" style="left:1415.5px;top:256px;font-size:11.5px;line-height:14px;height:14px;color:#000;transform:scaleX(0.9600);transform-origin:0 0;">QSL Env</span>
<div style="left:1412.5px;top:272px;width:50.0px;height:19px;border-right:1px solid #c0c0c0;border-bottom:1px solid #c0c0c0"></div>
<div style="left:1462.5px;top:253px;width:65.0px;height:19px;background:#f0f0f0;border-right:1px solid #000;border-bottom:1px solid #000;border-top:1px solid #fff;border-left:1px solid #fff"></div>
<span class="t" style="left:1465.5px;top:256px;font-size:11.5px;line-height:14px;height:14px;color:#000;transform:scaleX(0.9600);transform-origin:0 0;">QSL Rec</span>
<div style="left:1462.5px;top:272px;width:65.0px;height:19px;border-right:1px solid #c0c0c0;border-bottom:1px solid #c0c0c0"></div>
<div style="left:1527.5px;top:253px;width:54.5px;height:19px;background:#f0f0f0;border-right:1px solid #000;border-bottom:1px solid #000;border-top:1px solid #fff;border-left:1px solid #fff"></div>
<span class="t" style="left:1530.5px;top:256px;font-size:11.5px;line-height:14px;height:14px;color:#000;transform:scaleX(0.9600);transform-origin:0 0;">Re LOTW</span>
<div style="left:1527.5px;top:272px;width:54.5px;height:19px;border-right:1px solid #c0c0c0;border-bottom:1px solid #c0c0c0"></div>
<div style="left:1582px;top:253px;width:65.5px;height:19px;background:#f0f0f0;border-right:1px solid #000;border-bottom:1px solid #000;border-top:1px solid #fff;border-left:1px solid #fff"></div>
<span class="t" style="left:1585px;top:256px;font-size:11.5px;line-height:14px;height:14px;color:#000;transform:scaleX(0.9600);transform-origin:0 0;">Re eQSL</span>
<div style="left:1582px;top:272px;width:65.5px;height:19px;border-right:1px solid #c0c0c0;border-bottom:1px solid #c0c0c0"></div>
<svg style="left:1096px;top:276px" width="7" height="11" viewBox="0 0 7 11"><path d="M0 0l6 5.500-6 5.500z" fill="#000"/></svg>
<div style="left:1094px;top:613px;width:768px;height:17px;background:#f0f0f0"></div>
<div style="left:1111px;top:615px;width:17px;height:13px;background:#cdcdcd"></div>
<svg style="left:1094px;top:613px" width="768" height="17" viewBox="0 0 768 17"><path d="M11 5l-3.500 3.500 3.500 3.500M754 5l3.500 3.500-3.500 3.500" fill="none" stroke="#505050" stroke-width="1.500"/></svg>
<svg style="left:1093px;top:632px" width="33" height="21" viewBox="0 0 33 21"><path d="M.5 .5v12l7 8h25v-20" fill="#a5c5ec" stroke="#8aa4c8" stroke-width="1"/></svg>
<span class="t" style="left:1101.5px;top:633px;font-size:11.5px;line-height:14px;height:14px;transform:scaleX(0.8239);transform-origin:0 0"><u>Q</u>TH</span>
<svg style="left:1128px;top:632px" width="52" height="21" viewBox="0 0 52 21"><path d="M.5 .5v12l7 8h44v-20" fill="#a5c5ec" stroke="#8aa4c8" stroke-width="1"/></svg>
<span class="t" style="left:1135.0px;top:633px;font-size:11.5px;line-height:14px;height:14px;transform:scaleX(0.9522);transform-origin:0 0"><u>E</u>stación</span>
<svg style="left:1182px;top:632px" width="96" height="21" viewBox="0 0 96 21"><path d="M.5 .5v12l7 8h88v-20" fill="#a5c5ec" stroke="#8aa4c8" stroke-width="1"/></svg>
<div style="left:1189px;top:649.5px;width:88px;height:2.5px;background:#1b6fd8"></div>
<span class="t" style="left:1188.0px;top:633px;font-size:11.5px;line-height:14px;height:14px;font-weight:bold;transform:scaleX(1.0018);transform-origin:0 0">QSO <u>A</u>nteriores</span>
<svg style="left:1280px;top:632px" width="52" height="21" viewBox="0 0 52 21"><path d="M.5 .5v12l7 8h44v-20" fill="#a5c5ec" stroke="#8aa4c8" stroke-width="1"/></svg>
<span class="t" style="left:1287.0px;top:633px;font-size:11.5px;line-height:14px;height:14px;transform:scaleX(0.9254);transform-origin:0 0"><u>I</u>nfo QSL</span>
<svg style="left:1334px;top:632px" width="70" height="21" viewBox="0 0 70 21"><path d="M.5 .5v12l7 8h62v-20" fill="#a5c5ec" stroke="#8aa4c8" stroke-width="1"/></svg>
<span class="t" style="left:1341.0px;top:633px;font-size:11.5px;line-height:14px;height:14px;transform:scaleX(0.9204);transform-origin:0 0"><u>C</u>omentarios</span>
<svg style="left:1406px;top:632px" width="46" height="21" viewBox="0 0 46 21"><path d="M.5 .5v12l7 8h38v-20" fill="#a5c5ec" stroke="#8aa4c8" stroke-width="1"/></svg>
<span class="t" style="left:1414.0px;top:633px;font-size:11.5px;line-height:14px;height:14px;transform:scaleX(0.8585);transform-origin:0 0"><u>M</u>i QTH</span>
<svg style="left:1454px;top:632px" width="51" height="21" viewBox="0 0 51 21"><path d="M.5 .5v12l7 8h43v-20" fill="#a5c5ec" stroke="#8aa4c8" stroke-width="1"/></svg>
<span class="t" style="left:1460.5px;top:633px;font-size:11.5px;line-height:14px;height:14px;transform:scaleX(0.9386);transform-origin:0 0">Call<u>b</u>ook</span>
<svg style="left:1507px;top:632px" width="73" height="21" viewBox="0 0 73 21"><path d="M.5 .5v12l7 8h65v-20" fill="#a5c5ec" stroke="#8aa4c8" stroke-width="1"/></svg>
<span class="t" style="left:1514.5px;top:633px;font-size:11.5px;line-height:14px;height:14px;transform:scaleX(0.9152);transform-origin:0 0">Nue<u>v</u>os QSO</span>
<div style="left:1093px;top:655px;width:769px;height:24px;background:#a5c5ec;border-top:1px solid #fff;border-left:1px solid #fff;border-bottom:1px solid #8a98a8"></div>
<div class="rais" style="left:1094px;top:656px;width:24px;height:22px;"></div>
<div class="rais" style="left:1118px;top:656px;width:24px;height:22px;"></div>
<div class="rais" style="left:1142px;top:656px;width:24px;height:22px;"></div>
<div class="rais" style="left:1166px;top:656px;width:24px;height:22px;"></div>
<div class="rais" style="left:1190px;top:656px;width:24px;height:22px;"></div>
<div class="rais" style="left:1239px;top:656px;width:24px;height:22px;"></div>
<div class="rais" style="left:1263px;top:656px;width:24px;height:22px;"></div>
<div class="rais" style="left:1287px;top:656px;width:24px;height:22px;"></div>
<div class="rais" style="left:1311px;top:656px;width:40px;height:22px;"></div>
<div class="rais" style="left:1355px;top:656px;width:24px;height:22px;"></div>
<div class="rais" style="left:1380px;top:656px;width:24px;height:22px;"></div>
<div class="rais" style="left:1405px;top:656px;width:68px;height:22px;"></div>
<div class="rais" style="left:1475px;top:656px;width:79px;height:22px;"></div>
<div class="rais" style="left:1560px;top:656px;width:79px;height:22px;"></div>
<div class="rais" style="left:1640px;top:656px;width:65px;height:22px;"></div>
<svg style="left:1096px;top:657px" width="20" height="20" viewBox="0 0 20 20"><circle cx="10" cy="10" r="7" fill="#fff" stroke="#e00" stroke-width="2"/><path d="M6 13l8-7M6 9l5 5" stroke="#333" stroke-width="1"/><path d="M13 2l5 3-5 3z" fill="#e00"/></svg>
<svg style="left:1120px;top:657px" width="20" height="20" viewBox="0 0 20 20"><rect x="2.500" y="4.500" width="15" height="12" fill="#fff" stroke="#000" stroke-width="1.400"/><rect x="2" y="4" width="16" height="2" fill="#000"/><rect x="4" y="6" width="12" height="1.500" fill="#2030e0"/><path d="M5 9v6M8 9v6M11 9v6M14 9v6" stroke="#e00" stroke-width="2"/><path d="M3 12h14" stroke="#000" stroke-width="1"/></svg>
<svg style="left:1144px;top:657px" width="20" height="20" viewBox="0 0 20 20"><path d="M2 3h12l4 5-3 8H6l-3-5z" fill="#19e03a"/><text x="10" y="10" font-size="7" font-weight="bold" text-anchor="middle" fill="#000" font-family="Liberation Sans,sans-serif">Map</text></svg>
<svg style="left:1168px;top:657px" width="20" height="20" viewBox="0 0 20 20"><path d="M3 3v14M2 15.500h16M2 11.500h16M2 7.500h16" stroke="#444" stroke-width="1"/><path d="M4 15C8 14 9 4 10 4s2 10 7 11" fill="none" stroke="#e00" stroke-width="1.200"/><path d="M10 3v14" stroke="#22f" stroke-width="1"/></svg>
<svg style="left:1192px;top:657px" width="20" height="20" viewBox="0 0 20 20"><path d="M11 2l-6 9h4l-3 7 9-10h-4l4-6z" fill="#ffe600" stroke="#000" stroke-width=".8"/><text x="9.500" y="17.500" font-size="7.500" fill="#e00" font-family="Liberation Sans,sans-serif" textLength="10" lengthAdjust="spacingAndGlyphs">DX</text><path d="M2 17l6-5" stroke="#e00" stroke-width="1"/></svg>
<svg style="left:1241px;top:657px" width="20" height="20" viewBox="0 0 20 20"><path d="M4 3l12 13" stroke="#a03070" stroke-width="2.500"/><rect x="8" y="7" width="5" height="5" fill="#c04080" transform="rotate(45 10.500 9.500)"/><path d="M3 12a5 5 0 0 0 6 6M1 12a8 8 0 0 0 8 7" fill="none" stroke="#a03070" stroke-width="1"/></svg>
<svg style="left:1265px;top:657px" width="20" height="20" viewBox="0 0 20 20"><rect x="3" y="3" width="5" height="5" fill="#18d8e8" stroke="#000"/><rect x="13" y="13" width="5" height="5" fill="#e00" stroke="#000"/><circle cx="10" cy="11" r="2.500" fill="#ffe600" stroke="#000"/><path d="M13 2v6M10.500 6l2.500 3 2.500-3" stroke="#000" stroke-width="1.500" fill="none"/><path d="M3 18l3-5 3 5z" fill="#12e"/></svg>
<svg style="left:1289px;top:657px" width="20" height="20" viewBox="0 0 20 20"><text x="2" y="15" font-size="15" font-weight="bold" font-style="italic" fill="#e00" font-family="Liberation Serif,serif">C</text><text x="10" y="17" font-size="10" font-weight="bold" font-style="italic" fill="#e00" font-family="Liberation Serif,serif">w</text></svg>
<svg style="left:1313px;top:657px" width="36" height="20" viewBox="0 0 36 20"><rect x="2" y="2" width="16" height="16" fill="#000"/><rect x="7" y="3" width="6" height="14" fill="#ddd"/><path d="M10 4v12" stroke="#000" stroke-dasharray="2 2"/><circle cx="29" cy="10" r="4" fill="#f00"/></svg>
<svg style="left:1356px;top:657px" width="22" height="20" viewBox="0 0 22 20"><rect x="1" y="1" width="20" height="18" rx="3" fill="#1f5fc8"/><circle cx="11" cy="8" r="3" fill="#fff"/><path d="M5 16c0-5 12-5 12 0z" fill="#fff"/><circle cx="5.500" cy="9" r="2" fill="#cfe0ff"/><circle cx="16.500" cy="9" r="2" fill="#cfe0ff"/></svg>
<svg style="left:1381px;top:657px" width="22" height="20" viewBox="0 0 22 20"><text x="11" y="15" font-size="11" font-weight="bold" text-anchor="middle" fill="#e00" font-family="Liberation Sans,sans-serif" textLength="20" lengthAdjust="spacingAndGlyphs">UDP</text></svg>
<svg style="left:1413px;top:657px" width="20" height="20" viewBox="0 0 20 20"><path d="M2 5.500h8" stroke="#1020f0" stroke-width="2"/><path d="M8 2.500l4 3-4 3z" fill="#1020f0"/><rect x="12.500" y="3" width="2" height="2" fill="#f00"/><path d="M1.500 13.500h6M4.500 10.500v6" stroke="#f00" stroke-width="2"/><rect x="14" y="1.500" width="3" height="2" fill="#000"/><rect x="14.500" y="6" width="2" height="2" fill="#000"/><rect x="14.500" y="10" width="2" height="2" fill="#000"/><rect x="14" y="14" width="3" height="2" fill="#000"/></svg>
<svg style="left:1484px;top:657px" width="20" height="20" viewBox="0 0 20 20"><path d="M1.500 2.500h6l3 3v6h-9z" fill="#fff" stroke="#000"/><path d="M3 5h3M3 7h6M3 9h6" stroke="#000" stroke-dasharray="1 1"/><rect x="9" y="10" width="9" height="9" fill="#000"/><rect x="11" y="10" width="5" height="3" fill="#fff"/><rect x="12" y="15" width="3" height="4" fill="#999"/><path d="M11 3.500c3 0 4 1 4 4" stroke="#e00" fill="none" stroke-width="1.600"/><path d="M12.500 6.500h5l-2.500 3z" fill="#e00"/></svg>
<svg style="left:1569px;top:658px" width="18" height="20" viewBox="0 0 18 20"><path d="M3.500 4l10 10.500M13.500 4L3.500 14.500" stroke="#5a0000" stroke-width="3.800" stroke-linecap="round" transform="translate(.7,.7)"/><path d="M3.500 4l10 10.500M13.500 4L3.500 14.500" stroke="#c00000" stroke-width="3.200" stroke-linecap="round"/></svg>
<svg style="left:1646px;top:657px" width="20" height="20" viewBox="0 0 20 20"><text x="10" y="17.500" font-size="21" font-weight="bold" text-anchor="middle" fill="#18b4c8" stroke="#0a5070" stroke-width=".7" font-family="Liberation Sans,sans-serif">?</text></svg>
<span class="t" style="left:1434px;top:661px;font-size:11.5px;line-height:14px;height:14px;transform:scaleX(0.9326);transform-origin:0 0"><u>N</u>uevo</span>
<span class="t" style="left:1505px;top:661px;font-size:11.5px;line-height:14px;height:14px;transform:scaleX(0.9482);transform-origin:0 0"><u>G</u>uardar</span>
<span class="t" style="left:1590px;top:661px;font-size:11.5px;line-height:14px;height:14px;transform:scaleX(0.9344);transform-origin:0 0">Cance<u>l</u>ar</span>
<span class="t" style="left:1668px;top:661px;font-size:11.5px;line-height:14px;height:14px;transform:scaleX(0.9569);transform-origin:0 0">Ay<u>u</u>da</span>
<div style="left:1093px;top:680px;width:769px;height:63px;background:#a5c5ec;border-top:1px solid #fff;border-left:1px solid #fff;border-bottom:1px solid #fff"></div>
<svg style="left:1104px;top:687px" width="41" height="49" viewBox="0 0 41 49"><rect width="41" height="49" fill="#8cc63f"/><text x="4" y="14" font-size="13" fill="#fff" stroke="#fff" stroke-width=".35" font-family="Liberation Sans,sans-serif" textLength="33" lengthAdjust="spacingAndGlyphs">MEM</text><text x="4" y="28" font-size="13" fill="#fff" stroke="#fff" stroke-width=".35" font-family="Liberation Sans,sans-serif" textLength="27" lengthAdjust="spacingAndGlyphs">BER</text><text x="4" y="42" font-size="13" fill="#fff" stroke="#fff" stroke-width=".35" font-family="Liberation Sans,sans-serif" textLength="31" lengthAdjust="spacingAndGlyphs">SHIP</text><rect x="4" y="44" width="33" height="2" fill="#fff"/></svg>
<svg style="left:1162px;top:687px" width="65" height="51" viewBox="0 0 65 51"><defs><radialGradient id="lbk" cx="42%" cy="38%" r="60%"><stop offset="0" stop-color="#e8eef6"/><stop offset=".45" stop-color="#8aa2c4"/><stop offset=".8" stop-color="#3a4a66"/><stop offset="1" stop-color="#0a0c12"/></radialGradient></defs><rect width="65" height="51" fill="#040303"/><circle cx="31" cy="27.500" r="22.500" fill="url(#lbk)"/><path d="M18 14c5-4 15-4 20 0s-2 9-8 8-7 5-12 2-4-7 0-10z" fill="#9a6a40" opacity=".85"/><path d="M36 26c4-1 9 2 10 6s-4 8-8 6-5-9-2-12z" fill="#7a5a3a" opacity=".7"/><path d="M14 28c3 1 6 5 5 9s-6 0-5-9z" fill="#e8e8f0" opacity=".6"/><text x="2" y="8" font-size="6" font-weight="bold" fill="#fff" font-family="Liberation Serif,serif">THE ARRL</text><text x="33" y="28.500" font-size="12.500" font-weight="bold" fill="#302000" text-anchor="middle" font-family="Liberation Serif,serif" textLength="58" lengthAdjust="spacingAndGlyphs">LOGBOOK</text><text x="32.500" y="28" font-size="12.500" font-weight="bold" fill="#f6d54a" text-anchor="middle" font-family="Liberation Serif,serif" textLength="58" lengthAdjust="spacingAndGlyphs">LOGBOOK</text><path d="M3 30.500h59" stroke="#c9823a" stroke-width=".9"/><text x="44" y="36" font-size="3.800" fill="#ddd" text-anchor="middle" font-family="Liberation Sans,sans-serif">OF THE WORLD</text><path d="M21 33l3 2v4l-3 3-3-3v-4z" fill="#d8b030" stroke="#000" stroke-width=".5"/></svg>
<svg style="left:1237px;top:686px" width="54" height="54" viewBox="-27 -27 54 54"><circle r="26.500" fill="#eeeefa"/><circle r="25.300" fill="#2b2768"/><defs><path id="eq1" d="M-18.500 0a18.500 18.500 0 0 1 37 0"/><path id="eq2" d="M-23.500 0a23.500 23.500 0 0 0 47 0"/></defs><text font-size="8.200" font-weight="bold" fill="#fff" font-family="Liberation Sans,sans-serif" letter-spacing=".3"><textPath href="#eq1" startOffset="50%" text-anchor="middle">Authenticity</textPath></text><text font-size="8.200" font-weight="bold" fill="#fff" font-family="Liberation Sans,sans-serif" letter-spacing=".3"><textPath href="#eq2" startOffset="50%" text-anchor="middle">Guaranteed</textPath></text><text x="-2" y="4.500" font-size="13" font-weight="bold" font-style="italic" fill="#fff" text-anchor="middle" font-family="Liberation Sans,sans-serif" textLength="27" lengthAdjust="spacingAndGlyphs">eQSL</text><text x="13" y="4.500" font-size="5" font-weight="bold" fill="#fff" font-family="Liberation Sans,sans-serif">cc</text></svg>
<svg style="left:1299px;top:688px" width="76" height="52" viewBox="0 0 76 52"><defs><linearGradient id="cl1" x1="0" y1="0" x2="1" y2="1"><stop offset="0" stop-color="#ff8a28"/><stop offset=".6" stop-color="#e84818"/><stop offset="1" stop-color="#c02410"/></linearGradient><clipPath id="clc"><circle cx="25" cy="23" r="22"/></clipPath></defs><circle cx="25" cy="23" r="22" fill="url(#cl1)"/><g clip-path="url(#clc)"><path d="M0 8C10 2 14 4 16 8S30 30 50 34v20H0z" fill="#f4f4f4"/><path d="M0 16c8-4 10-2 12 2s14 20 38 24v12H0z" fill="#9a9ca2"/><path d="M0 24c6-3 8-1 10 3s14 18 40 22v6H0z" fill="#2e3036"/><path d="M0 33c5-2 7 0 9 3s10 12 30 16H0z" fill="#c8c8cc"/></g><circle cx="25" cy="23" r="22" fill="none" stroke="#55585e" stroke-width=".8"/><text x="2.500" y="47.500" font-size="18" font-weight="bold" fill="#f04a14" stroke="#3a1a08" stroke-width=".6" font-family="Liberation Sans,sans-serif" textLength="41" lengthAdjust="spacingAndGlyphs">CLUB</text><text x="44" y="47.500" font-size="18" fill="#a4a7ad" stroke="#26282c" stroke-width=".7" font-family="Liberation Sans,sans-serif" textLength="30" lengthAdjust="spacingAndGlyphs">LOG</text></svg>
<svg style="left:1383px;top:691px" width="58" height="46" viewBox="0 0 58 46"><defs><linearGradient id="wf" x1="0" y1="0" x2="0" y2="1"><stop offset="0" stop-color="#2bd0c0"/><stop offset=".3" stop-color="#d8e040"/><stop offset=".5" stop-color="#30b0e0"/><stop offset=".75" stop-color="#e0b030"/><stop offset="1" stop-color="#30d090"/></linearGradient></defs><rect width="58" height="46" rx="4" fill="#1f3f86"/><rect x="46" y="2" width="10" height="42" fill="url(#wf)"/><text x="3" y="21" font-size="19" font-weight="bold" fill="#1f3f86" stroke="#fff" stroke-width="1" font-family="Liberation Sans,sans-serif" textLength="42" lengthAdjust="spacingAndGlyphs">FT8</text><text x="3" y="41" font-size="17" font-weight="bold" fill="#1f3f86" stroke="#fff" stroke-width="1" font-family="Liberation Sans,sans-serif" textLength="42" lengthAdjust="spacingAndGlyphs">DMC</text></svg>
<svg style="left:1458px;top:683px" width="65" height="56" viewBox="0 0 65 56"><defs><radialGradient id="gd" cx="38%" cy="32%" r="70%"><stop offset="0" stop-color="#f6d878"/><stop offset=".45" stop-color="#c08a28"/><stop offset=".85" stop-color="#6a4610"/><stop offset="1" stop-color="#2a1a04"/></radialGradient></defs><rect width="65" height="56" fill="#fdfdf6"/><circle cx="32" cy="31" r="24" fill="url(#gd)"/><path d="M16 20c4-6 14-8 20-4s6 8 2 12-8 0-12 4-10 2-12-4 0-6 2-8z" fill="#f0d070" opacity=".55"/><path d="M36 34c4-2 10 0 10 5s-6 7-9 4-4-7-1-9z" fill="#e8c860" opacity=".5"/><path d="M14 34c3 2 4 8 2 10" stroke="#e8c860" stroke-width="2" fill="none" opacity=".5"/><text x="32" y="12.500" font-size="14" font-weight="bold" font-style="italic" fill="#d8a020" stroke="#4a2c04" stroke-width=".5" text-anchor="middle" font-family="Liberation Sans,sans-serif" textLength="47" lengthAdjust="spacingAndGlyphs">30MDG</text><text x="32.500" y="37" font-size="7.500" font-weight="bold" fill="#f0c848" stroke="#2a1804" stroke-width=".45" text-anchor="middle" font-family="Liberation Serif,serif" textLength="63" lengthAdjust="spacingAndGlyphs">30 Meter Digital Group</text></svg>
<svg style="left:1532px;top:682px" width="58" height="58" viewBox="-29 -29 58 58"><circle r="28.500" fill="#e8a820"/><circle r="27" fill="#8c1010"/><circle r="21" fill="none" stroke="#e8b040" stroke-width=".7"/><defs><path id="ep1" d="M-22.500 0a22.500 22.500 0 0 1 45 0"/><path id="ep2" d="M-25.500 0a25.500 25.500 0 0 0 51 0"/></defs><text font-size="4.600" font-weight="bold" fill="#e8b040" font-family="Liberation Sans,sans-serif"><textPath href="#ep1" startOffset="50%" text-anchor="middle">EUROPEAN ★ PHASE ★ SHIFT</textPath></text><text font-size="4.600" font-weight="bold" fill="#e8b040" font-family="Liberation Sans,sans-serif"><textPath href="#ep2" startOffset="50%" text-anchor="middle">KEYING ★ CLUB ★</textPath></text><text x="13.4" y="9.8" font-size="5" fill="#f0c040" text-anchor="middle" font-family="Liberation Sans,sans-serif">★</text><text x="7.8" y="15.4" font-size="5" fill="#f0c040" text-anchor="middle" font-family="Liberation Sans,sans-serif">★</text><text x="0.0" y="17.5" font-size="5" fill="#f0c040" text-anchor="middle" font-family="Liberation Sans,sans-serif">★</text><text x="-7.7" y="15.4" font-size="5" fill="#f0c040" text-anchor="middle" font-family="Liberation Sans,sans-serif">★</text><text x="-13.4" y="9.8" font-size="5" fill="#f0c040" text-anchor="middle" font-family="Liberation Sans,sans-serif">★</text><text x="-13.4" y="-5.8" font-size="5" fill="#f0c040" text-anchor="middle" font-family="Liberation Sans,sans-serif">★</text><text x="-7.8" y="-11.4" font-size="5" fill="#f0c040" text-anchor="middle" font-family="Liberation Sans,sans-serif">★</text><text x="-0.0" y="-13.5" font-size="5" fill="#f0c040" text-anchor="middle" font-family="Liberation Sans,sans-serif">★</text><text x="7.8" y="-11.4" font-size="5" fill="#f0c040" text-anchor="middle" font-family="Liberation Sans,sans-serif">★</text><text x="13.4" y="-5.8" font-size="5" fill="#f0c040" text-anchor="middle" font-family="Liberation Sans,sans-serif">★</text><text x="0" y="9.500" font-size="26" font-weight="bold" fill="#f2c440" text-anchor="middle" font-family="Liberation Sans,sans-serif" textLength="23" lengthAdjust="spacingAndGlyphs">EPC</text></svg>
<svg style="left:1604px;top:687px" width="98" height="48" viewBox="0 0 98 48"><rect width="98" height="48" fill="#fff"/><path d="M4 47A45 45 0 0 1 32 6" fill="none" stroke="#e02020" stroke-width="5"/><path d="M32 6A45 45 0 0 1 66 6" fill="none" stroke="#e8e020" stroke-width="5"/><path d="M66 6A45 45 0 0 1 94 47" fill="none" stroke="#60b030" stroke-width="5"/><path d="M1 47A48 48 0 0 1 97 47" fill="none" stroke="#111" stroke-width="1"/><path d="M7 47A42 42 0 0 1 91 47" fill="none" stroke="#111" stroke-width="1"/><defs><path id="er1" d="M17 40A33 33 0 0 1 81 40"/></defs><text font-size="6.500" font-weight="bold" fill="#2060c0" font-family="Liberation Sans,sans-serif"><textPath href="#er1" startOffset="50%" text-anchor="middle">European ROS Club</textPath></text><text x="49" y="44" font-size="18" font-weight="bold" fill="#fff" stroke="#2050a0" stroke-width=".9" text-anchor="middle" font-family="Liberation Sans,sans-serif" textLength="40" lengthAdjust="spacingAndGlyphs">ERC</text><path d="M49 46L51 4" stroke="#000" stroke-width="1.500"/><circle cx="49" cy="45" r="2" fill="#000"/></svg>
<svg style="left:1713px;top:679px" width="88" height="60" viewBox="-44 -30 88 60"><ellipse rx="43" ry="29.500" fill="#fff" opacity=".8"/><ellipse rx="41.500" ry="28" fill="#ffee22"/><ellipse rx="28.500" ry="16.500" fill="#1038c8"/><defs><path id="nd1" d="M-34 2a34 22 0 0 1 68 0"/><path id="nd2" d="M-37 -2a37 26 0 0 0 74 0"/></defs><text font-size="6.500" font-weight="bold" fill="#1030a0" font-family="Liberation Serif,serif"><textPath href="#nd1" startOffset="50%" text-anchor="middle">NATAL DIGITAL GROUP</textPath></text><text font-size="6" font-weight="bold" fill="#1030a0" font-family="Liberation Serif,serif"><textPath href="#nd2" startOffset="50%" text-anchor="middle">NATAL-RN BRASIL</textPath></text><text x="0" y="5" font-size="14" font-weight="bold" fill="#fff" text-anchor="middle" font-family="Liberation Serif,serif" textLength="32" lengthAdjust="spacingAndGlyphs">NDG</text></svg>
<div class="fr" style="left:1085px;top:754px;width:635px;height:270px;"></div>
<div style="left:1086px;top:755px;width:633px;height:268px;border:1px solid rgba(255,255,255,.55);border-radius:6px 6px 0 0"></div>
<svg style="left:1093.5px;top:763.5px" width="17.0" height="17.0" viewBox="-8.5 -8.5 17 17"><circle r="8" fill="#6e1215"/><circle r="7.1" fill="#b02f30"/><path d="M-1.9 -7.3h3.8v5.4h5.4v3.8h-5.4v5.4h-3.8v-5.4h-5.4v-3.8h5.4z" fill="#efe6e6"/><circle r="2.3" fill="#2a3f9c"/><circle r="1" fill="#6f86d8"/><path d="M-6.3 -3.2a7 7 0 0 1 12.6 0" fill="none" stroke="rgba(255,255,255,.3)" stroke-width="1.4"/><circle r="7.6" fill="none" stroke="rgba(60,0,0,.35)" stroke-width="1"/></svg>
<span class="t" style="left:1114px;top:766.5px;font-size:12.3px;line-height:15px;height:15px;color:#9a9a9a;transform:scaleX(0.9535);transform-origin:0 0;">Predicción de propagación para  9A9L</span>
<div class="cb" style="left:1678px;top:764px;width:32px;height:17px;"></div><svg style="left:1678px;top:764px" width="32" height="17" viewBox="0 0 32 17"><path d="M12.5 5.8l7 5.4M19.5 5.8l-7 5.4" stroke="#3a4656" stroke-width="3.8" stroke-linecap="square"/><path d="M12.5 5.8l7 5.4M19.5 5.8l-7 5.4" stroke="#fff" stroke-width="2" stroke-linecap="square"/></svg>
<div class="cb" style="left:1644px;top:764px;width:32px;height:17px;"></div><svg style="left:1644px;top:764px" width="32" height="17" viewBox="0 0 32 17"><rect x="10.5" y="4.5" width="10" height="8" rx="1" fill="#fff" stroke="#3a4656" stroke-width="1"/><rect x="13.5" y="7.5" width="4" height="2" fill="#dfe8f3" stroke="#3a4656" stroke-width="1"/></svg>
<div class="cb" style="left:1610px;top:764px;width:32px;height:17px;"></div><svg style="left:1610px;top:764px" width="32" height="17" viewBox="0 0 32 17"><rect x="10.5" y="8.5" width="10" height="4" rx="1" fill="#fff" stroke="#3a4656" stroke-width="1"/></svg>
<div style="left:1092px;top:785px;width:620px;height:222px;background:#a5c5ec"></div>
<div style="left:1092px;top:785px;width:620px;height:24px;background:#a5c5ec;border-top:1px solid #fff;border-bottom:1px solid #8a98a8"></div>
<span class="t" style="left:1097px;top:791px;font-size:13px;line-height:15px;height:15px;color:#000;transform:scaleX(0.9961);transform-origin:0 0;">Destino:</span>
<div class="sunk" style="left:1174px;top:785px;width:119px;height:23px;background:#f0fbff"></div><span class="t" style="left:1177px;top:788px;font-size:13px;line-height:14px;height:14px;color:#000;">9A9L</span>
<span class="t" style="left:1302px;top:791px;font-size:13px;line-height:15px;height:15px;color:#000;transform:scaleX(0.9814);transform-origin:0 0;">Fecha:</span>
<div class="sunk" style="left:1354px;top:785px;width:96px;height:23px;background:#f0fbff"></div><span class="t" style="left:1357px;top:788px;font-size:13px;line-height:14px;height:14px;color:#000;transform:scaleX(0.9684);transform-origin:0 0;">30/03/2022</span>
<div class="rais" style="left:1433px;top:787px;width:16px;height:19px;"></div>
<svg style="left:1435px;top:790px" width="13" height="13" viewBox="0 0 13 13"><rect x=".5" y="1.500" width="12" height="11" fill="#d8d8d8" stroke="#222"/><rect x="1" y="1" width="11" height="3" fill="#1a237e"/><path d="M3.500 4v8M6.500 4v8M9.500 4v8M1 6.500h11M1 9.500h11" stroke="#c03030" stroke-width="1"/></svg>
<span class="t" style="left:1456px;top:791px;font-size:13px;line-height:15px;height:15px;color:#000;transform:scaleX(0.9910);transform-origin:0 0;">Flujo solar:</span>
<div class="sunk" style="left:1550px;top:785px;width:51px;height:23px;background:#f0fbff"></div><span class="t" style="left:1575.31234375px;top:788px;font-size:13px;line-height:14px;height:14px;color:#000;">149</span>
<div class="rais" style="left:1607px;top:785px;width:90px;height:24px;"></div>
<span class="t" style="left:1612.5px;top:791px;font-size:13px;line-height:15px;height:15px;color:#000;transform:scaleX(0.9997);transform-origin:0 0;">Parámetros...</span>
<div style="left:1092px;top:810px;width:617px;height:164px;border:1px solid;border-color:#7a8797 #fff #fff #7a8797;background:#d8e6f6"></div>
<div style="left:1095px;top:813px;width:612px;height:158px;background:#80ffff;border:1px solid;border-color:#fff #8a98a8 #8a98a8 #fff"></div>
<svg style="left:1095px;top:813px" width="612" height="158" viewBox="1095 813 612 158" font-family="Liberation Sans,sans-serif">
<path d="M1180.4 840V920" stroke="#505050" stroke-width="1"/>
<path d="M1198.8 840V920" stroke="#505050" stroke-width="1"/>
<path d="M1217.2 840V920" stroke="#505050" stroke-width="1"/>
<path d="M1235.6 840V920" stroke="#505050" stroke-width="1"/>
<path d="M1254.0 840V920" stroke="#505050" stroke-width="1"/>
<path d="M1272.4 840V920" stroke="#505050" stroke-width="1"/>
<path d="M1290.8 840V920" stroke="#505050" stroke-width="1"/>
<path d="M1309.2 840V920" stroke="#505050" stroke-width="1"/>
<path d="M1327.6 840V920" stroke="#505050" stroke-width="1"/>
<path d="M1346.0 840V920" stroke="#505050" stroke-width="1"/>
<path d="M1364.4 840V920" stroke="#505050" stroke-width="1"/>
<path d="M1382.8 840V920" stroke="#505050" stroke-width="1"/>
<path d="M1401.2 840V920" stroke="#505050" stroke-width="1"/>
<path d="M1419.6 840V920" stroke="#505050" stroke-width="1"/>
<path d="M1438.0 840V920" stroke="#505050" stroke-width="1"/>
<path d="M1456.4 840V920" stroke="#505050" stroke-width="1"/>
<path d="M1474.8 840V920" stroke="#505050" stroke-width="1"/>
<path d="M1493.2 840V920" stroke="#505050" stroke-width="1"/>
<path d="M1511.6 840V920" stroke="#505050" stroke-width="1"/>
<path d="M1530.0 840V920" stroke="#505050" stroke-width="1"/>
<path d="M1548.4 840V920" stroke="#505050" stroke-width="1"/>
<path d="M1566.8 840V920" stroke="#505050" stroke-width="1"/>
<path d="M1585.2 840V920" stroke="#505050" stroke-width="1"/>
<path d="M1603.6 840V920" stroke="#505050" stroke-width="1"/>
<path d="M1162 839.500H1604" stroke="#000" stroke-width="1.3" stroke-dasharray="3 2"/>
<path d="M1162 860H1604" stroke="#808080" stroke-width="1" stroke-dasharray="3 3"/>
<path d="M1162 880.6H1604" stroke="#808080" stroke-width="1" stroke-dasharray="3 3"/>
<path d="M1162 901.2H1604" stroke="#808080" stroke-width="1" stroke-dasharray="3 3"/>
<path d="M1137.500 863.7H1604" stroke="#000080" stroke-width="1.2"/>
<path d="M1137.500 887.5H1604" stroke="#000080" stroke-width="1.2"/>
<path d="M1137.500 912.5H1604" stroke="#000080" stroke-width="1.2"/>
<path d="M1162.0 921v4M1166.6 921v3M1171.2 921v3M1175.8 921v3M1180.4 921v4M1185.0 921v3M1189.6 921v3M1194.2 921v3M1198.8 921v4M1203.4 921v3M1208.0 921v3M1212.6 921v3M1217.2 921v4M1221.8 921v3M1226.4 921v3M1231.0 921v3M1235.6 921v4M1240.2 921v3M1244.8 921v3M1249.4 921v3M1254.0 921v4M1258.6 921v3M1263.2 921v3M1267.8 921v3M1272.4 921v4M1277.0 921v3M1281.6 921v3M1286.2 921v3M1290.8 921v4M1295.4 921v3M1300.0 921v3M1304.6 921v3M1309.2 921v4M1313.8 921v3M1318.4 921v3M1323.0 921v3M1327.6 921v4M1332.2 921v3M1336.8 921v3M1341.4 921v3M1346.0 921v4M1350.6 921v3M1355.2 921v3M1359.8 921v3M1364.4 921v4M1369.0 921v3M1373.6 921v3M1378.2 921v3M1382.8 921v4M1387.4 921v3M1392.0 921v3M1396.6 921v3M1401.2 921v4M1405.8 921v3M1410.4 921v3M1415.0 921v3M1419.6 921v4M1424.2 921v3M1428.8 921v3M1433.4 921v3M1438.0 921v4M1442.6 921v3M1447.2 921v3M1451.8 921v3M1456.4 921v4M1461.0 921v3M1465.6 921v3M1470.2 921v3M1474.8 921v4M1479.4 921v3M1484.0 921v3M1488.6 921v3M1493.2 921v4M1497.8 921v3M1502.4 921v3M1507.0 921v3M1511.6 921v4M1516.2 921v3M1520.8 921v3M1525.4 921v3M1530.0 921v4M1534.6 921v3M1539.2 921v3M1543.8 921v3M1548.4 921v4M1553.0 921v3M1557.6 921v3M1562.2 921v3M1566.8 921v4M1571.4 921v3M1576.0 921v3M1580.6 921v3M1585.2 921v4M1589.8 921v3M1594.4 921v3M1599.0 921v3M1603.6 921v4" stroke="#000" stroke-width="1"/>
<path d="M1162.0,857 L1180.4,857 L1198.8,857.5 L1217.2,858 L1235.6,857.5 L1254.0,857 L1272.4,863 L1290.8,871 L1309.2,876 L1327.6,878 L1346.0,880 L1364.4,880 L1382.8,880 L1401.2,880 L1419.6,878 L1438.0,876 L1456.4,871 L1474.8,861 L1493.2,857.5 L1511.6,856 L1530.0,856 L1548.4,856 L1566.8,856 L1585.2,857 L1603.6,857" fill="none" stroke="#ffffff" stroke-width="2" stroke-linejoin="round"/>
<path d="M1162.0,871 L1180.4,871 L1198.8,875 L1217.2,881 L1235.6,879 L1254.0,869.5 L1272.4,864 L1290.8,867.5 L1309.2,869 L1327.6,870 L1364.4,870.5 L1419.6,870.5 L1438.0,869.5 L1456.4,867 L1474.8,864 L1493.2,861 L1511.6,861 L1530.0,862 L1548.4,864 L1566.8,867 L1585.2,870 L1603.6,872" fill="none" stroke="#808080" stroke-width="2" stroke-linejoin="round"/>
<path d="M1162.0,897 L1180.4,897 L1198.8,899 L1217.2,900.7 L1235.6,900.7 L1254.0,895.5 L1272.4,878.7 L1290.8,870.7 L1309.2,870 L1327.6,870 L1382.8,870 L1438.0,869 L1456.4,868 L1474.8,867 L1493.2,868 L1511.6,874.5 L1530.0,884.5 L1548.4,890 L1566.8,894 L1585.2,896 L1603.6,897" fill="none" stroke="#ff00ff" stroke-width="2" stroke-linejoin="round"/>
<path d="M1162.0,907.5 L1180.4,907.5 L1198.8,909.5 L1217.2,911 L1235.6,911 L1254.0,906 L1272.4,902.5 L1290.8,890 L1309.2,880 L1327.6,877 L1346.0,875 L1364.4,873 L1382.8,872.5 L1419.6,872.5 L1438.0,874 L1456.4,875.5 L1474.8,879 L1493.2,885.5 L1511.6,894 L1530.0,902 L1548.4,904 L1566.8,906 L1585.2,907 L1603.6,907" fill="none" stroke="#008080" stroke-width="2" stroke-linejoin="round"/>
<path d="M1162.0,913 L1180.4,913 L1198.8,915.7 L1217.2,917.5 L1235.6,917.5 L1254.0,912 L1272.4,908 L1290.8,903 L1309.2,892 L1327.6,888.7 L1346.0,885.5 L1364.4,883 L1382.8,882 L1419.6,882 L1438.0,884 L1456.4,886.5 L1474.8,891 L1493.2,899.5 L1511.6,904.5 L1530.0,908 L1548.4,911 L1566.8,913 L1585.2,914 L1603.6,914" fill="none" stroke="#000080" stroke-width="2" stroke-linejoin="round"/>
<path d="M1272.4,920 L1290.8,915 L1309.2,912.5 L1327.6,911 L1346.0,910 L1364.4,909.3 L1382.8,909.5 L1456.4,909.5 L1474.8,911 L1493.2,914 L1511.6,917 L1530.0,920" fill="none" stroke="#00ff00" stroke-width="2" stroke-linejoin="round"/>
<path d="M1162 839V922M1161 921H1605" stroke="#000" stroke-width="2.2" fill="none"/>
<path d="M1491.300 838V926" stroke="#e01010" stroke-width="1.1"/>
<text x="1132.500" y="829.500" font-size="13" font-weight="bold" fill="#000">dBm</text>
<text x="1156" y="843" font-size="11" text-anchor="end" fill="#000">-50</text>
<text x="1156" y="863" font-size="11" text-anchor="end" fill="#000">-70</text>
<text x="1156" y="883.7" font-size="11" text-anchor="end" fill="#000">-90</text>
<text x="1156" y="904.5" font-size="11" text-anchor="end" fill="#000">-110</text>
<text x="1113.500" y="864.5" font-size="14.500" font-weight="bold" fill="#000080">S9</text>
<text x="1113.500" y="888.7" font-size="14.500" font-weight="bold" fill="#000080">S5</text>
<text x="1113.500" y="918.7" font-size="14.500" font-weight="bold" fill="#000080">S1</text>
<text x="1162.0" y="937.500" font-size="11" text-anchor="middle" fill="#000">2</text>
<text x="1180.4" y="937.500" font-size="11" text-anchor="middle" fill="#000">3</text>
<text x="1198.8" y="937.500" font-size="11" text-anchor="middle" fill="#000">4</text>
<text x="1217.2" y="937.500" font-size="11" text-anchor="middle" fill="#000">5</text>
<text x="1235.6" y="937.500" font-size="11" text-anchor="middle" fill="#000">6</text>
<text x="1254.0" y="937.500" font-size="11" text-anchor="middle" fill="#000">7</text>
<text x="1272.4" y="937.500" font-size="11" text-anchor="middle" fill="#000">8</text>
<text x="1290.8" y="937.500" font-size="11" text-anchor="middle" fill="#000">9</text>
<text x="1309.2" y="937.500" font-size="11" text-anchor="middle" fill="#000">10</text>
<text x="1327.6" y="937.500" font-size="11" text-anchor="middle" fill="#000">11</text>
<text x="1346.0" y="937.500" font-size="11" text-anchor="middle" fill="#000">12</text>
<text x="1364.4" y="937.500" font-size="11" text-anchor="middle" fill="#000">13</text>
<text x="1382.8" y="937.500" font-size="11" text-anchor="middle" fill="#000">14</text>
<text x="1401.2" y="937.500" font-size="11" text-anchor="middle" fill="#000">15</text>
<text x="1419.6" y="937.500" font-size="11" text-anchor="middle" fill="#000">16</text>
<text x="1438.0" y="937.500" font-size="11" text-anchor="middle" fill="#000">17</text>
<text x="1456.4" y="937.500" font-size="11" text-anchor="middle" fill="#000">18</text>
<text x="1474.8" y="937.500" font-size="11" text-anchor="middle" fill="#000">19</text>
<text x="1493.2" y="937.500" font-size="11" text-anchor="middle" fill="#000">20</text>
<text x="1511.6" y="937.500" font-size="11" text-anchor="middle" fill="#000">21</text>
<text x="1530.0" y="937.500" font-size="11" text-anchor="middle" fill="#000">22</text>
<text x="1548.4" y="937.500" font-size="11" text-anchor="middle" fill="#000">23</text>
<text x="1566.8" y="937.500" font-size="11" text-anchor="middle" fill="#000">24</text>
<text x="1585.2" y="937.500" font-size="11" text-anchor="middle" fill="#000">1</text>
<text x="1603.6" y="937.500" font-size="11" text-anchor="middle" fill="#000">2</text>
<rect x="1266.500" y="938.500" width="230" height="8" fill="#ffff00" stroke="#000" stroke-width="1"/>
<rect x="1248.500" y="956.500" width="231" height="8" fill="#ffff00" stroke="#000" stroke-width="1"/>
<rect x="1097.500" y="944" width="19.500" height="14" fill="#ffff00"/><text x="1099" y="955" font-size="12" fill="#000">Sol</text>
<rect x="1348" y="816.500" width="255.500" height="17.500" fill="#ffff40" stroke="#000" stroke-width="1"/>
<text x="1354" y="830" font-size="13" font-weight="bold" fill="#f01010" textLength="243" lengthAdjust="spacingAndGlyphs">Predicción de propagación Paso corto</text>
<rect x="1624" y="831" width="65" height="86" fill="#000"/><rect x="1621.500" y="828.500" width="64" height="85.500" fill="#80ffff" stroke="#000" stroke-width="1"/>
<path d="M1626 835.7h9" stroke="#ffffff" stroke-width="2"/><text x="1639" y="839.7" font-size="10.6" fill="#000">7 MHz</text>
<path d="M1626 849.7h9" stroke="#808080" stroke-width="2"/><text x="1639" y="853.7" font-size="10.6" fill="#000">10,1 MHz</text>
<path d="M1626 863.7h9" stroke="#ff00ff" stroke-width="2"/><text x="1639" y="867.7" font-size="10.6" fill="#000">14 MHz</text>
<path d="M1626 877.7h9" stroke="#008080" stroke-width="2"/><text x="1639" y="881.7" font-size="10.6" fill="#000">18,1 MHz</text>
<path d="M1626 891.7h9" stroke="#000080" stroke-width="2"/><text x="1639" y="895.7" font-size="10.6" fill="#000">21 MHz</text>
<path d="M1626 905.7h9" stroke="#00ff00" stroke-width="2"/><text x="1639" y="909.7" font-size="10.6" fill="#000">28 MHz</text>
<text x="1614.500" y="933" font-size="13" font-weight="bold" fill="#000">Local</text>
<rect x="1609" y="938" width="30" height="13.500" fill="#ffff00"/><text x="1610" y="949" font-size="12" fill="#000">Inicio</text>
<rect x="1609" y="955.500" width="30" height="13.500" fill="#ffff00"/><text x="1610" y="966.500" font-size="12" fill="#000" textLength="28" lengthAdjust="spacingAndGlyphs">9A9L</text>
</svg>
<div style="left:1092px;top:977px;width:620px;height:30px;background:#a5c5ec;border-top:1px solid #fff"></div>
<div class="rais" style="left:1093px;top:982px;width:53px;height:21px;"></div>
<span class="t" style="left:1108.5px;top:986px;font-size:11.5px;line-height:14px;height:14px;color:#000;transform:scaleX(0.9304);transform-origin:0 0;">dBm</span>
<div class="rais" style="left:1153px;top:982px;width:54px;height:21px;"></div>
<span class="t" style="left:1167.0px;top:986px;font-size:11.5px;line-height:14px;height:14px;color:#000;transform:scaleX(0.9687);transform-origin:0 0;">uV/m</span>
<div class="rais" style="left:1218px;top:982px;width:54px;height:21px;"></div>
<span class="t" style="left:1233.5px;top:986px;font-size:11.5px;line-height:14px;height:14px;color:#000;transform:scaleX(0.9234);transform-origin:0 0;">MUF</span>
<div style="left:1276px;top:979px;width:197px;height:27px;border:1px solid;border-color:#fff #8a98a8 #8a98a8 #fff"></div>
<span class="t" style="left:1279.5px;top:985px;font-size:11.5px;line-height:14px;height:14px;color:#000;transform:scaleX(0.8891);transform-origin:0 0;">Hora:</span>
<svg style="left:1321px;top:979px" width="12" height="12" viewBox="-6 -6 12 12"><circle r="5.2" fill="#fff" stroke="#555" stroke-width="1"/></svg>
<span class="t" style="left:1338px;top:979px;font-size:11.5px;line-height:14px;height:14px;color:#000;transform:scaleX(0.8462);transform-origin:0 0;">UTC</span>
<svg style="left:1321px;top:992px" width="12" height="12" viewBox="-6 -6 12 12"><circle r="5.2" fill="#fff" stroke="#555" stroke-width="1"/><circle r="2.3" fill="#000"/></svg>
<span class="t" style="left:1338px;top:992px;font-size:11.5px;line-height:14px;height:14px;color:#000;transform:scaleX(0.9458);transform-origin:0 0;">Local</span>
<svg style="left:1395px;top:986px" width="12" height="12" viewBox="-6 -6 12 12"><circle r="5.2" fill="#fff" stroke="#555" stroke-width="1"/></svg>
<span class="t" style="left:1412.5px;top:986px;font-size:11.5px;line-height:14px;height:14px;color:#000;transform:scaleX(0.9233);transform-origin:0 0;">Destino</span>
<div style="left:1476px;top:979px;width:119px;height:27px;border:1px solid;border-color:#fff #8a98a8 #8a98a8 #fff"></div>
<div style="left:1481.5px;top:986px;width:12px;height:12px;background:#fff;border:1px solid #333"></div>
<span class="t" style="left:1499px;top:986px;font-size:11.5px;line-height:14px;height:14px;color:#000;transform:scaleX(0.9186);transform-origin:0 0;">Paso largo</span>
<div style="left:1700px;top:785px;width:12px;height:24px;background:#a5c5ec"></div>
<div class="fra" style="left:777px;top:335px;width:608px;height:186px;"></div>
<div style="left:778px;top:336px;width:606px;height:184px;border:1px solid rgba(255,255,255,.55);border-radius:6px 6px 0 0"></div>
<svg style="left:785.5px;top:344.5px" width="17.0" height="17.0" viewBox="-8.5 -8.5 17 17"><circle r="8" fill="#6e1215"/><circle r="7.1" fill="#b02f30"/><path d="M-1.9 -7.3h3.8v5.4h5.4v3.8h-5.4v5.4h-3.8v-5.4h-5.4v-3.8h5.4z" fill="#efe6e6"/><circle r="2.3" fill="#2a3f9c"/><circle r="1" fill="#6f86d8"/><path d="M-6.3 -3.2a7 7 0 0 1 12.6 0" fill="none" stroke="rgba(255,255,255,.3)" stroke-width="1.4"/><circle r="7.6" fill="none" stroke="rgba(60,0,0,.35)" stroke-width="1"/></svg>
<span class="t" style="left:806px;top:346.5px;font-size:12.3px;line-height:15px;height:15px;color:#000;transform:scaleX(0.9095);transform-origin:0 0;">QSO para: WPX: 9A9, 20m, CW</span>
<div class="cbx" style="left:1343px;top:345px;width:32px;height:17px;"></div><svg style="left:1343px;top:345px" width="32" height="17" viewBox="0 0 32 17"><path d="M12.5 5.8l7 5.4M19.5 5.8l-7 5.4" stroke="#222" stroke-width="3.8" stroke-linecap="square"/><path d="M12.5 5.8l7 5.4M19.5 5.8l-7 5.4" stroke="#fff" stroke-width="2" stroke-linecap="square"/></svg>
<div class="cba" style="left:1309px;top:345px;width:32px;height:17px;"></div><svg style="left:1309px;top:345px" width="32" height="17" viewBox="0 0 32 17"><rect x="10.5" y="4.5" width="10" height="8" rx="1" fill="#fff" stroke="#222" stroke-width="1"/><rect x="13.5" y="7.5" width="4" height="2" fill="#dfe8f3" stroke="#222" stroke-width="1"/></svg>
<div class="cba" style="left:1275px;top:345px;width:32px;height:17px;"></div><svg style="left:1275px;top:345px" width="32" height="17" viewBox="0 0 32 17"><rect x="10.5" y="8.5" width="10" height="4" rx="1" fill="#fff" stroke="#222" stroke-width="1"/></svg>
<div style="left:785px;top:366px;width:592px;height:146px;background:#f0fbff"></div>
<div style="left:785px;top:366px;width:592px;height:25px;background:#f0f0f0"></div>
<div style="left:785px;top:366px;width:268px;height:24px;background:#a5c5ec;border-top:1px solid #fff;border-left:1px solid #fff;border-bottom:1px solid #8a98a8"></div>
<span class="t" style="left:808.5px;top:371px;font-size:11.5px;line-height:14px;height:14px;color:#000;transform:scaleX(0.9387);transform-origin:0 0;">Grupo :</span>
<div class="sunk" style="left:872px;top:367px;width:177px;height:21px;background:#f0fbff"></div><div class="rais" style="left:1031px;top:369px;width:16px;height:17px;"></div><svg style="left:1031px;top:369px" width="16" height="17" viewBox="0 0 16 17"><path d="M4.500 7.0h7l-3.500 3.500z" fill="#000"/></svg><span class="t" style="left:875px;top:369.5px;font-size:10.8px;line-height:14px;height:14px;color:#000;">QSOs in Date Order</span>
<div class="rais" style="left:1053px;top:366px;width:25px;height:24px;"></div>
<div class="rais" style="left:1079px;top:366px;width:28px;height:24px;"></div>
<div class="rais" style="left:1108px;top:366px;width:81px;height:24px;"></div>
<div class="rais" style="left:1190px;top:366px;width:81px;height:24px;"></div>
<div class="rais" style="left:1272px;top:366px;width:105px;height:24px;"></div>
<svg style="left:1056px;top:369px" width="19" height="18" viewBox="0 0 19 18"><path d="M6 3l7-1 2 4H5z" fill="#555" stroke="#222" stroke-width=".8"/><path d="M3 7l13-1 2 5-14 2z" fill="#8a8a9a" stroke="#333" stroke-width=".8"/><path d="M4 12l12-2 1 3-10 3z" fill="#e8c8f0" stroke="#b050c0" stroke-width=".8"/><path d="M7 10l7-1" stroke="#fff" stroke-width="1.200"/></svg>
<svg style="left:1084px;top:372px" width="19" height="12" viewBox="0 0 19 12"><path d="M1.500 6l6.500-4v3h9.500v2h-9.500v3z" fill="#f00000" stroke="#200" stroke-width=".9"/></svg>
<svg style="left:1122px;top:370px" width="18" height="16" viewBox="0 0 18 16"><path d="M3.500 4.500h8" stroke="#1020f0" stroke-width="2"/><path d="M5.500 1.500l-4 3 4 3z" fill="#1020f0"/><rect x="11.500" y="3.500" width="2" height="2" fill="#f00"/><path d="M1.500 11.500h6" stroke="#f00" stroke-width="2"/><rect x="13" y=".5" width="3" height="2" fill="#000"/><rect x="13.500" y="5" width="2" height="2" fill="#000"/><rect x="13.500" y="9" width="2" height="2" fill="#000"/><rect x="13" y="13" width="3" height="2" fill="#000"/></svg>
<span class="t" style="left:1143px;top:371px;font-size:11.5px;line-height:14px;height:14px;color:#000;transform:scaleX(0.9547);transform-origin:0 0;">Borrar</span>
<svg style="left:1205px;top:368px" width="18" height="18" viewBox="0 0 18 18"><path d="M6.500 2.500h6l3.500 3.500v10.500h-9.500z" fill="#fff" stroke="#000" stroke-width="1"/><path d="M12.500 2.500v3.500h3.500" fill="none" stroke="#000" stroke-width="1"/><path d="M9 8h5M9 10.500h5M10 13h4" stroke="#000" stroke-width="1" stroke-dasharray="1 1"/><path d="M2.500 7.500l4-1 4 3.500 1 2.500-2 2.500-5 .5-2-2z" fill="#ffff66" stroke="#000" stroke-width=".9"/><path d="M0 8h2.500v5h-2.500z" fill="#00d8e8"/><path d="M4 10h4M4 12h5" stroke="#b8a800" stroke-width=".8"/><path d="M3 1l8 8.500" stroke="#000" stroke-width="2.600"/><path d="M3.500 1.500l7.500 8" stroke="#ffd800" stroke-width="1.300"/><path d="M3 1l1.500 1.600" stroke="#e00" stroke-width="1.500"/></svg>
<span class="t" style="left:1226px;top:371px;font-size:11.5px;line-height:14px;height:14px;color:#000;transform:scaleX(0.8988);transform-origin:0 0;">Editar</span>
<span class="t" style="left:1293.5px;top:371px;font-size:11.5px;line-height:14px;height:14px;color:#000;transform:scaleX(0.9348);transform-origin:0 0;">Ver Grupo</span>
<svg style="left:1347px;top:368px" width="18" height="18" viewBox="0 0 18 18"><path d="M6.500 2.500h6l3.500 3.500v10.500h-9.500z" fill="#fff" stroke="#000" stroke-width="1"/><path d="M12.500 2.500v3.500h3.500" fill="none" stroke="#000" stroke-width="1"/><path d="M9 8h5M9 10.500h5M10 13h4" stroke="#000" stroke-width="1" stroke-dasharray="1 1"/><path d="M2.500 7.500l4-1 4 3.500 1 2.500-2 2.500-5 .5-2-2z" fill="#ffff66" stroke="#000" stroke-width=".9"/><path d="M0 8h2.500v5h-2.500z" fill="#00d8e8"/><path d="M4 10h4M4 12h5" stroke="#b8a800" stroke-width=".8"/><path d="M3 1l8 8.500" stroke="#000" stroke-width="2.600"/><path d="M3.500 1.500l7.500 8" stroke="#ffd800" stroke-width="1.300"/><path d="M3 1l1.500 1.600" stroke="#e00" stroke-width="1.500"/></svg>
<div style="left:1347px;top:368px;width:4px;height:3px;background:#20d8e8"></div>
<div style="left:785px;top:392px;width:574px;height:103px;background:#f0fbff;border-top:1px solid #6d7a8a;border-left:1px solid #6d7a8a"></div>
<div style="left:786px;top:393px;width:12px;height:19px;background:#f0f0f0;border-right:1px solid #000;border-bottom:1px solid #000;border-top:1px solid #fff;border-left:1px solid #fff"></div>
<div style="left:786px;top:412px;width:12px;height:19px;background:#f0f0f0;border-right:1px solid #000;border-bottom:1px solid #000;border-top:1px solid #fff;border-left:1px solid #fff"></div>
<div style="left:786px;top:431px;width:12px;height:19px;background:#f0f0f0;border-right:1px solid #000;border-bottom:1px solid #000;border-top:1px solid #fff;border-left:1px solid #fff"></div>
<div style="left:798px;top:393px;width:68px;height:19px;background:#f0f0f0;border-right:1px solid #000;border-bottom:1px solid #000;border-top:1px solid #fff;border-left:1px solid #fff"></div>
<span class="t" style="left:800px;top:396px;font-size:11px;line-height:13px;height:13px;color:#000;transform:scaleX(0.9800);transform-origin:0 0;">Indicativo</span>
<div style="left:798px;top:412px;width:68px;height:19px;border-right:1px solid #c0c0c0;border-bottom:1px solid #c0c0c0"></div>
<span class="t" style="left:800px;top:415px;font-size:11px;line-height:13px;height:13px;color:#000;">9A9A</span>
<div style="left:798px;top:431px;width:68px;height:19px;border-right:1px solid #c0c0c0;border-bottom:1px solid #c0c0c0"></div>
<span class="t" style="left:800px;top:434px;font-size:11px;line-height:13px;height:13px;color:#000;">9A9A</span>
<div style="left:866px;top:393px;width:54.5px;height:19px;background:#f0f0f0;border-right:1px solid #000;border-bottom:1px solid #000;border-top:1px solid #fff;border-left:1px solid #fff"></div>
<span class="t" style="left:868px;top:396px;font-size:11px;line-height:13px;height:13px;color:#000;transform:scaleX(0.9800);transform-origin:0 0;">Banda</span>
<div style="left:866px;top:412px;width:54.5px;height:19px;border-right:1px solid #c0c0c0;border-bottom:1px solid #c0c0c0"></div>
<span class="t" style="left:868px;top:415px;font-size:11px;line-height:13px;height:13px;color:#000;">20m</span>
<div style="left:866px;top:431px;width:54.5px;height:19px;border-right:1px solid #c0c0c0;border-bottom:1px solid #c0c0c0"></div>
<span class="t" style="left:868px;top:434px;font-size:11px;line-height:13px;height:13px;color:#000;">20m</span>
<div style="left:920.5px;top:393px;width:54.5px;height:19px;background:#f0f0f0;border-right:1px solid #000;border-bottom:1px solid #000;border-top:1px solid #fff;border-left:1px solid #fff"></div>
<span class="t" style="left:922.5px;top:396px;font-size:11px;line-height:13px;height:13px;color:#000;transform:scaleX(0.9800);transform-origin:0 0;">Modo</span>
<div style="left:920.5px;top:412px;width:54.5px;height:19px;border-right:1px solid #c0c0c0;border-bottom:1px solid #c0c0c0"></div>
<span class="t" style="left:922.5px;top:415px;font-size:11px;line-height:13px;height:13px;color:#000;">CW</span>
<div style="left:920.5px;top:431px;width:54.5px;height:19px;border-right:1px solid #c0c0c0;border-bottom:1px solid #c0c0c0"></div>
<span class="t" style="left:922.5px;top:434px;font-size:11px;line-height:13px;height:13px;color:#000;">CW</span>
<div style="left:975px;top:393px;width:73.5px;height:19px;background:#f0f0f0;border-right:1px solid #000;border-bottom:1px solid #000;border-top:1px solid #fff;border-left:1px solid #fff"></div>
<span class="t" style="left:977px;top:396px;font-size:11px;line-height:13px;height:13px;color:#000;transform:scaleX(0.9800);transform-origin:0 0;">Fecha</span>
<div style="left:975px;top:412px;width:73.5px;height:19px;border-right:1px solid #c0c0c0;border-bottom:1px solid #c0c0c0"></div>
<span class="t" style="left:977px;top:415px;font-size:11px;line-height:13px;height:13px;color:#000;">24.05.2003</span>
<div style="left:975px;top:431px;width:73.5px;height:19px;border-right:1px solid #c0c0c0;border-bottom:1px solid #c0c0c0"></div>
<span class="t" style="left:977px;top:434px;font-size:11px;line-height:13px;height:13px;color:#000;">30.11.2008</span>
<div style="left:1048.5px;top:393px;width:64.5px;height:19px;background:#f0f0f0;border-right:1px solid #000;border-bottom:1px solid #000;border-top:1px solid #fff;border-left:1px solid #fff"></div>
<span class="t" style="left:1050.5px;top:396px;font-size:11px;line-height:13px;height:13px;color:#000;transform:scaleX(0.9800);transform-origin:0 0;">Acción QSL</span>
<div style="left:1048.5px;top:412px;width:64.5px;height:19px;border-right:1px solid #c0c0c0;border-bottom:1px solid #c0c0c0"></div>
<span class="t" style="left:1050.5px;top:415px;font-size:11px;line-height:13px;height:13px;color:#000;">bureau</span>
<div style="left:1048.5px;top:431px;width:64.5px;height:19px;border-right:1px solid #c0c0c0;border-bottom:1px solid #c0c0c0"></div>
<span class="t" style="left:1050.5px;top:434px;font-size:11px;line-height:13px;height:13px;color:#000;">bureau</span>
<div style="left:1113px;top:393px;width:65px;height:19px;background:#f0f0f0;border-right:1px solid #000;border-bottom:1px solid #000;border-top:1px solid #fff;border-left:1px solid #fff"></div>
<span class="t" style="left:1115px;top:396px;font-size:11px;line-height:13px;height:13px;color:#000;transform:scaleX(0.9800);transform-origin:0 0;">QSL Rec</span>
<div style="left:1113px;top:412px;width:65px;height:19px;border-right:1px solid #c0c0c0;border-bottom:1px solid #c0c0c0"></div>
<span class="t" style="left:1167.88296875px;top:415px;font-size:11px;line-height:13px;height:13px;color:#000;">0</span>
<div style="left:1113px;top:431px;width:65px;height:19px;border-right:1px solid #c0c0c0;border-bottom:1px solid #c0c0c0"></div>
<span class="t" style="left:1167.88296875px;top:434px;font-size:11px;line-height:13px;height:13px;color:#000;">0</span>
<div style="left:1178px;top:393px;width:65px;height:19px;background:#f0f0f0;border-right:1px solid #000;border-bottom:1px solid #000;border-top:1px solid #fff;border-left:1px solid #fff"></div>
<span class="t" style="left:1180px;top:396px;font-size:11px;line-height:13px;height:13px;color:#000;transform:scaleX(0.9800);transform-origin:0 0;">QSL Env</span>
<div style="left:1178px;top:412px;width:65px;height:19px;border-right:1px solid #c0c0c0;border-bottom:1px solid #c0c0c0"></div>
<span class="t" style="left:1232.88296875px;top:415px;font-size:11px;line-height:13px;height:13px;color:#000;">1</span>
<div style="left:1178px;top:431px;width:65px;height:19px;border-right:1px solid #c0c0c0;border-bottom:1px solid #c0c0c0"></div>
<span class="t" style="left:1232.88296875px;top:434px;font-size:11px;line-height:13px;height:13px;color:#000;">1</span>
<div style="left:1243px;top:393px;width:46px;height:19px;background:#f0f0f0;border-right:1px solid #000;border-bottom:1px solid #000;border-top:1px solid #fff;border-left:1px solid #fff"></div>
<span class="t" style="left:1245px;top:396px;font-size:11px;line-height:13px;height:13px;color:#000;transform:scaleX(0.9800);transform-origin:0 0;">LOTW</span>
<div style="left:1243px;top:412px;width:46px;height:19px;border-right:1px solid #c0c0c0;border-bottom:1px solid #c0c0c0"></div>
<span class="t" style="left:1278.88296875px;top:415px;font-size:11px;line-height:13px;height:13px;color:#000;">1</span>
<div style="left:1243px;top:431px;width:46px;height:19px;border-right:1px solid #c0c0c0;border-bottom:1px solid #c0c0c0"></div>
<span class="t" style="left:1278.88296875px;top:434px;font-size:11px;line-height:13px;height:13px;color:#000;">1</span>
<div style="left:1289px;top:393px;width:65px;height:19px;background:#f0f0f0;border-right:1px solid #000;border-bottom:1px solid #000;border-top:1px solid #fff;border-left:1px solid #fff"></div>
<span class="t" style="left:1291px;top:396px;font-size:11px;line-height:13px;height:13px;color:#000;transform:scaleX(0.9800);transform-origin:0 0;">eQSL</span>
<div style="left:1289px;top:412px;width:65px;height:19px;border-right:1px solid #c0c0c0;border-bottom:1px solid #c0c0c0"></div>
<span class="t" style="left:1343.88296875px;top:415px;font-size:11px;line-height:13px;height:13px;color:#000;">0</span>
<div style="left:1289px;top:431px;width:65px;height:19px;border-right:1px solid #c0c0c0;border-bottom:1px solid #c0c0c0"></div>
<span class="t" style="left:1343.88296875px;top:434px;font-size:11px;line-height:13px;height:13px;color:#000;">0</span>
<div style="left:1354px;top:393px;width:5px;height:19px;background:#f0f0f0;border-right:1px solid #000;border-bottom:1px solid #000;border-top:1px solid #fff;border-left:1px solid #fff"></div>
<div style="left:1354px;top:412px;width:5px;height:19px;border-bottom:1px solid #c0c0c0"></div>
<div style="left:1356px;top:418px;width:2px;height:6px;background:#f0a030"></div>
<div style="left:1354px;top:431px;width:5px;height:19px;border-bottom:1px solid #c0c0c0"></div>
<div style="left:1356px;top:437px;width:2px;height:6px;background:#f0a030"></div>
<svg style="left:788px;top:416px" width="7" height="11" viewBox="0 0 7 11"><path d="M0 0l6 5.500-6 5.500z" fill="#000"/></svg>
<div style="left:1359px;top:392px;width:18px;height:103px;background:#f0f0f0"></div>
<div style="left:1361px;top:411px;width:14px;height:44px;background:#cdcdcd"></div>
<svg style="left:1359px;top:392px" width="18" height="103" viewBox="0 0 18 103"><path d="M5.500 11l3.500-3.500 3.500 3.500M5.500 92l3.500 3.500 3.500-3.500" fill="none" stroke="#505050" stroke-width="1.500"/></svg>
<div style="left:785px;top:495px;width:592px;height:17px;background:#f0f0f0"></div>
<div style="left:803px;top:497px;width:17px;height:13px;background:#cdcdcd"></div>
<svg style="left:785px;top:495px" width="592" height="17" viewBox="0 0 592 17"><path d="M11 5l-3.500 3.500 3.500 3.500M564 5l3.500 3.500-3.500 3.500" fill="none" stroke="#505050" stroke-width="1.500"/><g fill="#b0b0b0"><rect x="587" y="12" width="2" height="2"/><rect x="583" y="12" width="2" height="2"/><rect x="587" y="8" width="2" height="2"/><rect x="579" y="12" width="2" height="2"/><rect x="583" y="8" width="2" height="2"/><rect x="587" y="4" width="2" height="2"/></g></svg>
<div style="left:0px;top:1013px;width:1920px;height:27px;background:#f0f0f0"></div>
<div style="left:0px;top:1013px;width:1920px;height:4px;background:linear-gradient(#d8dde4,#fff 60%,#fff)"></div>
<div style="left:2px;top:1017px;width:1653px;height:20px;background:#3a6ea5"></div>
<div style="left:1656px;top:1017px;width:262px;height:20px;background:#c0c0c0;border:1px solid;border-color:#808080 #fff #fff #808080"></div>
<div style="left:0px;top:1037px;width:1920px;height:3px;background:#c8c8c8"></div>
<span class="t" style="left:5px;top:1020px;font-size:11px;line-height:14px;height:14px;color:#fff;font-weight:bold;transform:scaleX(1.0448);transform-origin:0 0;">Pulse el botón derecho del ratón para el menú, haga doble click para editar</span>
</div></body></html>
